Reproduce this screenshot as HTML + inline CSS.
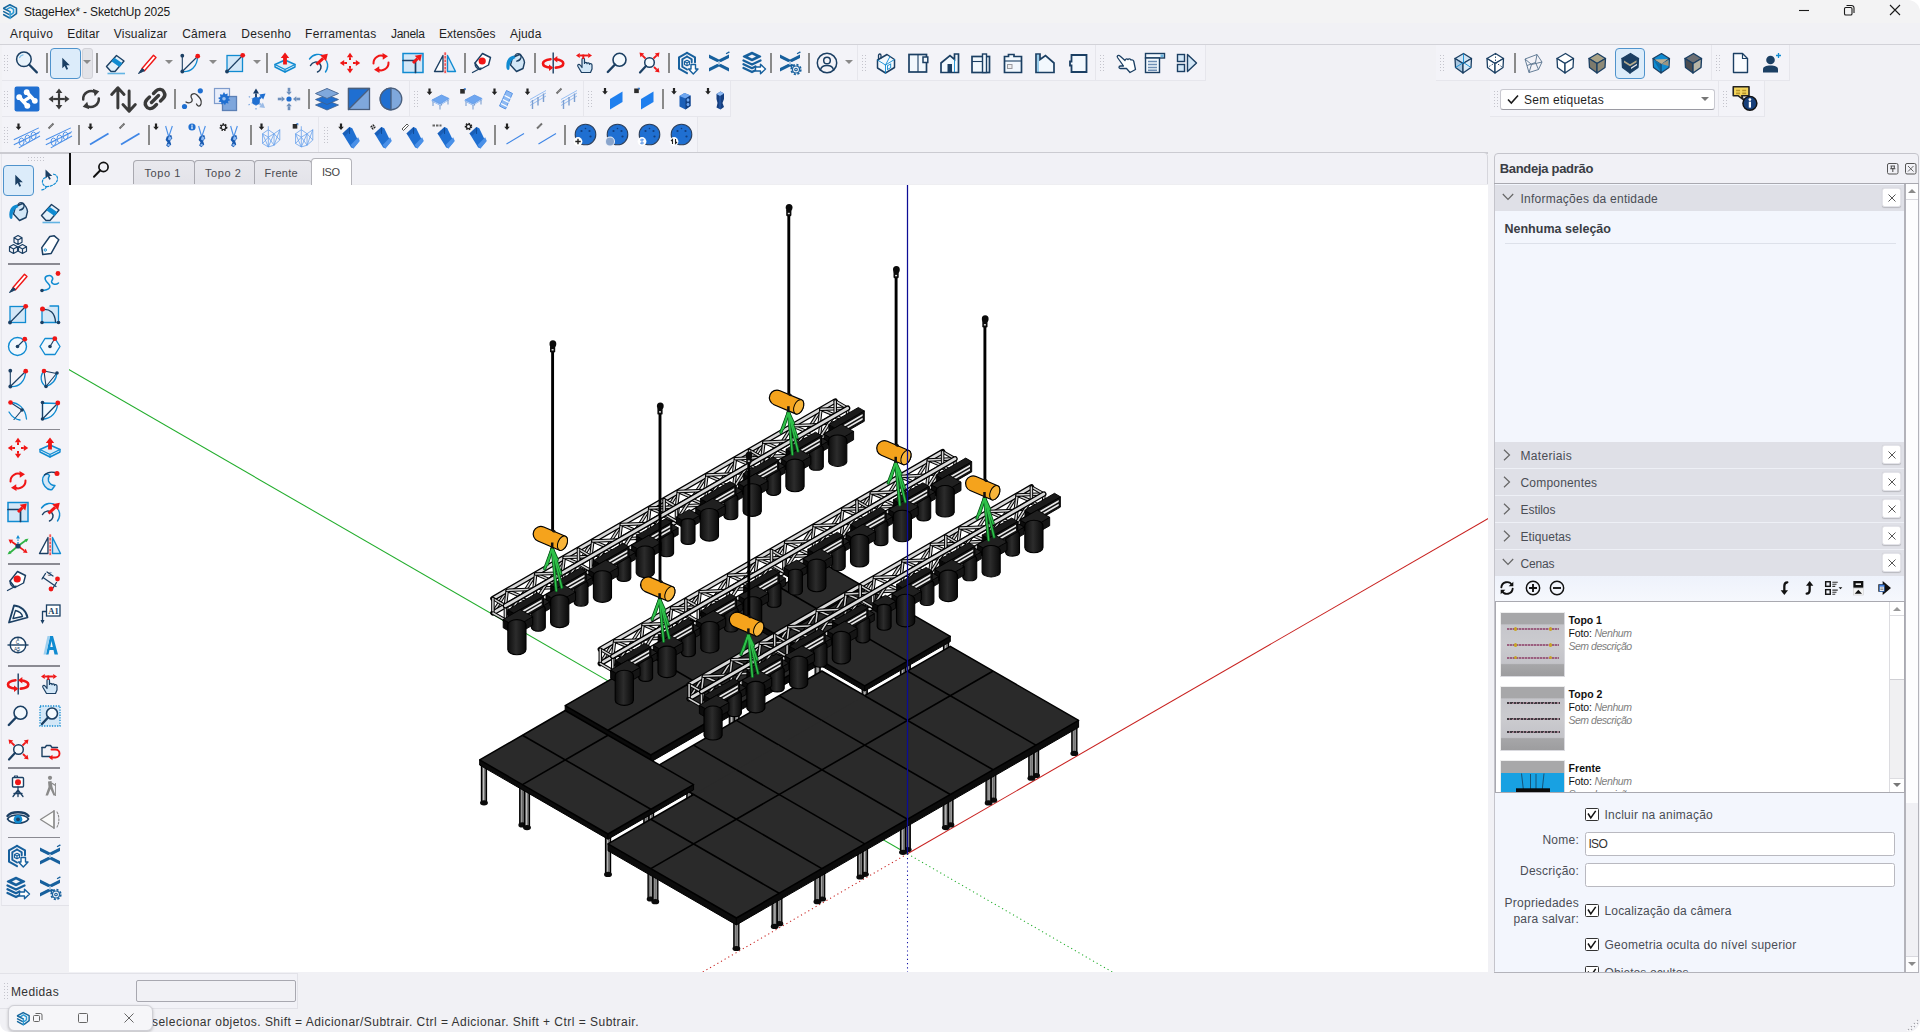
<!DOCTYPE html>
<html lang="pt-BR"><head><meta charset="utf-8"><title>StageHex* - SketchUp 2025</title>
<style>
html,body{margin:0;padding:0;}
body{width:1920px;height:1032px;overflow:hidden;background:#f1f1f5;font-family:"Liberation Sans",sans-serif;}
#app{position:relative;width:1920px;height:1032px;overflow:hidden;background:#f1f1f5;}
.t{position:absolute;white-space:nowrap;line-height:20px;height:20px;}
.b{position:absolute;box-sizing:border-box;}
.i{position:absolute;overflow:visible;}
.grip{position:absolute;width:5px;background-image:radial-gradient(circle,#c4c4cc 0.7px,transparent 0.9px);background-size:3px 3px;}

</style></head>
<body>
<div id="app">
<div class="b" style="left:0px;top:0px;width:1920px;height:23px;background:#f3f3f4"></div>
<svg class="i" style="left:1.55px;top:2.75px" width="16.5" height="16.5" viewBox="0 0 24 24"><path d="M2.500 7.500L11.500 2.500 21 7.500V15.500L13.500 21" fill="none" stroke="#15689f" stroke-width="2.3" stroke-linecap="round" stroke-linejoin="round" /><path d="M7.500 9L12 6.300 16.800 9.300V14L13.500 16.500" fill="none" stroke="#2a9bd6" stroke-width="2.3" stroke-linecap="round" stroke-linejoin="round" /><path d="M2.500 8L11.500 12.500M2.500 12.500L10 16.500M2.500 17L10.500 21.500" fill="none" stroke="#15689f" stroke-width="2.3" stroke-linecap="round" stroke-linejoin="round" /><path d="M11.800 12.500V22.500" fill="none" stroke="#2a9bd6" stroke-width="2.2" stroke-linecap="round" stroke-linejoin="round" /></svg>
<div class="t " style="left:24.00px;top:1.84px;font-size:12px;letter-spacing:-0.164px;color:#1a1a1a;">StageHex* - SketchUp 2025</div>
<svg class="i" style="left:1795px;top:0" width="120" height="22" viewBox="1795 0 120 22" fill="none" stroke="#1a1a1a" stroke-width="1.1"><path d="M1799 10.5H1809"/><rect x="1844.5" y="7.5" width="7.5" height="7.5" rx="1.3"/><path d="M1846.5 5.5h5a2.5 2.5 0 0 1 2.5 2.5v5"/><path d="M1890 5L1900 15M1900 5L1890 15"/></svg>
<div class="t " style="left:10.00px;top:24.14px;font-size:12px;letter-spacing:0.373px;color:#1f1f1f;">Arquivo</div>
<div class="t " style="left:67.20px;top:24.14px;font-size:12px;letter-spacing:0.192px;color:#1f1f1f;">Editar</div>
<div class="t " style="left:113.80px;top:24.14px;font-size:12px;letter-spacing:0.190px;color:#1f1f1f;">Visualizar</div>
<div class="t " style="left:182.20px;top:24.14px;font-size:12px;letter-spacing:0.237px;color:#1f1f1f;">Câmera</div>
<div class="t " style="left:241.30px;top:24.14px;font-size:12px;letter-spacing:0.281px;color:#1f1f1f;">Desenho</div>
<div class="t " style="left:305.00px;top:24.14px;font-size:12px;letter-spacing:0.316px;color:#1f1f1f;">Ferramentas</div>
<div class="t " style="left:391.00px;top:24.14px;font-size:12px;letter-spacing:-0.310px;color:#1f1f1f;">Janela</div>
<div class="t " style="left:439.00px;top:24.14px;font-size:12px;letter-spacing:0.052px;color:#1f1f1f;">Extensões</div>
<div class="t " style="left:510.00px;top:24.14px;font-size:12px;letter-spacing:0.162px;color:#1f1f1f;">Ajuda</div>
<div class="b" style="left:0px;top:43.7px;width:1920px;height:1.5px;background:#d2d2d8"></div>
<svg class="i" style="left:1908px;top:0" width="12" height="12" viewBox="0 0 12 12"><path d="M0 0H12V12A12 12 0 0 0 0 0Z" fill="#fff"/></svg>
<div class="b" style="left:2px;top:45px;width:856px;height:36px;background:#f3f3f8;border-right:1px solid #e6e6ec;border-bottom:1px solid #e6e6ec;"></div>
<div class="b" style="left:858px;top:45px;width:238px;height:36px;background:#f3f3f8;border-right:1px solid #e6e6ec;border-bottom:1px solid #e6e6ec;"></div>
<div class="b" style="left:1096px;top:45px;width:110px;height:36px;background:#f3f3f8;border-right:1px solid #e6e6ec;border-bottom:1px solid #e6e6ec;"></div>
<div class="b" style="left:1436px;top:45px;width:276px;height:36px;background:#f3f3f8;border-right:1px solid #e6e6ec;border-bottom:1px solid #e6e6ec;"></div>
<div class="b" style="left:1712px;top:45px;width:78px;height:36px;background:#f3f3f8;border-right:1px solid #e6e6ec;border-bottom:1px solid #e6e6ec;"></div>
<div class="b" style="left:2px;top:81px;width:408px;height:36px;background:#f3f3f8;border-right:1px solid #e6e6ec;border-bottom:1px solid #e6e6ec;"></div>
<div class="b" style="left:410px;top:81px;width:174px;height:36px;background:#f3f3f8;border-right:1px solid #e6e6ec;border-bottom:1px solid #e6e6ec;"></div>
<div class="b" style="left:584px;top:81px;width:147px;height:36px;background:#f3f3f8;border-right:1px solid #e6e6ec;border-bottom:1px solid #e6e6ec;"></div>
<div class="b" style="left:1490px;top:81px;width:229px;height:36px;background:#f3f3f8;border-right:1px solid #e6e6ec;border-bottom:1px solid #e6e6ec;"></div>
<div class="b" style="left:1719px;top:81px;width:46px;height:36px;background:#f3f3f8;border-right:1px solid #e6e6ec;border-bottom:1px solid #e6e6ec;"></div>
<div class="b" style="left:2px;top:117px;width:317px;height:36px;background:#f3f3f8;border-right:1px solid #e6e6ec;border-bottom:1px solid #e6e6ec;"></div>
<div class="b" style="left:319px;top:117px;width:379px;height:36px;background:#f3f3f8;border-right:1px solid #e6e6ec;border-bottom:1px solid #e6e6ec;"></div>
<div class="grip" style="left:3px;top:54px;height:18px"></div>
<div class="grip" style="left:861px;top:54px;height:18px"></div>
<div class="grip" style="left:1099px;top:54px;height:18px"></div>
<div class="grip" style="left:1439px;top:54px;height:18px"></div>
<div class="grip" style="left:1715px;top:54px;height:18px"></div>
<div class="grip" style="left:3px;top:90px;height:18px"></div>
<div class="grip" style="left:413px;top:90px;height:18px"></div>
<div class="grip" style="left:587px;top:90px;height:18px"></div>
<div class="grip" style="left:1493px;top:90px;height:18px"></div>
<div class="grip" style="left:1722px;top:90px;height:18px"></div>
<div class="grip" style="left:3px;top:126px;height:18px"></div>
<div class="grip" style="left:323px;top:126px;height:18px"></div>
<svg class="i" style="left:15.00px;top:51.00px" width="24" height="24" viewBox="0 0 24 24"><circle cx="8.900" cy="8.300" r="7.300" fill="#e9f3fb" stroke="#1b3f63" stroke-width="1.5"/><path d="M4.600 6.500a5 5 0 0 1 3.400-2.700" fill="none" stroke="#7fc1ea" stroke-width="1.3" stroke-linecap="round" stroke-linejoin="round" /><path d="M14.300 13.800L21.800 21.400" stroke="#1b3f63" stroke-width="2.300" stroke-linecap="round"/></svg>
<div class="b" style="left:46px;top:53px;width:2px;height:20px;background:#8a8a8a"></div>
<div class="b" style="left:50px;top:48px;width:30.5px;height:31px;background:#dcecfa;border:1px solid #4f93cc;border-radius:4px"></div>
<svg class="i" style="left:52.50px;top:51.00px" width="24" height="24" viewBox="0 0 24 24"><path d="M9.300 6.800V17.300L11.700 15 13.400 18.700 15.100 17.900 13.400 14.300H16.800Z" fill="#1b3f63"/></svg>
<div class="b" style="left:81.5px;top:48px;width:11px;height:31px;background:#e3e3e8;border:1px solid #d2d2d8;border-radius:3px"></div>
<svg class="i" style="left:83px;top:59.5px" width="8" height="4" viewBox="0 0 8 4"><path d="M0 0H8L4 4Z" fill="#8a8a8a"/></svg>
<div class="b" style="left:96px;top:53px;width:2px;height:20px;background:#8a8a8a"></div>
<svg class="i" style="left:102.50px;top:51.00px" width="24" height="24" viewBox="0 0 24 24"><path d="M3.500 15.500L13.500 4.500 21 10 12 20.500H8Z" fill="#e3f0fa" stroke="#1b3f63" stroke-width="1.4" stroke-linejoin="round"/><path d="M8.300 10.200L16.500 16 19.400 12.300 11.400 6.700Z" fill="#108bd1"/><path d="M4.500 22.500H22" stroke="#63b4e4" stroke-width="1.600"/></svg>
<svg class="i" style="left:134.50px;top:51.00px" width="24" height="24" viewBox="0 0 24 24"><path d="M7 17.500L18.500 4.300 21 6.500 9.500 19.700Z" fill="#fff" stroke="#f01616" stroke-width="1.400" stroke-linejoin="round"/><path d="M7 17.500L9.500 19.700 3.500 22.500Z" fill="#1b3f63" stroke="#1b3f63" stroke-width="1" stroke-linejoin="round"/></svg>
<svg class="i" style="left:165px;top:59.5px" width="8" height="4" viewBox="0 0 8 4"><path d="M0 0H8L4 4Z" fill="#8a8a8a"/></svg>
<svg class="i" style="left:178.00px;top:51.00px" width="24" height="24" viewBox="0 0 24 24"><path d="M4.300 20.500V5" fill="none" stroke="#1b3f63" stroke-width="1.1" stroke-linecap="round" stroke-linejoin="round" /><path d="M4.300 20.500L19.500 5.500" fill="none" stroke="#1b3f63" stroke-width="1.2" stroke-linecap="round" stroke-linejoin="round" /><path d="M4.300 20.500C13 21.500 19.500 15 19.500 5.500" fill="none" stroke="#108bd1" stroke-width="1.3" stroke-linecap="round" stroke-linejoin="round" /><circle cx="4.300" cy="4.700" r="1.900" fill="#1b3f63"/><circle cx="4.300" cy="20.500" r="1.900" fill="#1b3f63"/><circle cx="19.700" cy="5.200" r="2.400" fill="#f01616"/></svg>
<svg class="i" style="left:209px;top:59.5px" width="8" height="4" viewBox="0 0 8 4"><path d="M0 0H8L4 4Z" fill="#8a8a8a"/></svg>
<svg class="i" style="left:222.50px;top:51.00px" width="24" height="24" viewBox="0 0 24 24"><rect x="4" y="4.500" width="15.500" height="16" fill="#d3e7f7" stroke="#108bd1" stroke-width="1.300"/><path d="M4 20.500L19.500 4.500" stroke="#1b3f63" stroke-width="1.200"/><circle cx="4" cy="20.500" r="1.900" fill="#1b3f63"/><circle cx="19.700" cy="4.300" r="2.400" fill="#f01616"/></svg>
<svg class="i" style="left:253px;top:59.5px" width="8" height="4" viewBox="0 0 8 4"><path d="M0 0H8L4 4Z" fill="#8a8a8a"/></svg>
<div class="b" style="left:266px;top:53px;width:2px;height:20px;background:#8a8a8a"></div>
<svg class="i" style="left:273.00px;top:51.00px" width="24" height="24" viewBox="0 0 24 24"><path d="M2 13.500L12 9l10 4.500v2.500L12 21 2 16Z" fill="#dcedf9" stroke="#108bd1" stroke-width="1.400" stroke-linejoin="round"/><path d="M2 13.500L12 18.500 22 13.500M12 18.500V21" fill="none" stroke="#108bd1" stroke-width="1.3" stroke-linecap="round" stroke-linejoin="round" /><path d="M12 1.500L16.200 7H13.900V13.500H10.100V7H7.800Z" fill="#f01616"/></svg>
<svg class="i" style="left:305.50px;top:51.00px" width="24" height="24" viewBox="0 0 24 24"><path d="M3.500 8C7 3 14 2 18 5.500" fill="none" stroke="#108bd1" stroke-width="1.4" stroke-linecap="round" stroke-linejoin="round" /><path d="M20.500 10C22.500 14 21.500 18 19.500 21" fill="none" stroke="#108bd1" stroke-width="1.4" stroke-linecap="round" stroke-linejoin="round" /><path d="M4.500 14.500C6.500 10.500 11.500 10 14 13 16 15.500 15 19.500 11.500 21" fill="none" stroke="#1b3f63" stroke-width="1.5" stroke-linecap="round" stroke-linejoin="round" /><path d="M10.5 13.5L17.1 7.3" stroke="#f01616" stroke-width="3.0" fill="none"/><path d="M21.8 2.8L20.0 10.3L14.2 4.2Z" fill="#f01616"/></svg>
<svg class="i" style="left:337.50px;top:51.00px" width="24" height="24" viewBox="0 0 24 24"><path d="M12.0 9.0L12.0 6.2" stroke="#f01616" stroke-width="2.0" fill="none"/><path d="M12.0 1.8L15.1 6.2L8.9 6.2Z" fill="#f01616"/><path d="M12.0 15.0L12.0 17.8" stroke="#f01616" stroke-width="2.0" fill="none"/><path d="M12.0 22.2L8.9 17.8L15.1 17.8Z" fill="#f01616"/><path d="M9.0 12.0L6.2 12.0" stroke="#f01616" stroke-width="2.0" fill="none"/><path d="M1.8 12.0L6.2 8.9L6.2 15.1Z" fill="#f01616"/><path d="M15.0 12.0L17.8 12.0" stroke="#f01616" stroke-width="2.0" fill="none"/><path d="M22.2 12.0L17.8 15.1L17.8 8.9Z" fill="#f01616"/></svg>
<svg class="i" style="left:369.00px;top:51.00px" width="24" height="24" viewBox="0 0 24 24"><path d="M4.500 12.500A7.500 7.500 0 0 1 15.500 5.500" fill="none" stroke="#f01616" stroke-width="2" stroke-linecap="round" stroke-linejoin="round" /><path d="M13.500 2L19 5.200 13.800 8.800Z" fill="#f01616"/><path d="M19.500 11.500A7.500 7.500 0 0 1 8.500 18.500" fill="none" stroke="#f01616" stroke-width="2" stroke-linecap="round" stroke-linejoin="round" /><path d="M10.500 22L5 18.800 10.200 15.200Z" fill="#f01616"/></svg>
<svg class="i" style="left:401.00px;top:51.00px" width="24" height="24" viewBox="0 0 24 24"><rect x="2" y="2.500" width="20" height="19" fill="#d3e7f7" stroke="#108bd1" stroke-width="1.500"/><path d="M2 9.500H14.500V21.500" fill="none" stroke="#1b3f63" stroke-width="1.7" stroke-linecap="round" stroke-linejoin="round" /><path d="M12.0 12.0L16.5 7.7" stroke="#f01616" stroke-width="3.0" fill="none"/><path d="M20.8 3.5L19.3 10.5L13.7 4.8Z" fill="#f01616"/></svg>
<svg class="i" style="left:433.00px;top:51.00px" width="24" height="24" viewBox="0 0 24 24"><path d="M10 4.500V20.500H1.500Z" fill="#fff" stroke="#1b3f63" stroke-width="1.400" stroke-linejoin="round"/><path d="M14.500 4.500V20.500H22.500Z" fill="#d3e7f7" stroke="#108bd1" stroke-width="1.400" stroke-linejoin="round"/><path d="M12.200 1.500V22.500" stroke="#f01616" stroke-width="1.600" stroke-dasharray="2.400 1.200"/><path d="M12.200 1.500V22.500" stroke="#f7a0a0" stroke-width="3" opacity=".45"/></svg>
<div class="b" style="left:463.75px;top:53px;width:2px;height:20px;background:#8a8a8a"></div>
<svg class="i" style="left:470.50px;top:51.00px" width="24" height="24" viewBox="0 0 24 24"><path d="M4 12L11.500 2.500 19.500 6.500 17.500 14 9 18.500Z" fill="#fff" stroke="#1b3f63" stroke-width="1.400" stroke-linejoin="round"/><path d="M4 12C4 15 5.500 17.500 9 18.500" fill="none" stroke="#1b3f63" stroke-width="1.3" stroke-linecap="round" stroke-linejoin="round" /><path d="M1.500 21.500L10 17" fill="none" stroke="#1b3f63" stroke-width="1.4" stroke-linecap="round" stroke-linejoin="round" /><circle cx="11.200" cy="10" r="3.600" fill="#f01616"/></svg>
<svg class="i" style="left:502.50px;top:51.00px" width="24" height="24" viewBox="0 0 24 24"><path d="M9.500 6.500L16.500 3.500C19 5 21 8 21.500 11.500L20 17.500 13.500 20.500 7.500 14Z" fill="#d3e7f7" stroke="#1b3f63" stroke-width="1.400" stroke-linejoin="round"/><path d="M12 4.500C14 1.500 19 2.500 18 6.500 17.300 9 15.300 10 13.700 10.200" fill="none" stroke="#1b3f63" stroke-width="1.3" stroke-linecap="round" stroke-linejoin="round" /><path d="M11 4.500C6 5 2.500 10 3.500 17 4 19.500 6.500 19.500 6.500 17 6.500 12 8.500 8.500 12.500 7Z" fill="#108bd1"/></svg>
<div class="b" style="left:533.75px;top:53px;width:2px;height:20px;background:#8a8a8a"></div>
<svg class="i" style="left:541.00px;top:51.00px" width="24" height="24" viewBox="0 0 24 24"><path d="M12.200 1.500V22.500" stroke="#1b3f63" stroke-width="1.400"/><path d="M9.500 8.200C4.500 8.800 2 10.500 2 12.500 2 14.800 5.500 16.300 9.500 16.600" fill="none" stroke="#f01616" stroke-width="2.6" stroke-linecap="round" stroke-linejoin="round" /><path d="M8 13.600L12.300 16.800 8 20Z" fill="#f01616"/><path d="M14.800 16.600C19.500 16.200 22.300 14.600 22.300 12.500 22.300 10.500 19.500 8.800 14.800 8.200" fill="none" stroke="#f01616" stroke-width="2.6" stroke-linecap="round" stroke-linejoin="round" /><path d="M16.300 5L12 8.200 16.300 11.400Z" fill="#f01616"/></svg>
<svg class="i" style="left:573.00px;top:51.00px" width="24" height="24" viewBox="0 0 24 24"><path d="M8.500 21.500L5 15.500C4 13.500 6 12.500 7.500 14.500L9 16.500V8.500C9 6.500 11.500 6.500 11.500 8.500V12.500C11.500 11 14 11 14 12.700 14 11.500 16.500 11.500 16.500 13.300 16.500 12.200 19 12.300 19 14V18L17.500 21.500Z" fill="#d3e7f7" stroke="#1b3f63" stroke-width="1.200" stroke-linejoin="round"/><path d="M10.0 4.5L6.8 4.5" stroke="#f01616" stroke-width="1.9" fill="none"/><path d="M3.0 4.5L6.8 1.9L6.8 7.1Z" fill="#f01616"/><path d="M10.0 4.5L15.2 4.5" stroke="#f01616" stroke-width="1.9" fill="none"/><path d="M19.0 4.5L15.2 7.1L15.2 1.9Z" fill="#f01616"/><path d="M10.300 3.500V8" stroke="#f01616" stroke-width="1.900"/></svg>
<svg class="i" style="left:605.00px;top:51.00px" width="24" height="24" viewBox="0 0 24 24"><circle cx="14.500" cy="8.800" r="6.500" fill="#f4f9fd" stroke="#1b3f63" stroke-width="1.600"/><path d="M10 13.500L2.800 21" stroke="#1b3f63" stroke-width="2.400" stroke-linecap="round"/></svg>
<svg class="i" style="left:637.00px;top:51.00px" width="24" height="24" viewBox="0 0 24 24"><circle cx="12.500" cy="11.500" r="4.800" fill="#f4f9fd" stroke="#1b3f63" stroke-width="1.500"/><path d="M9 15L3 21.500" stroke="#1b3f63" stroke-width="2.200" stroke-linecap="round"/><path d="M8.5 7.5L5.3 4.3" stroke="#f01616" stroke-width="1.8" fill="none"/><path d="M2.5 1.5L7.2 2.5L3.5 6.2Z" fill="#f01616"/><path d="M16.5 7.5L19.7 4.3" stroke="#f01616" stroke-width="1.8" fill="none"/><path d="M22.5 1.5L21.5 6.2L17.8 2.5Z" fill="#f01616"/><path d="M17.0 16.0L19.7 18.7" stroke="#f01616" stroke-width="1.8" fill="none"/><path d="M22.5 21.5L17.8 20.5L21.5 16.8Z" fill="#f01616"/></svg>
<div class="b" style="left:667.75px;top:53px;width:2px;height:20px;background:#8a8a8a"></div>
<svg class="i" style="left:676.00px;top:51.00px" width="24" height="24" viewBox="0 0 24 24"><path d="M11 1.800L3 6.300v11.400l8 4.500" fill="none" stroke="#17609d" stroke-width="2.0" stroke-linecap="round" stroke-linejoin="round" /><path d="M11 1.800l8 4.500v5" fill="none" stroke="#17609d" stroke-width="2.0" stroke-linecap="round" stroke-linejoin="round" /><path d="M11 5.500L6.300 8.200v7.600l4.700 2.700" fill="none" stroke="#17609d" stroke-width="1.9" stroke-linecap="round" stroke-linejoin="round" /><path d="M11 5.500l4.700 2.700v3" fill="none" stroke="#17609d" stroke-width="1.9" stroke-linecap="round" stroke-linejoin="round" /><path d="M11 9.200l-2.500 1.400v2.800l2.500 1.400 2.500-1.400v-2.800zM11 12v2.800M8.500 10.600L11 12l2.500-1.400" fill="none" stroke="#17609d" stroke-width="1.1" stroke-linecap="round" stroke-linejoin="round" /><path d="M15 13.500h4.500v4.500h2.500l-4.700 5-4.800-5H15Z" fill="#fff" stroke="#17609d" stroke-width="1.400" stroke-linejoin="round"/></svg>
<svg class="i" style="left:707.00px;top:51.00px" width="24" height="24" viewBox="0 0 24 24"><path d="M2 3.500L12 8.500 22 3.500V7L12 12 2 7Z" fill="#17609d"/><path d="M2 20.500L12 15.500 22 20.500V17L12 12 2 17Z" fill="#17609d"/><path d="M3 8.800L12 13.200 21 8.800M3 15.200L12 10.800 21 15.200" stroke="#f3f3f8" stroke-width="1.200" fill="none"/><path d="M19.500 2.500l2.500-1.300" fill="none" stroke="#17609d" stroke-width="1.4" stroke-linecap="round" stroke-linejoin="round" /></svg>
<svg class="i" style="left:742.00px;top:51.00px" width="24" height="24" viewBox="0 0 24 24"><path d="M10 1.500L18.500 5.500 10 9.500 1.500 5.500Z" fill="#17609d" stroke="#17609d" stroke-width="1.500" stroke-linejoin="round"/><path d="M10 3.600l4 1.900L10 7.400 6 5.500Z" fill="#f3f3f8"/><path d="M1.500 9.500L10 13.500 18.500 9.500" fill="none" stroke="#17609d" stroke-width="2.3" stroke-linecap="round" stroke-linejoin="round" /><path d="M1.500 13.200L10 17.200 13.500 15.500" fill="none" stroke="#17609d" stroke-width="2.3" stroke-linecap="round" stroke-linejoin="round" /><path d="M1.500 17L10 21 12.500 19.800" fill="none" stroke="#17609d" stroke-width="2.3" stroke-linecap="round" stroke-linejoin="round" /><path d="M13.500 16h5v-2.800l5 4.800-5 4.800V20h-5Z" fill="#fff" stroke="#17609d" stroke-width="1.400" stroke-linejoin="round"/></svg>
<div class="b" style="left:769.6px;top:53px;width:2px;height:20px;background:#8a8a8a"></div>
<svg class="i" style="left:778.00px;top:51.00px" width="24" height="24" viewBox="0 0 24 24"><path d="M2 3.500L12 8.500 22 3.500V7L12 12 2 7Z" fill="#17609d"/><path d="M2 20.500L12 15.500 22 20.500V17L12 12 2 17Z" fill="#17609d"/><path d="M3 8.800L12 13.200 21 8.800M3 15.200L12 10.800 21 15.200" stroke="#f3f3f8" stroke-width="1.200" fill="none"/><path d="M19.500 2.500l2.500-1.300" fill="none" stroke="#17609d" stroke-width="1.4" stroke-linecap="round" stroke-linejoin="round" /><circle cx="18" cy="18.500" r="4.800" fill="#f3f3f8" stroke="#17609d" stroke-width="1.700" stroke-dasharray="2.100 1.650"/><circle cx="18" cy="18.500" r="3.500" fill="#f3f3f8" stroke="#17609d" stroke-width="1.200"/><circle cx="18" cy="18.500" r="1.300" fill="none" stroke="#17609d" stroke-width="1.100"/></svg>
<div class="b" style="left:807.75px;top:53px;width:2px;height:20px;background:#8a8a8a"></div>
<svg class="i" style="left:815.00px;top:51.00px" width="24" height="24" viewBox="0 0 24 24"><circle cx="12" cy="12" r="9.700" fill="none" stroke="#1b3f63" stroke-width="1.500"/><circle cx="12" cy="9.500" r="3.300" fill="none" stroke="#1b3f63" stroke-width="1.500"/><path d="M5.500 19C6 15.500 9 14.500 12 14.500S18 15.500 18.500 19" fill="none" stroke="#1b3f63" stroke-width="1.5" stroke-linecap="round" stroke-linejoin="round" /></svg>
<svg class="i" style="left:845px;top:59.5px" width="8" height="4" viewBox="0 0 8 4"><path d="M0 0H8L4 4Z" fill="#8a8a8a"/></svg>
<svg class="i" style="left:873.50px;top:51.00px" width="24" height="24" viewBox="0 0 24 24"><path d="M3.500 9L13 3.500 20.500 8.500V16.500L11.500 22 3.500 17Z" fill="#f2f8fd" stroke="#1b3f63" stroke-width="1.500" stroke-linejoin="round"/><path d="M3.500 9L11.500 14V22M11.500 14L20.500 8.500M11.500 14L16 5.500" fill="none" stroke="#108bd1" stroke-width="0.9" stroke-linecap="round" stroke-linejoin="round" /><path d="M4.500 8.500V4.500C4.500 2.500 7 2.500 7 4.500V7" fill="none" stroke="#1b3f63" stroke-width="1.3" stroke-linecap="round" stroke-linejoin="round" /><rect x="13.500" y="14.500" width="3.200" height="3.800" transform="skewY(-30) translate(0 8)" fill="none" stroke="#108bd1" stroke-width="0.9"/></svg>
<svg class="i" style="left:905.50px;top:51.00px" width="24" height="24" viewBox="0 0 24 24"><rect x="3" y="3.500" width="17.500" height="17.500" fill="#f2f8fd" stroke="#1b3f63" stroke-width="1.700"/><path d="M12 3.500V21" stroke="#1b3f63" stroke-width="1.100"/><rect x="17" y="6" width="4.800" height="5.500" fill="#f2f8fd" stroke="#1b3f63" stroke-width="1.500"/></svg>
<svg class="i" style="left:937.75px;top:51.00px" width="24" height="24" viewBox="0 0 24 24"><path d="M3 21.500V12L12 4.500 16.500 8.300V3H20.500V21.500Z" fill="#f2f8fd" stroke="#1b3f63" stroke-width="1.700" stroke-linejoin="miter"/><path d="M16.500 8.300V21" stroke="#108bd1" stroke-width="0.900"/><rect x="9.500" y="13" width="4.500" height="8.500" fill="#1b3f63"/></svg>
<svg class="i" style="left:969.25px;top:51.00px" width="24" height="24" viewBox="0 0 24 24"><rect x="3" y="5.500" width="17.500" height="16" fill="#f2f8fd" stroke="#1b3f63" stroke-width="1.700"/><path d="M3 10.500H13.500" stroke="#1b3f63" stroke-width="1.100"/><rect x="13.500" y="3" width="4" height="18.500" fill="#f2f8fd" stroke="#1b3f63" stroke-width="1.400"/></svg>
<svg class="i" style="left:1001.00px;top:51.00px" width="24" height="24" viewBox="0 0 24 24"><path d="M3.500 21.500V5.500H7.500V3.500H13V5.500H20.500V21.500Z" fill="#f2f8fd" stroke="#1b3f63" stroke-width="1.700" stroke-linejoin="miter"/><path d="M3.500 10H20.500" stroke="#1b3f63" stroke-width="1.100"/><rect x="6.500" y="13.500" width="4.500" height="4" fill="#eee" stroke="#9a9aa0" stroke-width="1"/></svg>
<svg class="i" style="left:1033.00px;top:51.00px" width="24" height="24" viewBox="0 0 24 24"><path d="M3 21.500V3H7V8.500L12.500 4.500 21 12V21.500Z" fill="#f2f8fd" stroke="#1b3f63" stroke-width="1.700" stroke-linejoin="miter"/><path d="M5 3.500V21" stroke="#108bd1" stroke-width="0.800"/></svg>
<svg class="i" style="left:1066.00px;top:51.00px" width="24" height="24" viewBox="0 0 24 24"><path d="M5.500 4H20.500V21H5.500V14.500H4V10.500H5.500Z" fill="#f2f8fd" stroke="#1b3f63" stroke-width="1.800" stroke-linejoin="miter"/></svg>
<svg class="i" style="left:1113.50px;top:51.00px" width="24" height="24" viewBox="0 0 24 24"><path d="M3.500 6.500C2.500 5 4.500 3.500 6 5L11 9.500C11 8 13 7.500 14 8.500 14.500 7.500 16.500 7.500 17 9 18 8.500 19.500 9 19.800 10.500L21.500 18.500 16 21.500 12.500 17.500H6.500C4.500 17.500 4.500 15 6.500 15H9.500Z" fill="#fff" stroke="#1b3f63" stroke-width="1.300" stroke-linejoin="round"/></svg>
<svg class="i" style="left:1143.00px;top:51.00px" width="24" height="24" viewBox="0 0 24 24"><rect x="2.500" y="2.500" width="19" height="4.500" fill="#f2f8fd" stroke="#1b3f63" stroke-width="1.400"/><rect x="17.500" y="3.500" width="3" height="2.500" fill="#108bd1" opacity=".6"/><rect x="2.500" y="7" width="14" height="14.500" fill="#f2f8fd" stroke="#1b3f63" stroke-width="1.400"/><path d="M5 10.500H14M5 13.500H14M5 16.500H14M5 19.300H14" stroke="#6f8fb5" stroke-width="1.600"/></svg>
<svg class="i" style="left:1175.00px;top:51.00px" width="24" height="24" viewBox="0 0 24 24"><rect x="2.500" y="3.500" width="7" height="7" fill="#d3e7f7" stroke="#1b3f63" stroke-width="1.400"/><rect x="2.500" y="13.500" width="7" height="7" fill="#d3e7f7" stroke="#1b3f63" stroke-width="1.400"/><path d="M12.500 3.500L21.500 12 12.500 20.500Z" fill="#d3e7f7" stroke="#1b3f63" stroke-width="1.400" stroke-linejoin="round"/></svg>
<svg class="i" style="left:1451.00px;top:51.00px" width="24" height="24" viewBox="0 0 24 24"><path d="M12.500 2.500L20.500 7.500 12 12.500 4 7.500Z" fill="#cfe3f3" stroke="#1b3f63" stroke-width="1.3" stroke-linejoin="round"/><path d="M4 7.500L12 12.500V22L4.500 16.500Z" fill="#a9c7e0" stroke="#1b3f63" stroke-width="1.3" stroke-linejoin="round"/><path d="M20.500 7.500L12 12.500V22L20 16.500Z" fill="#dcebf7" stroke="#1b3f63" stroke-width="1.3" stroke-linejoin="round"/><path d="M12.500 2.500V11.500L4.500 16.500M12.500 11.500L20 16.500" stroke="#108bd1" stroke-width="0.9" fill="none"/></svg>
<svg class="i" style="left:1483.00px;top:51.00px" width="24" height="24" viewBox="0 0 24 24"><path d="M12.500 2.500L20.500 7.500 12 12.500 4 7.500Z" fill="#fff" stroke="#1b3f63" stroke-width="1.3" stroke-linejoin="round"/><path d="M4 7.500L12 12.500V22L4.500 16.500Z" fill="#fff" stroke="#1b3f63" stroke-width="1.3" stroke-linejoin="round"/><path d="M20.500 7.500L12 12.500V22L20 16.500Z" fill="#fff" stroke="#1b3f63" stroke-width="1.3" stroke-linejoin="round"/><path d="M12.500 2.500V11.500L4.500 16.500M12.500 11.500L20 16.500" stroke="#1b3f63" stroke-width="0.9" fill="none" stroke-dasharray="1.500 1.500"/></svg>
<div class="b" style="left:1514px;top:53px;width:2px;height:20px;background:#8a8a8a"></div>
<svg class="i" style="left:1520.50px;top:51.00px" width="24" height="24" viewBox="0 0 24 24"><path d="M4 8L16 3.500 21 11 17.500 18.500 8 21.500Z M4 8L10.500 13.500 21 11M10.500 13.500L8 21.500M16 3.500L14.500 11.500 17.500 18.500M14.500 11.500L6 14.500" fill="none" stroke="#55708c" stroke-width="0.9" stroke-linejoin="round"/></svg>
<svg class="i" style="left:1553.00px;top:51.00px" width="24" height="24" viewBox="0 0 24 24"><path d="M12.500 2.500L20.500 7.500 12 12.500 4 7.500Z" fill="#fff" stroke="#1b3f63" stroke-width="1.3" stroke-linejoin="round"/><path d="M4 7.500L12 12.500V22L4.500 16.500Z" fill="#fff" stroke="#1b3f63" stroke-width="1.3" stroke-linejoin="round"/><path d="M20.500 7.500L12 12.500V22L20 16.500Z" fill="#fff" stroke="#1b3f63" stroke-width="1.3" stroke-linejoin="round"/></svg>
<svg class="i" style="left:1585.00px;top:51.00px" width="24" height="24" viewBox="0 0 24 24"><path d="M12.500 2.500L20.500 7.500 12 12.500 4 7.500Z" fill="#aaa387" stroke="#1b3f63" stroke-width="1.3" stroke-linejoin="round"/><path d="M4 7.500L12 12.500V22L4.500 16.500Z" fill="#7d7a6c" stroke="#1b3f63" stroke-width="1.3" stroke-linejoin="round"/><path d="M20.500 7.500L12 12.500V22L20 16.500Z" fill="#8f8b78" stroke="#1b3f63" stroke-width="1.3" stroke-linejoin="round"/></svg>
<div class="b" style="left:1614.5px;top:48px;width:30.5px;height:31px;background:#dcecfa;border:1px solid #4f93cc;border-radius:4px"></div>
<svg class="i" style="left:1617.50px;top:51.00px" width="24" height="24" viewBox="0 0 24 24"><path d="M12.500 2.500L20.500 7.500 12 12.500 4 7.500Z" fill="#1b3f63" stroke="#1b3f63" stroke-width="1.3" stroke-linejoin="round"/><path d="M4 7.500L12 12.500V22L4.500 16.500Z" fill="#1b3f63" stroke="#1b3f63" stroke-width="1.3" stroke-linejoin="round"/><path d="M20.500 7.500L12 12.500V22L20 16.500Z" fill="#1b3f63" stroke="#1b3f63" stroke-width="1.3" stroke-linejoin="round"/><path d="M6 9.500L12 13.200 18.500 9.300V11.300L12 15.200 6 11.500Z" fill="#b6ab8c"/><path d="M13 16.500L19 12.800V14.300L13 18Z" fill="#e8e8ee"/></svg>
<svg class="i" style="left:1649.00px;top:51.00px" width="24" height="24" viewBox="0 0 24 24"><path d="M12.500 2.500L20.500 7.500 12 12.500 4 7.500Z" fill="#108bd1" stroke="#1b3f63" stroke-width="1.2" stroke-linejoin="round"/><path d="M4 7.500L12 12.500V22L4.500 16.500Z" fill="#108bd1" stroke="#1b3f63" stroke-width="1.2" stroke-linejoin="round"/><path d="M20.500 7.500L12 12.500V22L20 16.500Z" fill="#108bd1" stroke="#1b3f63" stroke-width="1.2" stroke-linejoin="round"/><path d="M5.500 8.500L19 8 12.500 13Z" fill="#b9ad92"/><path d="M12.500 13L19.500 9V15Z" fill="#9c9480"/><path d="M5 9.500L11.500 13.500V20.500Z" fill="#0a6da8"/></svg>
<svg class="i" style="left:1681.00px;top:51.00px" width="24" height="24" viewBox="0 0 24 24"><path d="M12.500 2.500L20.500 7.500 12 12.500 4 7.500Z" fill="#6d6f73" stroke="#1b3f63" stroke-width="1.4" stroke-linejoin="round"/><path d="M4 7.500L12 12.500V22L4.500 16.500Z" fill="#4a4c50" stroke="#1b3f63" stroke-width="1.4" stroke-linejoin="round"/><path d="M20.500 7.500L12 12.500V22L20 16.500Z" fill="#b9b6a6" stroke="#1b3f63" stroke-width="1.4" stroke-linejoin="round"/></svg>
<svg class="i" style="left:1727.50px;top:51.00px" width="24" height="24" viewBox="0 0 24 24"><path d="M5.500 2.500H14.500L19.500 7.500V21.500H5.500Z" fill="#fafcff" stroke="#1b3f63" stroke-width="1.400" stroke-linejoin="round"/><path d="M14.500 2.500V7.500H19.500" fill="none" stroke="#1b3f63" stroke-width="1.2" stroke-linecap="round" stroke-linejoin="round" /></svg>
<svg class="i" style="left:1760.00px;top:51.00px" width="24" height="24" viewBox="0 0 24 24"><circle cx="10.500" cy="9" r="4.300" fill="#1b3f63"/><path d="M3 21.500V18.500C3 15.500 6 14.500 10.500 14.500S18 15.500 18 18.500V21.500Z" fill="#1b3f63"/><path d="M18.500 2V7M16 4.500H21" stroke="#108bd1" stroke-width="1.300"/></svg>
<svg class="i" style="left:14.00px;top:86.00px" width="26" height="26" viewBox="0 0 24 24"><rect x="0.500" y="0.500" width="23" height="23" rx="2" fill="#1f6fd1"/><path d="M4.500 10L12.500 18.500M11.500 5.500L19.500 14" stroke="#fff" stroke-width="3.400" stroke-linecap="round"/><path d="M9 14L15 10" stroke="#fff" stroke-width="3"/><circle cx="4.800" cy="10.300" r="2.700" fill="#fff"/><circle cx="12.300" cy="18.300" r="2.700" fill="#fff"/><circle cx="11.700" cy="5.700" r="2.700" fill="#fff"/><circle cx="19.200" cy="13.700" r="2.700" fill="#fff"/></svg>
<svg class="i" style="left:47.00px;top:87.00px" width="24" height="24" viewBox="0 0 24 24"><path d="M12.0 12.0L12.0 6.1" stroke="#3a3a3a" stroke-width="2.2" fill="none"/><path d="M12.0 1.5L15.4 6.1L8.6 6.1Z" fill="#3a3a3a"/><path d="M12.0 12.0L12.0 17.9" stroke="#3a3a3a" stroke-width="2.2" fill="none"/><path d="M12.0 22.5L8.6 17.9L15.4 17.9Z" fill="#3a3a3a"/><path d="M12.0 12.0L6.1 12.0" stroke="#3a3a3a" stroke-width="2.2" fill="none"/><path d="M1.5 12.0L6.1 8.6L6.1 15.4Z" fill="#3a3a3a"/><path d="M12.0 12.0L17.9 12.0" stroke="#3a3a3a" stroke-width="2.2" fill="none"/><path d="M22.5 12.0L17.9 15.4L17.9 8.6Z" fill="#3a3a3a"/></svg>
<svg class="i" style="left:79.00px;top:87.00px" width="24" height="24" viewBox="0 0 24 24"><path d="M4.200 12.500A8 8 0 0 1 16.500 5.300" fill="none" stroke="#3a3a3a" stroke-width="2.5" stroke-linecap="round" stroke-linejoin="round" /><path d="M13.800 1.800L20.300 4.200 15.800 9.300Z" fill="#3a3a3a"/><path d="M19.800 11.500A8 8 0 0 1 7.500 18.700" fill="none" stroke="#3a3a3a" stroke-width="2.5" stroke-linecap="round" stroke-linejoin="round" /><path d="M10.200 22.200L3.700 19.800 8.200 14.700Z" fill="#3a3a3a"/></svg>
<svg class="i" style="left:109.50px;top:85.50px" width="27" height="27" viewBox="0 0 24 24"><path d="M7 19.500V2M1.500 7.500L7 1.500 12.500 7.500" fill="none" stroke="#3a3a3a" stroke-width="2.6" stroke-linecap="round" stroke-linejoin="round" /><path d="M17 4.500V22M11.500 16.500L17 22.500 22.500 16.500" fill="none" stroke="#3a3a3a" stroke-width="2.6" stroke-linecap="round" stroke-linejoin="round" /></svg>
<svg class="i" style="left:143.00px;top:87.00px" width="24" height="24" viewBox="0 0 24 24"><path d="M10.500 6.500L13 4C15.500 1.500 19.500 2 21 5 22.500 7.500 21.500 10 20 11.500L17.500 14" fill="none" stroke="#3a3a3a" stroke-width="3.4" stroke-linecap="round" stroke-linejoin="round" /><path d="M13.500 17.500L11 20C8.500 22.500 4.500 22 3 19 1.500 16.500 2.500 14 4 12.500L6.500 10" fill="none" stroke="#3a3a3a" stroke-width="3.4" stroke-linecap="round" stroke-linejoin="round" /><path d="M8.500 15.500L15.500 8.500" fill="none" stroke="#3a3a3a" stroke-width="3.4" stroke-linecap="round" stroke-linejoin="round" /></svg>
<div class="b" style="left:174px;top:89px;width:2px;height:20px;background:#8a8a8a"></div>
<svg class="i" style="left:181.00px;top:87.00px" width="24" height="24" viewBox="0 0 24 24"><path d="M5 15C8 17 13 15 10.500 11 8.500 7.500 13 5 16 8 19 11 21 13 20 17 19 20 16.500 19.500 15.500 17" fill="none" stroke="#3a3a3a" stroke-width="1.3" stroke-linecap="round" stroke-linejoin="round" /><circle cx="19.300" cy="3.800" r="2.600" fill="#1f6fd1"/><circle cx="3.500" cy="19.500" r="2.600" fill="#1f6fd1"/></svg>
<svg class="i" style="left:213.00px;top:87.00px" width="24" height="24" viewBox="0 0 24 24"><rect x="1.500" y="1.500" width="15" height="15" fill="#e9eefa" stroke="#7f9ccc" stroke-width="1.200"/><rect x="9.500" y="9.500" width="14" height="14" fill="#7ea6dc" stroke="#5b7fb5" stroke-width="1.300"/><path d="M11 5l1.200 2.300 2.500-.8-.3 2.600 2.600.4-1.600 2 2 1.700-2.500.8.600 2.600-2.500-.700-1 2.400-1.500-2.100-2.200 1.400-.100-2.600-2.600-.200 1.400-2.200-2-1.700 2.400-1-.500-2.600 2.600.500z" fill="#1f6fd1"/><circle cx="11" cy="11.800" r="1.800" fill="#9dc0ee"/></svg>
<svg class="i" style="left:244.00px;top:87.00px" width="24" height="24" viewBox="0 0 24 24"><path d="M12.0 14.0L12.0 6.5" stroke="#163a66" stroke-width="1.8" fill="none"/><path d="M12.0 1.5L15.0 6.5L9.0 6.5Z" fill="#163a66"/><path d="M12.0 14.0L17.2 9.9" stroke="#1f6fd1" stroke-width="2.4" fill="none"/><path d="M21.5 6.5L19.2 12.4L15.2 7.4Z" fill="#1f6fd1"/><path d="M12.0 14.0L17.1 17.9" stroke="#9bbbe6" stroke-width="2.2" fill="none"/><path d="M21.0 21.0L15.2 20.3L18.9 15.6Z" fill="#9bbbe6"/><path d="M12 14L3.500 18.500M12 14V23M12 14L4 9" stroke="#7aa5df" stroke-width="1.200" stroke-dasharray="1.500 2"/><circle cx="12" cy="14" r="3.900" fill="#1f6fd1"/></svg>
<svg class="i" style="left:277.00px;top:87.00px" width="24" height="24" viewBox="0 0 24 24"><path d="M12.0 0.8L12.0 4.7" stroke="#6e8fbb" stroke-width="2.6" fill="none"/><path d="M12.0 8.0L9.3 4.7L14.7 4.7Z" fill="#6e8fbb"/><path d="M12.0 23.2L12.0 19.3" stroke="#6e8fbb" stroke-width="2.6" fill="none"/><path d="M12.0 16.0L14.7 19.3L9.3 19.3Z" fill="#6e8fbb"/><path d="M0.8 12.0L4.7 12.0" stroke="#6e8fbb" stroke-width="2.6" fill="none"/><path d="M8.0 12.0L4.7 14.7L4.7 9.3Z" fill="#6e8fbb"/><path d="M23.2 12.0L19.3 12.0" stroke="#6e8fbb" stroke-width="2.6" fill="none"/><path d="M16.0 12.0L19.3 9.3L19.3 14.7Z" fill="#6e8fbb"/><circle cx="12" cy="12" r="2.600" fill="#1f6fd1"/></svg>
<div class="b" style="left:307.75px;top:89px;width:2px;height:20px;background:#8a8a8a"></div>
<svg class="i" style="left:315.00px;top:87.00px" width="24" height="24" viewBox="0 0 24 24"><path d="M12 13.500L23.500 18 12 23 0.500 18Z" fill="#1f6fd1" stroke="#3f5f8a" stroke-width="0.800"/><path d="M12 8L23.500 12.500 12 17.500 0.500 12.500Z" fill="#1f6fd1" stroke="#3f5f8a" stroke-width="0.800"/><path d="M12 1.500L23.500 6.500 12 11.500 0.500 6.500Z" fill="#7fa8dc" stroke="#4d6d99" stroke-width="1"/></svg>
<svg class="i" style="left:347.00px;top:87.00px" width="24" height="24" viewBox="0 0 24 24"><rect x="1.500" y="1.500" width="21" height="21" fill="#7fa8dc" stroke="#4a5f7d" stroke-width="1.300"/><path d="M1.500 1.500H22.500L1.500 22.500Z" fill="#1f6fd1" stroke="#4a5f7d" stroke-width="1.300" stroke-linejoin="round"/></svg>
<svg class="i" style="left:379.00px;top:87.00px" width="24" height="24" viewBox="0 0 24 24"><circle cx="12" cy="12" r="10.800" fill="#7fa8dc" stroke="#4a5f7d" stroke-width="1.300"/><path d="M12 1.200A10.800 10.800 0 0 0 12 22.800Z" fill="#1f6fd1" stroke="#4a5f7d" stroke-width="1.300"/></svg>
<svg class="i" style="left:426.00px;top:87.00px" width="24" height="24" viewBox="0 0 24 24"><path d="M2.4 1.5h2.200v3.200h1.700l-2.800 3.300-2.800-3.300h1.700z" fill="#222"/><path d="M6 13L15.500 8 23 11.500 14 17Z" fill="#6ea6f0" stroke="#5a95e6" stroke-width="0.800"/><path d="M6 13V14.200L14 18.200 23 12.700V11.500" fill="none" stroke="#8db9f3" stroke-width="0.900"/><path d="M7 14.500V19M14 18V22.500M22 13V17.500M15.500 16.500V18.500" stroke="#7d9fd0" stroke-width="1.100"/></svg>
<svg class="i" style="left:459.00px;top:87.00px" width="24" height="24" viewBox="0 0 24 24"><rect x="1.2000000000000002" y="2" width="4.600" height="4.600" fill="#2c2c2c"/><path d="M4.5 1.2l2.300 0 0 2.300z" fill="#1f6fd1"/><path d="M6 13L15.500 8 23 11.500 14 17Z" fill="#6ea6f0" stroke="#5a95e6" stroke-width="0.800"/><path d="M6 13V14.200L14 18.200 23 12.700V11.500" fill="none" stroke="#8db9f3" stroke-width="0.900"/><path d="M7 14.500V19M14 18V22.500M22 13V17.500M15.500 16.500V18.500" stroke="#7d9fd0" stroke-width="1.100"/></svg>
<svg class="i" style="left:491.00px;top:87.00px" width="24" height="24" viewBox="0 0 24 24"><path d="M2.4 1.5h2.200v3.200h1.700l-2.800 3.300-2.800-3.300h1.700z" fill="#222"/><path d="M8.500 19L15.500 3.500 21.500 6.500 14.500 22Z" fill="#8db9f3" stroke="#5a95e6" stroke-width="1"/><path d="M10 16.500l6 3M11.800 12.500l6 3M13.600 8.500l6 3" stroke="#fff" stroke-width="1.300"/></svg>
<svg class="i" style="left:523.50px;top:87.00px" width="24" height="24" viewBox="0 0 24 24"><path d="M2.4 1.5h2.200v3.200h1.700l-2.800 3.300-2.800-3.300h1.700z" fill="#222"/><path d="M6 15.500L22 6M6 18.500L22 9M6 12.500L22 3.500" stroke="#8db9f3" stroke-width="0.900"/><path d="M8.500 13V22M14 10V18.500M19.500 6.500V15" stroke="#7d9fd0" stroke-width="1.400"/></svg>
<svg class="i" style="left:555.00px;top:87.00px" width="24" height="24" viewBox="0 0 24 24"><path d="M1.5 6.5L6.5 1.5" stroke="#666" stroke-width="1.800"/><path d="M1.5 6.5L6.5 1.5" stroke="#ddd" stroke-width="0.500" stroke-dasharray="1 1"/><path d="M6 15.500L22 6M6 18.500L22 9M6 12.500L22 3.500" stroke="#8db9f3" stroke-width="0.900"/><path d="M8.500 13V22M14 10V18.500M19.500 6.500V15" stroke="#7d9fd0" stroke-width="1.400"/></svg>
<svg class="i" style="left:600.50px;top:87.00px" width="24" height="24" viewBox="0 0 24 24"><path d="M2.9 1h2.200v3.200h1.700l-2.800 3.300-2.800-3.300h1.700z" fill="#222"/><path d="M9 12L21.500 4.500V15L9 22.500Z" fill="#1f7fee"/></svg>
<svg class="i" style="left:632.00px;top:87.00px" width="24" height="24" viewBox="0 0 24 24"><rect x="2.2" y="1.5" width="4.600" height="4.600" fill="#2c2c2c"/><path d="M5.5 0.7l2.300 0 0 2.300z" fill="#1f6fd1"/><path d="M9 12L21.500 4.500V15L9 22.500Z" fill="#1f7fee"/></svg>
<div class="b" style="left:662px;top:89px;width:2px;height:20px;background:#8a8a8a"></div>
<svg class="i" style="left:671.00px;top:87.00px" width="24" height="24" viewBox="0 0 24 24"><path d="M1.9 1h2.200v3.200h1.700l-2.800 3.300-2.800-3.300h1.700z" fill="#222"/><path d="M8.500 9L13.500 6 19.500 8.500V19L14.500 22.500 8.500 19.500Z" fill="#1b5fb8"/><path d="M13.500 6L19.500 8.500 14.500 11.500 8.500 9Z" fill="#6ea6f0"/><path d="M14.500 11.500V22.500L19.500 19V8.500Z" fill="#123f80"/><ellipse cx="17" cy="13" rx="1.400" ry="1.800" fill="#6ea6f0"/><ellipse cx="17" cy="17.500" rx="1.400" ry="1.800" fill="#6ea6f0"/></svg>
<svg class="i" style="left:705.00px;top:87.00px" width="24" height="24" viewBox="0 0 24 24"><path d="M1.9 1h2.200v3.200h1.700l-2.800 3.300-2.800-3.300h1.700z" fill="#222"/><path d="M11.500 7L15.500 4.500 19 6.500V12L17.500 16 19 20 15.500 22.500 11.500 20.500 12.500 16 11.500 12Z" fill="#163f80"/><path d="M11.500 7L15.500 4.500 19 6.500 15 9Z" fill="#8db9f3"/><path d="M15 9V22" stroke="#2a62b5" stroke-width="1"/></svg>
<div class="b" style="left:1500px;top:89px;width:215px;height:20.5px;background:#fff;border:1px solid #c9c9d0;border-bottom-color:#9a9aa2;border-radius:3px"></div>
<svg class="i" style="left:1507px;top:94px" width="12" height="11" viewBox="0 0 12 11"><path d="M1 5.5L4.3 9L11 1.5" fill="none" stroke="#1a1a1a" stroke-width="1.6"/></svg>
<div class="t " style="left:1524.00px;top:90.04px;font-size:12px;letter-spacing:0.253px;color:#1f1f1f;">Sem etiquetas</div>
<svg class="i" style="left:1700.5px;top:96.5px" width="8" height="4" viewBox="0 0 8 4"><path d="M0 0H8L4 4Z" fill="#777"/></svg>
<svg class="i" style="left:1731.00px;top:84.00px" width="27" height="27" viewBox="0 0 24 24"><path d="M2 2.500H16V10.500H9.500L11 14 6.500 10.500H2Z" fill="#f3d45c" stroke="#222" stroke-width="1.400" stroke-linejoin="round"/><path d="M4.500 5h3.500v1.500H4.500zM4.500 7.500h3.500V9H4.500zM10 5h3.500v1.500H10zM10 7.500h3.500V9H10z" fill="#b8962a"/><circle cx="16.800" cy="17.200" r="6.200" fill="#163f7a" stroke="#111" stroke-width="1.300"/><circle cx="16.800" cy="13.800" r="1.200" fill="#fff"/><rect x="15.800" y="15.700" width="2" height="5.300" fill="#fff"/></svg>
<svg class="i" style="left:15.00px;top:123.00px" width="24" height="24" viewBox="0 0 24 24"><path d="M-1.200 16.800L23.800 4.900M-1.200 21.800L23.800 9.900M3.800 19.900L25 8.600M3.800 24.900L25 13" stroke="#4a8fe8" stroke-width="1.050" fill="none"/><ellipse cx="6.500" cy="18.800" rx="2.500" ry="3.700" fill="none" stroke="#4a8fe8" stroke-width="0.950"/><ellipse cx="12.500" cy="15.800" rx="2.500" ry="3.700" fill="none" stroke="#4a8fe8" stroke-width="0.950"/><ellipse cx="18.500" cy="12.800" rx="2.500" ry="3.700" fill="none" stroke="#4a8fe8" stroke-width="0.950"/><path d="M2.4 0.5h2.200v3.200h1.700l-2.800 3.300-2.800-3.300h1.700z" fill="#222"/></svg>
<svg class="i" style="left:47.00px;top:123.00px" width="24" height="24" viewBox="0 0 24 24"><path d="M-1.200 16.800L23.800 4.900M-1.200 21.800L23.800 9.900M3.800 19.900L25 8.600M3.800 24.900L25 13" stroke="#4a8fe8" stroke-width="1.050" fill="none"/><ellipse cx="6.500" cy="18.800" rx="2.500" ry="3.700" fill="none" stroke="#4a8fe8" stroke-width="0.950"/><ellipse cx="12.500" cy="15.800" rx="2.500" ry="3.700" fill="none" stroke="#4a8fe8" stroke-width="0.950"/><ellipse cx="18.500" cy="12.800" rx="2.500" ry="3.700" fill="none" stroke="#4a8fe8" stroke-width="0.950"/><path d="M1.5 5.5L6.5 0.5" stroke="#666" stroke-width="1.800"/><path d="M1.5 5.5L6.5 0.5" stroke="#ddd" stroke-width="0.500" stroke-dasharray="1 1"/></svg>
<div class="b" style="left:77.75px;top:125px;width:2px;height:20px;background:#8a8a8a"></div>
<svg class="i" style="left:85.50px;top:123.00px" width="24" height="24" viewBox="0 0 24 24"><path d="M3.4 0.5h2.200v3.200h1.700l-2.800 3.300-2.800-3.300h1.700z" fill="#222"/><path d="M4 21.500L22.500 10.500" stroke="#3f86e6" stroke-width="1.800"/></svg>
<svg class="i" style="left:117.00px;top:123.00px" width="24" height="24" viewBox="0 0 24 24"><path d="M2.5 5.5L7.5 0.5" stroke="#666" stroke-width="1.800"/><path d="M2.5 5.5L7.5 0.5" stroke="#ddd" stroke-width="0.500" stroke-dasharray="1 1"/><path d="M4 21.500L22.500 10.500" stroke="#3f86e6" stroke-width="1.800"/></svg>
<div class="b" style="left:147.75px;top:125px;width:2px;height:20px;background:#8a8a8a"></div>
<svg class="i" style="left:153.00px;top:123.00px" width="24" height="24" viewBox="0 0 24 24"><path d="M1.9 0.5h2.200v3.200h1.700l-2.800 3.300-2.800-3.300h1.700z" fill="#222"/><g transform="translate(-2.500 -1.500) scale(1.12 1.12)"><path d="M13.500 4L16.500 14.500M19.500 4L16 14.500" stroke="#4a90e8" stroke-width="1"/><path d="M14.500 13.500L18.500 12 19.500 15 17.500 17.500 18.500 20.500 16 23 14 21.500 15.200 18.500 13.500 16.500Z" fill="#1759b0"/><path d="M16.500 13L19 14.500 17.500 17 15.500 16Z" fill="#8db9f3"/><circle cx="16.200" cy="21" r="1.100" fill="#8db9f3"/></g></svg>
<svg class="i" style="left:185.50px;top:123.00px" width="24" height="24" viewBox="0 0 24 24"><circle cx="6" cy="4" r="3.600" fill="#1f6fd1"/><rect x="5.400" y="3.300" width="1.200" height="2.800" fill="#fff"/><circle cx="6" cy="2.200" r="0.700" fill="#fff"/><g transform="translate(-2.500 -1.500) scale(1.12 1.12)"><path d="M13.500 4L16.500 14.500M19.500 4L16 14.500" stroke="#4a90e8" stroke-width="1"/><path d="M14.500 13.500L18.500 12 19.500 15 17.500 17.500 18.500 20.500 16 23 14 21.500 15.200 18.500 13.500 16.500Z" fill="#1759b0"/><path d="M16.500 13L19 14.500 17.500 17 15.500 16Z" fill="#8db9f3"/><circle cx="16.200" cy="21" r="1.100" fill="#8db9f3"/></g></svg>
<svg class="i" style="left:218.00px;top:123.00px" width="24" height="24" viewBox="0 0 24 24"><circle cx="5.5" cy="4.2" r="3.1" fill="none" stroke="#222" stroke-width="1.700" stroke-dasharray="1.500 1.150"/><circle cx="5.5" cy="4.2" r="2.3" fill="none" stroke="#222" stroke-width="1.200"/><g transform="translate(-2.500 -1.500) scale(1.12 1.12)"><path d="M13.500 4L16.500 14.500M19.500 4L16 14.500" stroke="#4a90e8" stroke-width="1"/><path d="M14.500 13.500L18.500 12 19.500 15 17.500 17.500 18.500 20.500 16 23 14 21.500 15.200 18.500 13.500 16.500Z" fill="#1759b0"/><path d="M16.500 13L19 14.500 17.500 17 15.500 16Z" fill="#8db9f3"/><circle cx="16.200" cy="21" r="1.100" fill="#8db9f3"/></g></svg>
<div class="b" style="left:249.6px;top:125px;width:2px;height:20px;background:#8a8a8a"></div>
<svg class="i" style="left:258.00px;top:123.00px" width="24" height="24" viewBox="0 0 24 24"><path d="M2.4 0.5h2.200v3.200h1.700l-2.800 3.300-2.800-3.300h1.700z" fill="#222"/><g transform="translate(-3.500 -2.500) scale(1.15 1.15)"><path d="M7 11.500L12 8 17 11.500 22 8V17L17 21.500 12 23 7 20ZM7 11.500L12 14.500V23M12 14.500L17 11.500V21.500M7 11.500L12 23M12 14.500L7 20M17 11.500L12 23M12 14.500L17 21.500M17 11.500L22 17M22 8L17 21.500M12 8V14.500M12 5V8" fill="none" stroke="#6aa3ec" stroke-width="0.700"/></g></svg>
<svg class="i" style="left:290.50px;top:123.00px" width="24" height="24" viewBox="0 0 24 24"><rect x="1.7000000000000002" y="1" width="4.600" height="4.600" fill="#2c2c2c"/><path d="M5 0.19999999999999996l2.300 0 0 2.300z" fill="#1f6fd1"/><g transform="translate(-3.500 -2.500) scale(1.15 1.15)"><path d="M7 11.500L12 8 17 11.500 22 8V17L17 21.500 12 23 7 20ZM7 11.500L12 14.500V23M12 14.500L17 11.500V21.500M7 11.500L12 23M12 14.500L7 20M17 11.500L12 23M12 14.500L17 21.500M17 11.500L22 17M22 8L17 21.500M12 8V14.500M12 5V8" fill="none" stroke="#6aa3ec" stroke-width="0.700"/></g></svg>
<svg class="i" style="left:336.75px;top:123.00px" width="24" height="24" viewBox="0 0 24 24"><path d="M2.9 0.5h2.200v3.200h1.700l-2.800 3.300-2.800-3.300h1.700z" fill="#222"/><g transform="translate(-1.500 -3) scale(1.08 1.28)"><path d="M6.500 10.500L13 5.500 15.500 6.500 21.500 17 16.500 22 14.500 21.500Z" fill="#1f6fd1"/><path d="M6.500 10.500L13 5.500 14 8 9 12.500Z" fill="#1a5fb8"/><path d="M14 19.500L21 13.500 22.500 16.500 16.500 22.500Z" fill="#4a90e8"/><path d="M13 6V11" stroke="#0f4a96" stroke-width="0.900"/></g></svg>
<svg class="i" style="left:368.60px;top:123.00px" width="24" height="24" viewBox="0 0 24 24"><path d="M2 4l2-2 2 2-2 2zM4.500 4.500l0 0" fill="none" stroke="#222" stroke-width="1.300" stroke-dasharray="1.800 1"/><g transform="translate(-1.500 -3) scale(1.08 1.28)"><path d="M6.500 10.500L13 5.500 15.500 6.500 21.500 17 16.500 22 14.500 21.500Z" fill="#1f6fd1"/><path d="M6.500 10.500L13 5.500 14 8 9 12.500Z" fill="#1a5fb8"/><path d="M14 19.500L21 13.500 22.500 16.500 16.500 22.500Z" fill="#4a90e8"/><path d="M13 6V11" stroke="#0f4a96" stroke-width="0.900"/></g></svg>
<svg class="i" style="left:400.50px;top:123.00px" width="24" height="24" viewBox="0 0 24 24"><path d="M1 6L6 1 7.500 2.500 2.500 7.500Z" fill="#fff" stroke="#444" stroke-width="0.900"/><g transform="translate(-1.500 -3) scale(1.08 1.28)"><path d="M6.500 10.500L13 5.500 15.500 6.500 21.500 17 16.500 22 14.500 21.500Z" fill="#1f6fd1"/><path d="M6.500 10.500L13 5.500 14 8 9 12.500Z" fill="#1a5fb8"/><path d="M14 19.500L21 13.500 22.500 16.500 16.500 22.500Z" fill="#4a90e8"/><path d="M13 6V11" stroke="#0f4a96" stroke-width="0.900"/></g></svg>
<svg class="i" style="left:432.40px;top:123.00px" width="24" height="24" viewBox="0 0 24 24"><path d="M0.500 2.500H3M4 2.500H6.500M7.500 2.500H9.500" stroke="#666" stroke-width="2"/><g transform="translate(-1.500 -3) scale(1.08 1.28)"><path d="M6.500 10.500L13 5.500 15.500 6.500 21.500 17 16.500 22 14.500 21.500Z" fill="#1f6fd1"/><path d="M6.500 10.500L13 5.500 14 8 9 12.500Z" fill="#1a5fb8"/><path d="M14 19.500L21 13.500 22.500 16.500 16.500 22.500Z" fill="#4a90e8"/><path d="M13 6V11" stroke="#0f4a96" stroke-width="0.900"/></g></svg>
<svg class="i" style="left:464.00px;top:123.00px" width="24" height="24" viewBox="0 0 24 24"><circle cx="4.5" cy="3.5" r="2.9" fill="none" stroke="#222" stroke-width="1.700" stroke-dasharray="1.500 1.150"/><circle cx="4.5" cy="3.5" r="2.0999999999999996" fill="none" stroke="#222" stroke-width="1.200"/><g transform="translate(-1.500 -3) scale(1.08 1.28)"><path d="M6.500 10.500L13 5.500 15.500 6.500 21.500 17 16.500 22 14.500 21.500Z" fill="#1f6fd1"/><path d="M6.500 10.500L13 5.500 14 8 9 12.500Z" fill="#1a5fb8"/><path d="M14 19.500L21 13.500 22.500 16.500 16.500 22.500Z" fill="#4a90e8"/><path d="M13 6V11" stroke="#0f4a96" stroke-width="0.900"/></g></svg>
<div class="b" style="left:494px;top:125px;width:2px;height:20px;background:#8a8a8a"></div>
<svg class="i" style="left:501.75px;top:123.00px" width="24" height="24" viewBox="0 0 24 24"><path d="M3.9 0.5h2.200v3.200h1.700l-2.800 3.300-2.800-3.300h1.700z" fill="#222"/><path d="M4.500 21L22 10.500" stroke="#3f86e6" stroke-width="1.100"/></svg>
<svg class="i" style="left:534.00px;top:123.00px" width="24" height="24" viewBox="0 0 24 24"><path d="M3.0 5.5L8.0 0.5" stroke="#666" stroke-width="1.800"/><path d="M3.0 5.5L8.0 0.5" stroke="#ddd" stroke-width="0.500" stroke-dasharray="1 1"/><path d="M4.500 21L22 10.500" stroke="#3f86e6" stroke-width="1.100"/></svg>
<div class="b" style="left:563.75px;top:125px;width:2px;height:20px;background:#8a8a8a"></div>
<svg class="i" style="left:571.75px;top:123.00px" width="24" height="24" viewBox="0 0 24 24"><circle cx="13.500" cy="11.500" r="10.300" fill="#1f6fd1" stroke="#2b3f5c" stroke-width="1.100"/><circle cx="9.500" cy="8" r="1.100" fill="#123f80"/><circle cx="17.500" cy="8" r="1.100" fill="#123f80"/><circle cx="18.500" cy="13.500" r="1.100" fill="#123f80"/><circle cx="13.500" cy="5.500" r="0.800" fill="#123f80"/><circle cx="6" cy="18.500" r="4.400" fill="#fff"/><path d="M6 15.800V21.200M3.300 18.500H8.700" stroke="#222" stroke-width="1.400"/></svg>
<svg class="i" style="left:604.00px;top:123.00px" width="24" height="24" viewBox="0 0 24 24"><circle cx="13.500" cy="11.500" r="10.300" fill="#1f6fd1" stroke="#2b3f5c" stroke-width="1.100"/><circle cx="9.500" cy="8" r="1.100" fill="#123f80"/><circle cx="17.500" cy="8" r="1.100" fill="#123f80"/><circle cx="18.500" cy="13.500" r="1.100" fill="#123f80"/><circle cx="13.500" cy="5.500" r="0.800" fill="#123f80"/><circle cx="6" cy="18.500" r="5" fill="#e8eef8"/><circle cx="6" cy="18.500" r="4" fill="#8aa5cc"/></svg>
<svg class="i" style="left:636.00px;top:123.00px" width="24" height="24" viewBox="0 0 24 24"><circle cx="13.500" cy="11.500" r="10.300" fill="#1f6fd1" stroke="#2b3f5c" stroke-width="1.100"/><circle cx="9.500" cy="8" r="1.100" fill="#123f80"/><circle cx="17.500" cy="8" r="1.100" fill="#123f80"/><circle cx="18.500" cy="13.500" r="1.100" fill="#123f80"/><circle cx="13.500" cy="5.500" r="0.800" fill="#123f80"/><circle cx="6" cy="18.500" r="4.400" fill="#fff"/><path d="M4 17H7.500L6 15.500M8 20H4.500L6 21.500M6 16V21" stroke="#5a95e6" stroke-width="1" fill="none"/></svg>
<svg class="i" style="left:668.00px;top:123.00px" width="24" height="24" viewBox="0 0 24 24"><circle cx="13.500" cy="11.500" r="10.300" fill="#1f6fd1" stroke="#2b3f5c" stroke-width="1.100"/><circle cx="9.500" cy="8" r="1.100" fill="#123f80"/><circle cx="17.500" cy="8" r="1.100" fill="#123f80"/><circle cx="18.500" cy="13.500" r="1.100" fill="#123f80"/><circle cx="13.500" cy="5.500" r="0.800" fill="#123f80"/><circle cx="6" cy="18.500" r="4.400" fill="#fff"/><path d="M4.500 21V16.500L3 18M7.500 16V20.500L9 19" stroke="#222" stroke-width="1.100" fill="none"/></svg>
<div class="b" style="left:1px;top:153.5px;width:68px;height:752px;background:#f3f3f8;border-bottom:1px solid #e2e2e8;border-left:1px solid #e6e6ec"></div>
<div class="b" style="left:0px;top:152px;width:1488px;height:1.5px;background:#cbcbd1"></div>
<div class="grip" style="left:27px;top:156px;width:17px;height:5px"></div>
<div class="b" style="left:3px;top:165px;width:30.5px;height:31px;background:#dcecfa;border:1px solid #4f93cc;border-radius:4px"></div>
<svg class="i" style="left:6.00px;top:168.00px" width="24" height="24" viewBox="0 0 24 24"><path d="M9.300 6.800V17.300L11.700 15 13.400 18.700 15.100 17.900 13.400 14.300H16.800Z" fill="#1b3f63"/></svg>
<svg class="i" style="left:37.70px;top:168.00px" width="24" height="24" viewBox="0 0 24 24"><path d="M7.500 1.500V10.500L9.700 8.500 11.200 11.800 12.800 11.100 11.300 7.900H14.300Z" fill="#1b3f63"/><path d="M7.500 9.500C3 11 3.500 18 8.500 18.500M8.500 18.500C7.500 21 5.500 21.800 3.500 22M8.500 18.500C14 19 21.500 14 19 8.500 18 6.500 16 6 14.500 6.300" fill="none" stroke="#108bd1" stroke-width="1.2" stroke-linecap="round" stroke-linejoin="round"  stroke-dasharray="2.200 1.600"/></svg>
<svg class="i" style="left:6.00px;top:199.50px" width="24" height="24" viewBox="0 0 24 24"><path d="M9.500 6.500L16.500 3.500C19 5 21 8 21.500 11.500L20 17.500 13.500 20.500 7.500 14Z" fill="#d3e7f7" stroke="#1b3f63" stroke-width="1.400" stroke-linejoin="round"/><path d="M12 4.500C14 1.500 19 2.500 18 6.500 17.300 9 15.300 10 13.700 10.200" fill="none" stroke="#1b3f63" stroke-width="1.3" stroke-linecap="round" stroke-linejoin="round" /><path d="M11 4.500C6 5 2.500 10 3.500 17 4 19.500 6.500 19.500 6.500 17 6.500 12 8.500 8.500 12.500 7Z" fill="#108bd1"/></svg>
<svg class="i" style="left:37.70px;top:199.50px" width="24" height="24" viewBox="0 0 24 24"><path d="M3.500 15.500L13.500 4.500 21 10 12 20.500H8Z" fill="#e3f0fa" stroke="#1b3f63" stroke-width="1.4" stroke-linejoin="round"/><path d="M8.300 10.200L16.500 16 19.400 12.300 11.400 6.700Z" fill="#108bd1"/><path d="M4.500 22.500H22" stroke="#63b4e4" stroke-width="1.600"/></svg>
<svg class="i" style="left:6.00px;top:232.70px" width="24" height="24" viewBox="0 0 24 24"><path d="M12 2.500L16 4.700V9.300L12 11.500 8 9.300V4.700Z M8 4.700L12 7 16 4.700M12 7V11.500" fill="none" stroke="#1b3f63" stroke-width="1.2" stroke-linecap="round" stroke-linejoin="round" /><path d="M7.500 11.500L11.500 13.700V18.300L7.500 20.500 3.500 18.300V13.700Z M3.500 13.700L7.500 16 11.500 13.700M7.500 16V20.500" fill="none" stroke="#1b3f63" stroke-width="1.2" stroke-linecap="round" stroke-linejoin="round" /><path d="M16.500 11.500L20.500 13.700V18.300L16.500 20.500 12.500 18.300V13.700Z M12.500 13.700L16.500 16 20.500 13.700M16.500 16V20.500" fill="none" stroke="#1b3f63" stroke-width="1.2" stroke-linecap="round" stroke-linejoin="round" /></svg>
<svg class="i" style="left:37.70px;top:232.70px" width="24" height="24" viewBox="0 0 24 24"><path d="M3.500 13.500L13 3.500H17.500L21.500 8 12 20.500H3.500Z" fill="#fff" stroke="#1b3f63" stroke-width="1.500" stroke-linejoin="round" transform="rotate(-8 12 12)"/><circle cx="7.300" cy="17" r="1.200" fill="none" stroke="#108bd1" stroke-width="1"/></svg>
<svg class="i" style="left:6.00px;top:270.00px" width="24" height="24" viewBox="0 0 24 24"><path d="M7 17.500L18.500 4.300 21 6.500 9.500 19.700Z" fill="#fff" stroke="#f01616" stroke-width="1.400" stroke-linejoin="round"/><path d="M7 17.500L9.500 19.700 3.500 22.500Z" fill="#1b3f63" stroke="#1b3f63" stroke-width="1" stroke-linejoin="round"/></svg>
<svg class="i" style="left:37.70px;top:270.00px" width="24" height="24" viewBox="0 0 24 24"><path d="M4 20C9 21 14 18 11 14.500 8 11 5 8 9 6 13 4 16 8 14 10.500S17 16 20.500 13" fill="none" stroke="#108bd1" stroke-width="1.5" stroke-linecap="round" stroke-linejoin="round" /><circle cx="4" cy="20.500" r="1.800" fill="#1b3f63"/><circle cx="20" cy="3.500" r="2.400" fill="#f01616"/></svg>
<svg class="i" style="left:6.00px;top:302.30px" width="24" height="24" viewBox="0 0 24 24"><rect x="4" y="4.500" width="15.500" height="16" fill="#d3e7f7" stroke="#108bd1" stroke-width="1.300"/><path d="M4 20.500L19.500 4.500" stroke="#1b3f63" stroke-width="1.200"/><circle cx="4" cy="20.500" r="1.900" fill="#1b3f63"/><circle cx="19.700" cy="4.300" r="2.400" fill="#f01616"/></svg>
<svg class="i" style="left:37.70px;top:302.30px" width="24" height="24" viewBox="0 0 24 24"><path d="M4 8V20.500H20.500V4H12" fill="#d3e7f7" stroke="#108bd1" stroke-width="1.3" stroke-linecap="round" stroke-linejoin="round" /><path d="M4.500 7.500C12 6.500 17 11 17.500 20" fill="none" stroke="#1b3f63" stroke-width="1.3" stroke-linecap="round" stroke-linejoin="round" /><circle cx="4" cy="20.500" r="1.800" fill="#1b3f63"/><circle cx="20.500" cy="20.500" r="1.800" fill="#1b3f63"/><circle cx="4.500" cy="7" r="2.500" fill="#f01616"/></svg>
<svg class="i" style="left:6.00px;top:333.70px" width="24" height="24" viewBox="0 0 24 24"><circle cx="11.500" cy="12.500" r="9" fill="#f2f8fd" stroke="#108bd1" stroke-width="1.400"/><path d="M11.500 12.500L18.500 5.500" stroke="#1b3f63" stroke-width="1.100"/><circle cx="11.500" cy="12.500" r="1.800" fill="#1b3f63"/><circle cx="18.800" cy="5.200" r="2.400" fill="#f01616"/></svg>
<svg class="i" style="left:37.70px;top:333.70px" width="24" height="24" viewBox="0 0 24 24"><path d="M7 4.500H17L22 12.500 17 20.500H7L2 12.500Z" fill="#f2f8fd" stroke="#108bd1" stroke-width="1.400" stroke-linejoin="round"/><path d="M12 12.500L16.500 5" stroke="#1b3f63" stroke-width="1.100"/><circle cx="12" cy="12.500" r="1.800" fill="#1b3f63"/><circle cx="16.800" cy="4.700" r="2.400" fill="#f01616"/></svg>
<svg class="i" style="left:6.00px;top:366.00px" width="24" height="24" viewBox="0 0 24 24"><path d="M4.300 20.500V5" fill="none" stroke="#1b3f63" stroke-width="1.1" stroke-linecap="round" stroke-linejoin="round" /><path d="M4.300 20.500L19.500 5.500" fill="none" stroke="#1b3f63" stroke-width="1.2" stroke-linecap="round" stroke-linejoin="round" /><path d="M4.300 20.500C13 21.500 19.500 15 19.500 5.500" fill="none" stroke="#108bd1" stroke-width="1.3" stroke-linecap="round" stroke-linejoin="round" /><circle cx="4.300" cy="4.700" r="1.900" fill="#1b3f63"/><circle cx="4.300" cy="20.500" r="1.900" fill="#1b3f63"/><circle cx="19.700" cy="5.200" r="2.400" fill="#f01616"/></svg>
<svg class="i" style="left:37.70px;top:366.00px" width="24" height="24" viewBox="0 0 24 24"><path d="M6 5L18.500 7.500 8 20.500Z" fill="none" stroke="#1b3f63" stroke-width="1.1" stroke-linecap="round" stroke-linejoin="round" /><path d="M6 5C1.500 10 2.500 17 8 20.500" fill="none" stroke="#108bd1" stroke-width="1.3" stroke-linecap="round" stroke-linejoin="round" /><path d="M18.500 7.500C19 13 14 19 8 20.500" fill="none" stroke="#108bd1" stroke-width="1.3" stroke-linecap="round" stroke-linejoin="round" /><circle cx="6" cy="5" r="2.300" fill="#f01616"/><circle cx="19" cy="7" r="1.800" fill="#1b3f63"/><circle cx="8" cy="20.500" r="1.800" fill="#1b3f63"/></svg>
<svg class="i" style="left:6.00px;top:398.30px" width="24" height="24" viewBox="0 0 24 24"><path d="M4.500 4.500C12 4.500 19.500 10 20.500 21" fill="none" stroke="#108bd1" stroke-width="1.3" stroke-linecap="round" stroke-linejoin="round" /><path d="M4.500 4.500L16 12M16 12L8 21.500" fill="none" stroke="#1b3f63" stroke-width="1.1" stroke-linecap="round" stroke-linejoin="round" /><path d="M3 14C6 19 10 21.500 14 22" fill="none" stroke="#108bd1" stroke-width="1.3" stroke-linecap="round" stroke-linejoin="round" /><circle cx="4.500" cy="4.500" r="2.300" fill="#f01616"/><circle cx="16" cy="12" r="1.800" fill="#1b3f63"/></svg>
<svg class="i" style="left:37.70px;top:398.30px" width="24" height="24" viewBox="0 0 24 24"><path d="M4.500 21V5L19.500 5.500C19.500 14 13 21 4.500 21Z" fill="#f2f8fd" stroke="#108bd1" stroke-width="1.300" stroke-linejoin="round"/><path d="M4.500 21V5M4.500 21L19.500 5.500" fill="none" stroke="#1b3f63" stroke-width="1.2" stroke-linecap="round" stroke-linejoin="round" /><circle cx="4.500" cy="4.500" r="1.800" fill="#1b3f63"/><circle cx="4.500" cy="21" r="1.800" fill="#1b3f63"/><circle cx="19.800" cy="5" r="2.400" fill="#f01616"/></svg>
<svg class="i" style="left:6.00px;top:435.60px" width="24" height="24" viewBox="0 0 24 24"><path d="M12.0 9.0L12.0 6.2" stroke="#f01616" stroke-width="2.0" fill="none"/><path d="M12.0 1.8L15.1 6.2L8.9 6.2Z" fill="#f01616"/><path d="M12.0 15.0L12.0 17.8" stroke="#f01616" stroke-width="2.0" fill="none"/><path d="M12.0 22.2L8.9 17.8L15.1 17.8Z" fill="#f01616"/><path d="M9.0 12.0L6.2 12.0" stroke="#f01616" stroke-width="2.0" fill="none"/><path d="M1.8 12.0L6.2 8.9L6.2 15.1Z" fill="#f01616"/><path d="M15.0 12.0L17.8 12.0" stroke="#f01616" stroke-width="2.0" fill="none"/><path d="M22.2 12.0L17.8 15.1L17.8 8.9Z" fill="#f01616"/></svg>
<svg class="i" style="left:37.70px;top:435.60px" width="24" height="24" viewBox="0 0 24 24"><path d="M2 13.500L12 9l10 4.500v2.500L12 21 2 16Z" fill="#dcedf9" stroke="#108bd1" stroke-width="1.400" stroke-linejoin="round"/><path d="M2 13.500L12 18.500 22 13.500M12 18.500V21" fill="none" stroke="#108bd1" stroke-width="1.3" stroke-linecap="round" stroke-linejoin="round" /><path d="M12 1.500L16.200 7H13.900V13.500H10.100V7H7.800Z" fill="#f01616"/></svg>
<svg class="i" style="left:6.00px;top:468.60px" width="24" height="24" viewBox="0 0 24 24"><path d="M4.500 12.500A7.500 7.500 0 0 1 15.500 5.500" fill="none" stroke="#f01616" stroke-width="2" stroke-linecap="round" stroke-linejoin="round" /><path d="M13.500 2L19 5.200 13.800 8.800Z" fill="#f01616"/><path d="M19.500 11.500A7.500 7.500 0 0 1 8.500 18.500" fill="none" stroke="#f01616" stroke-width="2" stroke-linecap="round" stroke-linejoin="round" /><path d="M10.500 22L5 18.800 10.200 15.200Z" fill="#f01616"/></svg>
<svg class="i" style="left:37.70px;top:468.60px" width="24" height="24" viewBox="0 0 24 24"><path d="M6.500 6C3.500 9 4 14 7 17.500 9 20 12 21 14 20.500L17 16.500C14 16.500 11.500 14.500 10.500 12 10 10 10.500 8 11.500 6.500 10 4.500 8 4.500 6.500 6Z" fill="#d3e7f7" stroke="#108bd1" stroke-width="1.400" stroke-linejoin="round"/><path d="M6.500 6C9 3.500 13 2.500 17 3.500" fill="none" stroke="#1b3f63" stroke-width="1.3" stroke-linecap="round" stroke-linejoin="round" /><circle cx="19" cy="4.500" r="2.500" fill="#f01616"/></svg>
<svg class="i" style="left:6.00px;top:500.00px" width="24" height="24" viewBox="0 0 24 24"><rect x="2" y="2.500" width="20" height="19" fill="#d3e7f7" stroke="#108bd1" stroke-width="1.500"/><path d="M2 9.500H14.500V21.500" fill="none" stroke="#1b3f63" stroke-width="1.7" stroke-linecap="round" stroke-linejoin="round" /><path d="M12.0 12.0L16.5 7.7" stroke="#f01616" stroke-width="3.0" fill="none"/><path d="M20.8 3.5L19.3 10.5L13.7 4.8Z" fill="#f01616"/></svg>
<svg class="i" style="left:37.70px;top:500.00px" width="24" height="24" viewBox="0 0 24 24"><path d="M3.500 8C7 3 14 2 18 5.500" fill="none" stroke="#108bd1" stroke-width="1.4" stroke-linecap="round" stroke-linejoin="round" /><path d="M20.500 10C22.500 14 21.500 18 19.500 21" fill="none" stroke="#108bd1" stroke-width="1.4" stroke-linecap="round" stroke-linejoin="round" /><path d="M4.500 14.500C6.500 10.500 11.500 10 14 13 16 15.500 15 19.500 11.500 21" fill="none" stroke="#1b3f63" stroke-width="1.5" stroke-linecap="round" stroke-linejoin="round" /><path d="M10.5 13.5L17.1 7.3" stroke="#f01616" stroke-width="3.0" fill="none"/><path d="M21.8 2.8L20.0 10.3L14.2 4.2Z" fill="#f01616"/></svg>
<svg class="i" style="left:6.00px;top:533.00px" width="24" height="24" viewBox="0 0 24 24"><path d="M12 13V2.500" stroke="#108bd1" stroke-width="1.300" stroke-dasharray="1.300 1.300"/><path d="M12 2L14 5.500H10Z" fill="#108bd1"/><path d="M12.0 13.0L18.3 17.6" stroke="#f01616" stroke-width="1.7" fill="none"/><path d="M21.5 20.0L16.9 19.6L19.7 15.7Z" fill="#f01616"/><path d="M12.0 13.0L5.8 8.8" stroke="#f01616" stroke-width="1.7" fill="none"/><path d="M2.5 6.5L7.2 6.8L4.4 10.7Z" fill="#f01616"/><path d="M12 13L3 20.500" stroke="#2fb344" stroke-width="1.700"/><path d="M12 13L21 6.500" stroke="#2fb344" stroke-width="1.700"/><path d="M1.500 21.500L5.500 20.300 3.500 17.700Z" fill="#2fb344"/><path d="M22.500 5.500L18.500 6.700 20.500 9.300Z" fill="#2fb344"/><circle cx="12" cy="13" r="2.600" fill="#1b3f63"/></svg>
<svg class="i" style="left:37.70px;top:533.00px" width="24" height="24" viewBox="0 0 24 24"><path d="M10 4.500V20.500H1.500Z" fill="#fff" stroke="#1b3f63" stroke-width="1.400" stroke-linejoin="round"/><path d="M14.500 4.500V20.500H22.500Z" fill="#d3e7f7" stroke="#108bd1" stroke-width="1.400" stroke-linejoin="round"/><path d="M12.200 1.500V22.500" stroke="#f01616" stroke-width="1.600" stroke-dasharray="2.400 1.200"/><path d="M12.200 1.500V22.500" stroke="#f7a0a0" stroke-width="3" opacity=".45"/></svg>
<svg class="i" style="left:6.00px;top:568.90px" width="24" height="24" viewBox="0 0 24 24"><path d="M4 12L11.500 2.500 19.500 6.500 17.500 14 9 18.500Z" fill="#fff" stroke="#1b3f63" stroke-width="1.400" stroke-linejoin="round"/><path d="M4 12C4 15 5.500 17.500 9 18.500" fill="none" stroke="#1b3f63" stroke-width="1.3" stroke-linecap="round" stroke-linejoin="round" /><path d="M1.500 21.500L10 17" fill="none" stroke="#1b3f63" stroke-width="1.4" stroke-linecap="round" stroke-linejoin="round" /><circle cx="11.200" cy="10" r="3.600" fill="#f01616"/></svg>
<svg class="i" style="left:37.70px;top:568.90px" width="24" height="24" viewBox="0 0 24 24"><path d="M5 8.500L18 17.500" fill="none" stroke="#1b3f63" stroke-width="1.3" stroke-linecap="round" stroke-linejoin="round" /><path d="M7.500 4.500L4 10M18.500 13.500L15 19" fill="none" stroke="#1b3f63" stroke-width="1.3" stroke-linecap="round" stroke-linejoin="round" /><path d="M9 3L15 7" fill="none" stroke="#1b3f63" stroke-width="1.3" stroke-linecap="round" stroke-linejoin="round" /><text x="10" y="6.500" font-family="Liberation Sans,sans-serif" font-size="6" fill="#1b3f63" transform="rotate(35 11 5)">5</text><circle cx="19.500" cy="10" r="2.400" fill="#f01616"/><circle cx="13" cy="20" r="2.400" fill="#f01616"/></svg>
<svg class="i" style="left:6.00px;top:601.80px" width="24" height="24" viewBox="0 0 24 24"><path d="M3 20.500L8 3.500C15 4 20.500 9 21.500 15.500Z" fill="#f2f8fd" stroke="#1b3f63" stroke-width="1.800" stroke-linejoin="round"/><path d="M7 16.500L9.500 8.500C13.500 9.500 16 12 16.500 14.500Z" fill="#fff" stroke="#1b3f63" stroke-width="1.300" stroke-linejoin="round"/></svg>
<svg class="i" style="left:37.70px;top:601.80px" width="24" height="24" viewBox="0 0 24 24"><rect x="8.500" y="3" width="13.500" height="11" fill="#fff" stroke="#1b3f63" stroke-width="1.300"/><text x="10.300" y="11.800" font-family="Liberation Serif,serif" font-weight="bold" font-size="8.500" fill="#1b3f63">A1</text><path d="M8.500 9.500H4.500V20" fill="none" stroke="#1b3f63" stroke-width="1.3" stroke-linecap="round" stroke-linejoin="round" /><path d="M2.500 18L4.500 22 6.500 18Z" fill="#1b3f63"/></svg>
<svg class="i" style="left:6.00px;top:633.30px" width="24" height="24" viewBox="0 0 24 24"><circle cx="12" cy="12" r="7.800" fill="#fff" stroke="#1b3f63" stroke-width="1.400"/><path d="M1.500 12H22.500" stroke="#1b3f63" stroke-width="1.400"/><path d="M12 4.500V7M12 17V19.500" stroke="#1b3f63" stroke-width="1"/><text x="9.800" y="10.500" font-family="Liberation Sans,sans-serif" font-size="5" fill="#1b3f63">C</text><text x="8" y="18" font-family="Liberation Sans,sans-serif" font-size="5" fill="#1b3f63">A5</text></svg>
<svg class="i" style="left:37.70px;top:633.30px" width="24" height="24" viewBox="0 0 24 24"><path d="M8 21.500L12 3H15L20 21.500H16.500L15.500 17H11.500L10.500 21.500Z M12.300 14H14.800L13.500 8Z" fill="#108bd1" fill-rule="evenodd"/><path d="M5.500 21.500L9.500 3H12L8 21.500Z" fill="#9ed0f0"/></svg>
<svg class="i" style="left:6.00px;top:672.00px" width="24" height="24" viewBox="0 0 24 24"><path d="M12.200 1.500V22.500" stroke="#1b3f63" stroke-width="1.400"/><path d="M9.500 8.200C4.500 8.800 2 10.500 2 12.500 2 14.800 5.500 16.300 9.500 16.600" fill="none" stroke="#f01616" stroke-width="2.6" stroke-linecap="round" stroke-linejoin="round" /><path d="M8 13.600L12.300 16.800 8 20Z" fill="#f01616"/><path d="M14.800 16.600C19.500 16.200 22.300 14.600 22.300 12.500 22.300 10.500 19.500 8.800 14.800 8.200" fill="none" stroke="#f01616" stroke-width="2.6" stroke-linecap="round" stroke-linejoin="round" /><path d="M16.300 5L12 8.200 16.300 11.400Z" fill="#f01616"/></svg>
<svg class="i" style="left:37.70px;top:672.00px" width="24" height="24" viewBox="0 0 24 24"><path d="M8.500 21.500L5 15.500C4 13.500 6 12.500 7.500 14.500L9 16.500V8.500C9 6.500 11.500 6.500 11.500 8.500V12.500C11.500 11 14 11 14 12.700 14 11.500 16.500 11.500 16.500 13.300 16.500 12.200 19 12.300 19 14V18L17.500 21.500Z" fill="#d3e7f7" stroke="#1b3f63" stroke-width="1.200" stroke-linejoin="round"/><path d="M10.0 4.5L6.8 4.5" stroke="#f01616" stroke-width="1.9" fill="none"/><path d="M3.0 4.5L6.8 1.9L6.8 7.1Z" fill="#f01616"/><path d="M10.0 4.5L15.2 4.5" stroke="#f01616" stroke-width="1.9" fill="none"/><path d="M19.0 4.5L15.2 7.1L15.2 1.9Z" fill="#f01616"/><path d="M10.300 3.500V8" stroke="#f01616" stroke-width="1.900"/></svg>
<svg class="i" style="left:6.00px;top:703.50px" width="24" height="24" viewBox="0 0 24 24"><circle cx="14.500" cy="8.800" r="6.500" fill="#f4f9fd" stroke="#1b3f63" stroke-width="1.600"/><path d="M10 13.500L2.800 21" stroke="#1b3f63" stroke-width="2.400" stroke-linecap="round"/></svg>
<svg class="i" style="left:37.70px;top:703.50px" width="24" height="24" viewBox="0 0 24 24"><rect x="2" y="2" width="20" height="20" fill="#d3e7f7" stroke="#108bd1" stroke-width="1.300" stroke-dasharray="1.300 1.300"/><circle cx="14" cy="9.500" r="5.500" fill="#f4f9fd" stroke="#1b3f63" stroke-width="1.600"/><path d="M10 13.500L4 20" stroke="#1b3f63" stroke-width="2.400" stroke-linecap="round"/></svg>
<svg class="i" style="left:6.00px;top:737.50px" width="24" height="24" viewBox="0 0 24 24"><circle cx="12.500" cy="11.500" r="4.800" fill="#f4f9fd" stroke="#1b3f63" stroke-width="1.500"/><path d="M9 15L3 21.500" stroke="#1b3f63" stroke-width="2.200" stroke-linecap="round"/><path d="M8.5 7.5L5.3 4.3" stroke="#f01616" stroke-width="1.8" fill="none"/><path d="M2.5 1.5L7.2 2.5L3.5 6.2Z" fill="#f01616"/><path d="M16.5 7.5L19.7 4.3" stroke="#f01616" stroke-width="1.8" fill="none"/><path d="M22.5 1.5L21.5 6.2L17.8 2.5Z" fill="#f01616"/><path d="M17.0 16.0L19.7 18.7" stroke="#f01616" stroke-width="1.8" fill="none"/><path d="M22.5 21.5L17.8 20.5L21.5 16.8Z" fill="#f01616"/></svg>
<svg class="i" style="left:37.70px;top:737.50px" width="24" height="24" viewBox="0 0 24 24"><path d="M4 9.500V18.500H12" fill="none" stroke="#1b3f63" stroke-width="1.4" stroke-linecap="round" stroke-linejoin="round" /><path d="M4 9.500H7L8.500 7.500H12.500L14 9.500H19.500" fill="none" stroke="#1b3f63" stroke-width="1.4" stroke-linecap="round" stroke-linejoin="round" /><path d="M13.500 11.500H17.500A4 4 0 0 1 17.500 19.500H13" fill="none" stroke="#f01616" stroke-width="1.9" stroke-linecap="round" stroke-linejoin="round" /><path d="M14.500 16.800L10.800 19.500 14.500 22.200Z" fill="#f01616"/></svg>
<svg class="i" style="left:6.00px;top:773.80px" width="24" height="24" viewBox="0 0 24 24"><rect x="6.500" y="3.500" width="11" height="9.500" rx="1" fill="#fff" stroke="#1b3f63" stroke-width="1.400"/><path d="M8.500 3.500V2H11.500V3.500" fill="none" stroke="#1b3f63" stroke-width="1.1" stroke-linecap="round" stroke-linejoin="round" /><circle cx="12" cy="8.300" r="3" fill="#f01616"/><path d="M12 13V16M12 16L7 22.500M12 16L17 22.500M12 16V22.500M8 19.500H16" fill="none" stroke="#1b3f63" stroke-width="1.3" stroke-linecap="round" stroke-linejoin="round" /></svg>
<svg class="i" style="left:37.70px;top:773.80px" width="24" height="24" viewBox="0 0 24 24"><circle cx="12" cy="3.800" r="2.100" fill="#8a8a8a"/><path d="M10 7.500L13.500 7 14.500 13 17.500 21.500H15.500L12.500 15 10 21.500H7.500L10.500 13Z" fill="#8a8a8a"/><path d="M17.500 9V22" stroke="#8a8a8a" stroke-width="0.900"/><path d="M13.500 9L17.500 11.500" stroke="#8a8a8a" stroke-width="1.300"/></svg>
<svg class="i" style="left:6.00px;top:806.70px" width="24" height="24" viewBox="0 0 24 24"><path d="M1.500 12C5 6.500 19 6.500 22.500 12 19 17.500 5 17.500 1.500 12Z" fill="#fff" stroke="#1b3f63" stroke-width="1.500"/><circle cx="12" cy="12.300" r="4.300" fill="#108bd1"/><circle cx="12" cy="12.300" r="1.900" fill="#1b3f63"/><path d="M1.500 9C5 4 19 4 22.500 9" fill="none" stroke="#1b3f63" stroke-width="2.4" stroke-linecap="round" stroke-linejoin="round" /></svg>
<svg class="i" style="left:37.70px;top:806.70px" width="24" height="24" viewBox="0 0 24 24"><path d="M2.500 12.500L16 4V21Z" fill="#fafafa" stroke="#8a8a8a" stroke-width="1.300" stroke-linejoin="round"/><path d="M16 3V22" stroke="#8a8a8a" stroke-width="1.100"/><path d="M19 5C21.500 9 21.500 16 19 20" fill="none" stroke="#8a8a8a" stroke-width="1.1" stroke-linecap="round" stroke-linejoin="round"  stroke-dasharray="2 1.500"/></svg>
<svg class="i" style="left:6.00px;top:844.00px" width="24" height="24" viewBox="0 0 24 24"><path d="M11 1.800L3 6.300v11.400l8 4.500" fill="none" stroke="#17609d" stroke-width="2.0" stroke-linecap="round" stroke-linejoin="round" /><path d="M11 1.800l8 4.500v5" fill="none" stroke="#17609d" stroke-width="2.0" stroke-linecap="round" stroke-linejoin="round" /><path d="M11 5.500L6.300 8.200v7.600l4.700 2.700" fill="none" stroke="#17609d" stroke-width="1.9" stroke-linecap="round" stroke-linejoin="round" /><path d="M11 5.500l4.700 2.700v3" fill="none" stroke="#17609d" stroke-width="1.9" stroke-linecap="round" stroke-linejoin="round" /><path d="M11 9.200l-2.500 1.400v2.800l2.500 1.400 2.500-1.400v-2.800zM11 12v2.800M8.500 10.600L11 12l2.500-1.400" fill="none" stroke="#17609d" stroke-width="1.1" stroke-linecap="round" stroke-linejoin="round" /><path d="M15 13.500h4.500v4.500h2.500l-4.700 5-4.800-5H15Z" fill="#fff" stroke="#17609d" stroke-width="1.400" stroke-linejoin="round"/></svg>
<svg class="i" style="left:37.70px;top:844.00px" width="24" height="24" viewBox="0 0 24 24"><path d="M2 3.500L12 8.500 22 3.500V7L12 12 2 7Z" fill="#17609d"/><path d="M2 20.500L12 15.500 22 20.500V17L12 12 2 17Z" fill="#17609d"/><path d="M3 8.800L12 13.200 21 8.800M3 15.200L12 10.800 21 15.200" stroke="#f3f3f8" stroke-width="1.200" fill="none"/><path d="M19.500 2.500l2.500-1.300" fill="none" stroke="#17609d" stroke-width="1.4" stroke-linecap="round" stroke-linejoin="round" /></svg>
<svg class="i" style="left:6.00px;top:875.50px" width="24" height="24" viewBox="0 0 24 24"><path d="M10 1.500L18.500 5.500 10 9.500 1.500 5.500Z" fill="#17609d" stroke="#17609d" stroke-width="1.500" stroke-linejoin="round"/><path d="M10 3.600l4 1.900L10 7.400 6 5.500Z" fill="#f3f3f8"/><path d="M1.500 9.500L10 13.500 18.500 9.500" fill="none" stroke="#17609d" stroke-width="2.3" stroke-linecap="round" stroke-linejoin="round" /><path d="M1.500 13.200L10 17.200 13.500 15.500" fill="none" stroke="#17609d" stroke-width="2.3" stroke-linecap="round" stroke-linejoin="round" /><path d="M1.500 17L10 21 12.500 19.800" fill="none" stroke="#17609d" stroke-width="2.3" stroke-linecap="round" stroke-linejoin="round" /><path d="M13.500 16h5v-2.800l5 4.800-5 4.800V20h-5Z" fill="#fff" stroke="#17609d" stroke-width="1.400" stroke-linejoin="round"/></svg>
<svg class="i" style="left:37.70px;top:875.50px" width="24" height="24" viewBox="0 0 24 24"><path d="M2 3.500L12 8.500 22 3.500V7L12 12 2 7Z" fill="#17609d"/><path d="M2 20.500L12 15.500 22 20.500V17L12 12 2 17Z" fill="#17609d"/><path d="M3 8.800L12 13.200 21 8.800M3 15.200L12 10.800 21 15.200" stroke="#f3f3f8" stroke-width="1.200" fill="none"/><path d="M19.500 2.500l2.500-1.300" fill="none" stroke="#17609d" stroke-width="1.4" stroke-linecap="round" stroke-linejoin="round" /><circle cx="18" cy="18.500" r="4.800" fill="#f3f3f8" stroke="#17609d" stroke-width="1.700" stroke-dasharray="2.100 1.650"/><circle cx="18" cy="18.500" r="3.500" fill="#f3f3f8" stroke="#17609d" stroke-width="1.200"/><circle cx="18" cy="18.500" r="1.300" fill="none" stroke="#17609d" stroke-width="1.100"/></svg>
<div class="b" style="left:8px;top:263.05px;width:52px;height:1.5px;background:#8a8a92"></div>
<div class="b" style="left:8px;top:428.95px;width:52px;height:1.5px;background:#8a8a92"></div>
<div class="b" style="left:8px;top:563.25px;width:52px;height:1.5px;background:#8a8a92"></div>
<div class="b" style="left:8px;top:665.25px;width:52px;height:1.5px;background:#8a8a92"></div>
<div class="b" style="left:8px;top:767.25px;width:52px;height:1.5px;background:#8a8a92"></div>
<div class="b" style="left:8px;top:836.85px;width:52px;height:1.5px;background:#8a8a92"></div>
<div class="b" style="left:69px;top:153px;width:1419px;height:32px;background:#f1f1f6;border-right:1px solid #d6d6dc;border-radius:0 4px 0 0"></div>
<div class="b" style="left:69px;top:153px;width:1.5px;height:32.5px;background:#111"></div>
<svg class="i" style="left:91px;top:159px" width="22" height="22" viewBox="0 0 22 22"><circle cx="12.5" cy="8" r="4.6" fill="none" stroke="#111" stroke-width="1.7"/><path d="M9.3 11.3L3 17.7" stroke="#111" stroke-width="2" stroke-linecap="round"/></svg>
<div class="b" style="left:70.5px;top:183.5px;width:1417px;height:1.5px;background:linear-gradient(#e2e2e7,#fafafc)"></div>
<div class="b" style="left:133px;top:160px;width:61.5px;height:24px;background:linear-gradient(#e9e9ee,#e3e3e9);border:1px solid #a9a9b0;border-bottom:none;border-radius:4px 4px 0 0"></div>
<div class="t " style="left:144.50px;top:163.49px;font-size:11px;letter-spacing:0.578px;color:#4a4a50;">Topo 1</div>
<div class="b" style="left:193.5px;top:160px;width:61.0px;height:24px;background:linear-gradient(#e9e9ee,#e3e3e9);border:1px solid #a9a9b0;border-bottom:none;border-radius:4px 4px 0 0"></div>
<div class="t " style="left:205.00px;top:163.49px;font-size:11px;letter-spacing:0.578px;color:#4a4a50;">Topo 2</div>
<div class="b" style="left:253.5px;top:160px;width:58.0px;height:24px;background:linear-gradient(#e9e9ee,#e3e3e9);border:1px solid #a9a9b0;border-bottom:none;border-radius:4px 4px 0 0"></div>
<div class="t " style="left:264.50px;top:163.49px;font-size:11px;letter-spacing:0.284px;color:#4a4a50;">Frente</div>
<div class="b" style="left:310.5px;top:158px;width:41.5px;height:26.5px;background:#fff;border:1px solid #b4b4ba;border-bottom:none;border-radius:4px 4px 0 0"></div>
<div class="t " style="left:322.00px;top:162.49px;font-size:11px;letter-spacing:-0.483px;color:#444;">ISO</div>
<div class="b" style="left:69px;top:185px;width:1419px;height:787px;background:#fff;overflow:hidden"><svg class="i" style="left:0;top:0" width="1419" height="787" viewBox="69 185 1419 787"><defs><linearGradient id="lg" x1="0" x2="1" y1="0" y2="0"><stop offset="0" stop-color="#2a2a2a"/><stop offset="0.3" stop-color="#777"/><stop offset="0.42" stop-color="#c4c4c4"/><stop offset="0.55" stop-color="#6a6a6a"/><stop offset="0.7" stop-color="#9a9a9a"/><stop offset="0.85" stop-color="#3a3a3a"/><stop offset="1" stop-color="#111"/></linearGradient><linearGradient id="cg" x1="0" x2="1" y1="0" y2="0"><stop offset="0" stop-color="#0d0d0d"/><stop offset="0.45" stop-color="#2c2c2c"/><stop offset="1" stop-color="#090909"/></linearGradient></defs><line x1="907.5" y1="853.8" x2="2618.8" y2="-134.2" stroke="#c8211f" stroke-width="1.05" /><line x1="907.5" y1="853.8" x2="-803.8" y2="1841.8" stroke="#c8211f" stroke-width="1.05" stroke-dasharray="1.2 3"/><line x1="907.5" y1="853.8" x2="864.7" y2="829.1" stroke="#22ad2c" stroke-width="1.05" /><line x1="655.1" y1="708.1" x2="-803.8" y2="-134.2" stroke="#22ad2c" stroke-width="1.05" /><line x1="907.5" y1="853.8" x2="2618.8" y2="1841.8" stroke="#22ad2c" stroke-width="1.05" stroke-dasharray="1.2 3"/><line x1="907.5" y1="853.8" x2="907.5" y2="1253.8" stroke="#1414a8" stroke-width="1.05" stroke-dasharray="1.2 3"/><rect x="819.4" y="570" width="5.1" height="37.8" fill="url(#lg)" stroke="#000" stroke-width="1.2"/><ellipse cx="821.9" cy="607.7" rx="3.900" ry="2.600" fill="#0a0a0a"/><rect x="781.1" y="592.1" width="5.1" height="37.8" fill="url(#lg)" stroke="#000" stroke-width="1.2"/><ellipse cx="783.6" cy="629.8" rx="3.900" ry="2.600" fill="#0a0a0a"/><rect x="857.7" y="592.1" width="5.1" height="37.8" fill="url(#lg)" stroke="#000" stroke-width="1.2"/><ellipse cx="860.2" cy="629.8" rx="3.900" ry="2.600" fill="#0a0a0a"/><rect x="776.4" y="594.8" width="5.1" height="37.8" fill="url(#lg)" stroke="#000" stroke-width="1.2"/><ellipse cx="778.9" cy="632.5" rx="3.900" ry="2.600" fill="#0a0a0a"/><rect x="862.4" y="594.8" width="5.1" height="37.8" fill="url(#lg)" stroke="#000" stroke-width="1.2"/><ellipse cx="864.9" cy="632.5" rx="3.900" ry="2.600" fill="#0a0a0a"/><rect x="821.7" y="615.6" width="5.1" height="37.8" fill="url(#lg)" stroke="#000" stroke-width="1.2"/><ellipse cx="824.3" cy="653.2" rx="3.900" ry="2.600" fill="#0a0a0a"/><rect x="738.1" y="616.9" width="5.1" height="37.8" fill="url(#lg)" stroke="#000" stroke-width="1.2"/><ellipse cx="740.7" cy="654.6" rx="3.900" ry="2.600" fill="#0a0a0a"/><rect x="817" y="618.3" width="5.1" height="37.8" fill="url(#lg)" stroke="#000" stroke-width="1.2"/><ellipse cx="819.6" cy="656" rx="3.900" ry="2.600" fill="#0a0a0a"/><rect x="733.8" y="616.2" width="5.1" height="41" fill="url(#lg)" stroke="#000" stroke-width="1.2"/><ellipse cx="736.4" cy="657.1" rx="3.900" ry="2.600" fill="#0a0a0a"/><rect x="776.4" y="639" width="5.1" height="37.8" fill="url(#lg)" stroke="#000" stroke-width="1.2"/><ellipse cx="778.9" cy="676.7" rx="3.900" ry="2.600" fill="#0a0a0a"/><rect x="772.1" y="638.3" width="5.1" height="41" fill="url(#lg)" stroke="#000" stroke-width="1.2"/><ellipse cx="774.7" cy="679.2" rx="3.900" ry="2.600" fill="#0a0a0a"/><rect x="943.5" y="641.6" width="5.1" height="37.8" fill="url(#lg)" stroke="#000" stroke-width="1.2"/><ellipse cx="946" cy="679.3" rx="3.900" ry="2.600" fill="#0a0a0a"/><rect x="781.1" y="641.8" width="5.1" height="37.8" fill="url(#lg)" stroke="#000" stroke-width="1.2"/><ellipse cx="783.6" cy="679.4" rx="3.900" ry="2.600" fill="#0a0a0a"/><rect x="776.8" y="641" width="5.1" height="41" fill="url(#lg)" stroke="#000" stroke-width="1.2"/><ellipse cx="779.4" cy="681.9" rx="3.900" ry="2.600" fill="#0a0a0a"/><rect x="905.2" y="663.7" width="5.1" height="37.8" fill="url(#lg)" stroke="#000" stroke-width="1.2"/><ellipse cx="907.7" cy="701.4" rx="3.900" ry="2.600" fill="#0a0a0a"/><rect x="986" y="677.8" width="5.1" height="26.2" fill="url(#lg)" stroke="#000" stroke-width="1.2"/><ellipse cx="988.6" cy="703.9" rx="3.900" ry="2.600" fill="#0a0a0a"/><rect x="652.8" y="663" width="5.1" height="41" fill="url(#lg)" stroke="#000" stroke-width="1.2"/><ellipse cx="655.3" cy="703.9" rx="3.900" ry="2.600" fill="#0a0a0a"/><rect x="815.1" y="663.1" width="5.1" height="41" fill="url(#lg)" stroke="#000" stroke-width="1.2"/><ellipse cx="817.7" cy="704" rx="3.900" ry="2.600" fill="#0a0a0a"/><rect x="900.5" y="666.5" width="5.1" height="37.8" fill="url(#lg)" stroke="#000" stroke-width="1.2"/><ellipse cx="903" cy="704.1" rx="3.900" ry="2.600" fill="#0a0a0a"/><rect x="819.4" y="680.4" width="5.1" height="26.2" fill="url(#lg)" stroke="#000" stroke-width="1.2"/><ellipse cx="821.9" cy="706.5" rx="3.900" ry="2.600" fill="#0a0a0a"/><rect x="990.7" y="680.5" width="5.1" height="26.2" fill="url(#lg)" stroke="#000" stroke-width="1.2"/><ellipse cx="993.3" cy="706.6" rx="3.900" ry="2.600" fill="#0a0a0a"/><rect x="648" y="665.7" width="5.1" height="41" fill="url(#lg)" stroke="#000" stroke-width="1.2"/><ellipse cx="650.6" cy="706.6" rx="3.900" ry="2.600" fill="#0a0a0a"/><rect x="862.2" y="688.6" width="5.1" height="37.8" fill="url(#lg)" stroke="#000" stroke-width="1.2"/><ellipse cx="864.7" cy="726.2" rx="3.900" ry="2.600" fill="#0a0a0a"/><rect x="950.1" y="701.3" width="5.1" height="26.2" fill="url(#lg)" stroke="#000" stroke-width="1.2"/><ellipse cx="952.6" cy="727.3" rx="3.900" ry="2.600" fill="#0a0a0a"/><rect x="693.4" y="686.5" width="5.1" height="41" fill="url(#lg)" stroke="#000" stroke-width="1.2"/><ellipse cx="695.9" cy="727.3" rx="3.900" ry="2.600" fill="#0a0a0a"/><rect x="781.1" y="702.5" width="5.1" height="26.2" fill="url(#lg)" stroke="#000" stroke-width="1.2"/><ellipse cx="783.6" cy="728.6" rx="3.900" ry="2.600" fill="#0a0a0a"/><rect x="945.4" y="704" width="5.1" height="26.2" fill="url(#lg)" stroke="#000" stroke-width="1.2"/><ellipse cx="947.9" cy="730.1" rx="3.900" ry="2.600" fill="#0a0a0a"/><rect x="688.7" y="689.2" width="5.1" height="41" fill="url(#lg)" stroke="#000" stroke-width="1.2"/><ellipse cx="691.2" cy="730.1" rx="3.900" ry="2.600" fill="#0a0a0a"/><rect x="776.4" y="705.2" width="5.1" height="26.2" fill="url(#lg)" stroke="#000" stroke-width="1.2"/><ellipse cx="778.9" cy="731.3" rx="3.900" ry="2.600" fill="#0a0a0a"/><rect x="734" y="709.9" width="5.1" height="41" fill="url(#lg)" stroke="#000" stroke-width="1.2"/><ellipse cx="736.6" cy="750.8" rx="3.900" ry="2.600" fill="#0a0a0a"/><rect x="907.3" y="726" width="5.1" height="26.2" fill="url(#lg)" stroke="#000" stroke-width="1.2"/><ellipse cx="909.9" cy="752" rx="3.900" ry="2.600" fill="#0a0a0a"/><rect x="738.3" y="727.2" width="5.1" height="26.2" fill="url(#lg)" stroke="#000" stroke-width="1.2"/><ellipse cx="740.9" cy="753.3" rx="3.900" ry="2.600" fill="#0a0a0a"/><rect x="1071.8" y="727.3" width="5.1" height="26.2" fill="url(#lg)" stroke="#000" stroke-width="1.2"/><ellipse cx="1074.3" cy="753.4" rx="3.900" ry="2.600" fill="#0a0a0a"/><rect x="567" y="712.5" width="5.1" height="41" fill="url(#lg)" stroke="#000" stroke-width="1.2"/><ellipse cx="569.5" cy="753.4" rx="3.900" ry="2.600" fill="#0a0a0a"/><rect x="729.3" y="712.6" width="5.1" height="41" fill="url(#lg)" stroke="#000" stroke-width="1.2"/><ellipse cx="731.9" cy="753.5" rx="3.900" ry="2.600" fill="#0a0a0a"/><rect x="902.6" y="728.7" width="5.1" height="26.2" fill="url(#lg)" stroke="#000" stroke-width="1.2"/><ellipse cx="905.1" cy="754.8" rx="3.900" ry="2.600" fill="#0a0a0a"/><rect x="562.7" y="718.2" width="5.1" height="37.8" fill="url(#lg)" stroke="#000" stroke-width="1.2"/><ellipse cx="565.2" cy="755.9" rx="3.900" ry="2.600" fill="#0a0a0a"/><rect x="733.6" y="729.9" width="5.1" height="26.2" fill="url(#lg)" stroke="#000" stroke-width="1.2"/><ellipse cx="736.2" cy="756" rx="3.900" ry="2.600" fill="#0a0a0a"/><rect x="1033.5" y="749.4" width="5.1" height="26.2" fill="url(#lg)" stroke="#000" stroke-width="1.2"/><ellipse cx="1036.1" cy="775.5" rx="3.900" ry="2.600" fill="#0a0a0a"/><rect x="605.3" y="734.6" width="5.1" height="41" fill="url(#lg)" stroke="#000" stroke-width="1.2"/><ellipse cx="607.8" cy="775.5" rx="3.900" ry="2.600" fill="#0a0a0a"/><rect x="864.5" y="750.7" width="5.1" height="26.2" fill="url(#lg)" stroke="#000" stroke-width="1.2"/><ellipse cx="867.1" cy="776.7" rx="3.900" ry="2.600" fill="#0a0a0a"/><rect x="524.4" y="740.3" width="5.1" height="37.8" fill="url(#lg)" stroke="#000" stroke-width="1.2"/><ellipse cx="527" cy="778" rx="3.900" ry="2.600" fill="#0a0a0a"/><rect x="695.5" y="751.9" width="5.1" height="26.2" fill="url(#lg)" stroke="#000" stroke-width="1.2"/><ellipse cx="698.1" cy="778" rx="3.900" ry="2.600" fill="#0a0a0a"/><rect x="601" y="740.3" width="5.1" height="37.8" fill="url(#lg)" stroke="#000" stroke-width="1.2"/><ellipse cx="603.5" cy="778" rx="3.900" ry="2.600" fill="#0a0a0a"/><rect x="610" y="737.3" width="5.1" height="41" fill="url(#lg)" stroke="#000" stroke-width="1.2"/><ellipse cx="612.5" cy="778.2" rx="3.900" ry="2.600" fill="#0a0a0a"/><rect x="1028.8" y="752.2" width="5.1" height="26.2" fill="url(#lg)" stroke="#000" stroke-width="1.2"/><ellipse cx="1031.4" cy="778.2" rx="3.900" ry="2.600" fill="#0a0a0a"/><rect x="859.8" y="753.4" width="5.1" height="26.2" fill="url(#lg)" stroke="#000" stroke-width="1.2"/><ellipse cx="862.4" cy="779.5" rx="3.900" ry="2.600" fill="#0a0a0a"/><rect x="605.7" y="743" width="5.1" height="37.8" fill="url(#lg)" stroke="#000" stroke-width="1.2"/><ellipse cx="608.2" cy="780.7" rx="3.900" ry="2.600" fill="#0a0a0a"/><rect x="690.8" y="754.6" width="5.1" height="26.2" fill="url(#lg)" stroke="#000" stroke-width="1.2"/><ellipse cx="693.4" cy="780.7" rx="3.900" ry="2.600" fill="#0a0a0a"/><rect x="519.7" y="743" width="5.1" height="37.8" fill="url(#lg)" stroke="#000" stroke-width="1.2"/><ellipse cx="522.3" cy="780.7" rx="3.900" ry="2.600" fill="#0a0a0a"/><rect x="990.7" y="774.1" width="5.1" height="26.2" fill="url(#lg)" stroke="#000" stroke-width="1.2"/><ellipse cx="993.3" cy="800.2" rx="3.900" ry="2.600" fill="#0a0a0a"/><rect x="648.3" y="759.4" width="5.1" height="41" fill="url(#lg)" stroke="#000" stroke-width="1.2"/><ellipse cx="650.8" cy="800.3" rx="3.900" ry="2.600" fill="#0a0a0a"/><rect x="821.7" y="775.4" width="5.1" height="26.2" fill="url(#lg)" stroke="#000" stroke-width="1.2"/><ellipse cx="824.3" cy="801.4" rx="3.900" ry="2.600" fill="#0a0a0a"/><rect x="565" y="763.8" width="5.1" height="37.8" fill="url(#lg)" stroke="#000" stroke-width="1.2"/><ellipse cx="567.6" cy="801.4" rx="3.900" ry="2.600" fill="#0a0a0a"/><rect x="481.4" y="765.1" width="5.1" height="37.8" fill="url(#lg)" stroke="#000" stroke-width="1.2"/><ellipse cx="484" cy="802.8" rx="3.900" ry="2.600" fill="#0a0a0a"/><rect x="652.5" y="776.7" width="5.1" height="26.2" fill="url(#lg)" stroke="#000" stroke-width="1.2"/><ellipse cx="655.1" cy="802.8" rx="3.900" ry="2.600" fill="#0a0a0a"/><rect x="986" y="776.9" width="5.1" height="26.2" fill="url(#lg)" stroke="#000" stroke-width="1.2"/><ellipse cx="988.6" cy="802.9" rx="3.900" ry="2.600" fill="#0a0a0a"/><rect x="817" y="778.1" width="5.1" height="26.2" fill="url(#lg)" stroke="#000" stroke-width="1.2"/><ellipse cx="819.6" cy="804.2" rx="3.900" ry="2.600" fill="#0a0a0a"/><rect x="560.3" y="766.5" width="5.1" height="37.8" fill="url(#lg)" stroke="#000" stroke-width="1.2"/><ellipse cx="562.9" cy="804.2" rx="3.900" ry="2.600" fill="#0a0a0a"/><rect x="947.9" y="798.8" width="5.1" height="26.2" fill="url(#lg)" stroke="#000" stroke-width="1.2"/><ellipse cx="950.5" cy="824.9" rx="3.900" ry="2.600" fill="#0a0a0a"/><rect x="519.7" y="787.2" width="5.1" height="37.8" fill="url(#lg)" stroke="#000" stroke-width="1.2"/><ellipse cx="522.3" cy="824.9" rx="3.900" ry="2.600" fill="#0a0a0a"/><rect x="779" y="800.1" width="5.1" height="26.2" fill="url(#lg)" stroke="#000" stroke-width="1.2"/><ellipse cx="781.5" cy="826.1" rx="3.900" ry="2.600" fill="#0a0a0a"/><rect x="686.8" y="789.8" width="5.1" height="37.8" fill="url(#lg)" stroke="#000" stroke-width="1.2"/><ellipse cx="689.3" cy="827.5" rx="3.900" ry="2.600" fill="#0a0a0a"/><rect x="524.4" y="790" width="5.1" height="37.8" fill="url(#lg)" stroke="#000" stroke-width="1.2"/><ellipse cx="527" cy="827.6" rx="3.900" ry="2.600" fill="#0a0a0a"/><rect x="943.2" y="801.6" width="5.1" height="26.2" fill="url(#lg)" stroke="#000" stroke-width="1.2"/><ellipse cx="945.8" cy="827.6" rx="3.900" ry="2.600" fill="#0a0a0a"/><rect x="774.3" y="802.8" width="5.1" height="26.2" fill="url(#lg)" stroke="#000" stroke-width="1.2"/><ellipse cx="776.8" cy="828.9" rx="3.900" ry="2.600" fill="#0a0a0a"/><rect x="905.2" y="823.5" width="5.1" height="26.2" fill="url(#lg)" stroke="#000" stroke-width="1.2"/><ellipse cx="907.7" cy="849.6" rx="3.900" ry="2.600" fill="#0a0a0a"/><rect x="648.5" y="811.9" width="5.1" height="37.8" fill="url(#lg)" stroke="#000" stroke-width="1.2"/><ellipse cx="651" cy="849.6" rx="3.900" ry="2.600" fill="#0a0a0a"/><rect x="736.2" y="824.8" width="5.1" height="26.2" fill="url(#lg)" stroke="#000" stroke-width="1.2"/><ellipse cx="738.7" cy="850.8" rx="3.900" ry="2.600" fill="#0a0a0a"/><rect x="900.5" y="826.3" width="5.1" height="26.2" fill="url(#lg)" stroke="#000" stroke-width="1.2"/><ellipse cx="903" cy="852.3" rx="3.900" ry="2.600" fill="#0a0a0a"/><rect x="643.8" y="814.7" width="5.1" height="37.8" fill="url(#lg)" stroke="#000" stroke-width="1.2"/><ellipse cx="646.3" cy="852.3" rx="3.900" ry="2.600" fill="#0a0a0a"/><rect x="731.5" y="827.5" width="5.1" height="26.2" fill="url(#lg)" stroke="#000" stroke-width="1.2"/><ellipse cx="734" cy="853.6" rx="3.900" ry="2.600" fill="#0a0a0a"/><rect x="862.4" y="848.2" width="5.1" height="26.2" fill="url(#lg)" stroke="#000" stroke-width="1.2"/><ellipse cx="864.9" cy="874.3" rx="3.900" ry="2.600" fill="#0a0a0a"/><rect x="605.5" y="836.8" width="5.1" height="37.8" fill="url(#lg)" stroke="#000" stroke-width="1.2"/><ellipse cx="608" cy="874.4" rx="3.900" ry="2.600" fill="#0a0a0a"/><rect x="693.4" y="849.5" width="5.1" height="26.2" fill="url(#lg)" stroke="#000" stroke-width="1.2"/><ellipse cx="695.9" cy="875.5" rx="3.900" ry="2.600" fill="#0a0a0a"/><rect x="857.7" y="851" width="5.1" height="26.2" fill="url(#lg)" stroke="#000" stroke-width="1.2"/><ellipse cx="860.2" cy="877" rx="3.900" ry="2.600" fill="#0a0a0a"/><rect x="688.7" y="852.2" width="5.1" height="26.2" fill="url(#lg)" stroke="#000" stroke-width="1.2"/><ellipse cx="691.2" cy="878.3" rx="3.900" ry="2.600" fill="#0a0a0a"/><rect x="648" y="872.9" width="5.1" height="26.2" fill="url(#lg)" stroke="#000" stroke-width="1.2"/><ellipse cx="650.6" cy="899" rx="3.900" ry="2.600" fill="#0a0a0a"/><rect x="819.6" y="872.9" width="5.1" height="26.2" fill="url(#lg)" stroke="#000" stroke-width="1.2"/><ellipse cx="822.2" cy="899" rx="3.900" ry="2.600" fill="#0a0a0a"/><rect x="652.8" y="875.7" width="5.1" height="26.2" fill="url(#lg)" stroke="#000" stroke-width="1.2"/><ellipse cx="655.3" cy="901.7" rx="3.900" ry="2.600" fill="#0a0a0a"/><rect x="814.9" y="875.7" width="5.1" height="26.2" fill="url(#lg)" stroke="#000" stroke-width="1.2"/><ellipse cx="817.4" cy="901.7" rx="3.900" ry="2.600" fill="#0a0a0a"/><rect x="776.8" y="897.6" width="5.1" height="26.2" fill="url(#lg)" stroke="#000" stroke-width="1.2"/><ellipse cx="779.4" cy="923.7" rx="3.900" ry="2.600" fill="#0a0a0a"/><rect x="772.1" y="900.4" width="5.1" height="26.2" fill="url(#lg)" stroke="#000" stroke-width="1.2"/><ellipse cx="774.7" cy="926.4" rx="3.900" ry="2.600" fill="#0a0a0a"/><rect x="733.8" y="922.5" width="5.1" height="26.2" fill="url(#lg)" stroke="#000" stroke-width="1.2"/><ellipse cx="736.4" cy="948.5" rx="3.900" ry="2.600" fill="#0a0a0a"/><polygon points="565.2,705.6 650.8,755 650.8,761.9 565.2,712.5" fill="#0b0b0b" stroke="#000" stroke-width="1" stroke-linejoin="round" /><polygon points="650.8,755 821.9,656.2 821.9,663.1 650.8,761.9" fill="#0b0b0b" stroke="#000" stroke-width="1" stroke-linejoin="round" /><polygon points="650.8,755 821.9,656.2 736.4,606.8 565.2,705.6" fill="#2a2a2a" stroke="#000" stroke-width="1.5" stroke-linejoin="round" /><line x1="736.4" y1="705.6" x2="650.8" y2="656.2" stroke="#000" stroke-width="1.6" /><line x1="608" y1="730.3" x2="779.2" y2="631.5" stroke="#000" stroke-width="1.6" /><polygon points="697.9,797 869,698.2 821.9,671 650.8,769.8" fill="#2a2a2a" stroke="#000" stroke-width="1.5" stroke-linejoin="round" /><line x1="740.7" y1="772.3" x2="693.6" y2="745.1" stroke="#000" stroke-width="1.6" /><line x1="783.4" y1="747.6" x2="736.4" y2="720.4" stroke="#000" stroke-width="1.6" /><line x1="826.2" y1="722.9" x2="779.2" y2="695.7" stroke="#000" stroke-width="1.6" /><polygon points="479.7,759.9 608,834 608,839.2 479.7,765.1" fill="#0b0b0b" stroke="#000" stroke-width="1" stroke-linejoin="round" /><polygon points="608,834 693.6,784.6 693.6,789.8 608,839.2" fill="#0b0b0b" stroke="#000" stroke-width="1" stroke-linejoin="round" /><polygon points="608,834 693.6,784.6 565.2,710.5 479.7,759.9" fill="#2a2a2a" stroke="#000" stroke-width="1.5" stroke-linejoin="round" /><line x1="650.8" y1="809.3" x2="522.5" y2="735.2" stroke="#000" stroke-width="1.6" /><line x1="522.5" y1="784.6" x2="608" y2="735.2" stroke="#000" stroke-width="1.6" /><polygon points="736.4,611.7 864.7,685.8 864.7,691 736.4,616.9" fill="#0b0b0b" stroke="#000" stroke-width="1" stroke-linejoin="round" /><polygon points="864.7,685.8 950.3,636.4 950.3,641.6 864.7,691" fill="#0b0b0b" stroke="#000" stroke-width="1" stroke-linejoin="round" /><polygon points="864.7,685.8 950.3,636.4 821.9,562.3 736.4,611.7" fill="#2a2a2a" stroke="#000" stroke-width="1.5" stroke-linejoin="round" /><line x1="907.5" y1="661.1" x2="779.2" y2="587" stroke="#000" stroke-width="1.6" /><line x1="779.2" y1="636.4" x2="864.7" y2="587" stroke="#000" stroke-width="1.6" /><polygon points="608,843.9 736.4,918 736.4,924.9 608,850.8" fill="#0b0b0b" stroke="#000" stroke-width="1" stroke-linejoin="round" /><polygon points="736.4,918 1078.6,720.4 1078.6,727.3 736.4,924.9" fill="#0b0b0b" stroke="#000" stroke-width="1" stroke-linejoin="round" /><polygon points="736.4,918 1078.6,720.4 950.3,646.3 608,843.9" fill="#2a2a2a" stroke="none" stroke-width="0" stroke-linejoin="round" /><polyline points="693.6,794.5 608,843.9 736.4,918 1078.6,720.4 950.3,646.3 864.7,695.7" fill="none" stroke="#000" stroke-width="1.5" stroke-linejoin="round"/><line x1="779.2" y1="893.3" x2="650.8" y2="819.2" stroke="#000" stroke-width="1.6" /><line x1="821.9" y1="868.6" x2="693.6" y2="794.5" stroke="#000" stroke-width="1.6" /><line x1="864.7" y1="843.9" x2="736.4" y2="769.8" stroke="#000" stroke-width="1.6" /><line x1="907.5" y1="819.2" x2="779.2" y2="745.1" stroke="#000" stroke-width="1.6" /><line x1="950.3" y1="794.5" x2="821.9" y2="720.4" stroke="#000" stroke-width="1.6" /><line x1="993.1" y1="769.8" x2="864.7" y2="695.7" stroke="#000" stroke-width="1.6" /><line x1="1035.8" y1="745.1" x2="907.5" y2="671" stroke="#000" stroke-width="1.6" /><line x1="650.8" y1="868.6" x2="993.1" y2="671" stroke="#000" stroke-width="1.6" /><line x1="492.9" y1="613" x2="507.2" y2="590.4" stroke="#000" stroke-width="3.5" stroke-linecap="round"/><line x1="492.9" y1="613" x2="507.2" y2="590.4" stroke="#d2d2d2" stroke-width="1.5" stroke-linecap="round"/><line x1="505.4" y1="620.1" x2="507.2" y2="604.7" stroke="#000" stroke-width="3.5" stroke-linecap="round"/><line x1="505.4" y1="620.1" x2="507.2" y2="604.7" stroke="#d2d2d2" stroke-width="1.5" stroke-linecap="round"/><line x1="507.2" y1="590.4" x2="521.5" y2="596.5" stroke="#000" stroke-width="3.5" stroke-linecap="round"/><line x1="507.2" y1="590.4" x2="521.5" y2="596.5" stroke="#d2d2d2" stroke-width="1.5" stroke-linecap="round"/><line x1="507.2" y1="604.7" x2="533.9" y2="603.7" stroke="#000" stroke-width="3.5" stroke-linecap="round"/><line x1="507.2" y1="604.7" x2="533.9" y2="603.7" stroke="#d2d2d2" stroke-width="1.5" stroke-linecap="round"/><line x1="521.5" y1="596.5" x2="535.7" y2="573.9" stroke="#000" stroke-width="3.5" stroke-linecap="round"/><line x1="521.5" y1="596.5" x2="535.7" y2="573.9" stroke="#d2d2d2" stroke-width="1.5" stroke-linecap="round"/><line x1="533.9" y1="603.7" x2="535.7" y2="588.3" stroke="#000" stroke-width="3.5" stroke-linecap="round"/><line x1="533.9" y1="603.7" x2="535.7" y2="588.3" stroke="#d2d2d2" stroke-width="1.5" stroke-linecap="round"/><line x1="535.7" y1="573.9" x2="550" y2="580" stroke="#000" stroke-width="3.5" stroke-linecap="round"/><line x1="535.7" y1="573.9" x2="550" y2="580" stroke="#d2d2d2" stroke-width="1.5" stroke-linecap="round"/><line x1="535.7" y1="588.3" x2="562.4" y2="587.2" stroke="#000" stroke-width="3.5" stroke-linecap="round"/><line x1="535.7" y1="588.3" x2="562.4" y2="587.2" stroke="#d2d2d2" stroke-width="1.5" stroke-linecap="round"/><line x1="550" y1="580" x2="564.2" y2="557.5" stroke="#000" stroke-width="3.5" stroke-linecap="round"/><line x1="550" y1="580" x2="564.2" y2="557.5" stroke="#d2d2d2" stroke-width="1.5" stroke-linecap="round"/><line x1="562.4" y1="587.2" x2="564.2" y2="571.8" stroke="#000" stroke-width="3.5" stroke-linecap="round"/><line x1="562.4" y1="587.2" x2="564.2" y2="571.8" stroke="#d2d2d2" stroke-width="1.5" stroke-linecap="round"/><line x1="564.2" y1="557.5" x2="578.5" y2="563.6" stroke="#000" stroke-width="3.5" stroke-linecap="round"/><line x1="564.2" y1="557.5" x2="578.5" y2="563.6" stroke="#d2d2d2" stroke-width="1.5" stroke-linecap="round"/><line x1="564.2" y1="571.8" x2="590.9" y2="570.7" stroke="#000" stroke-width="3.5" stroke-linecap="round"/><line x1="564.2" y1="571.8" x2="590.9" y2="570.7" stroke="#d2d2d2" stroke-width="1.5" stroke-linecap="round"/><line x1="578.5" y1="563.6" x2="592.8" y2="541" stroke="#000" stroke-width="3.5" stroke-linecap="round"/><line x1="578.5" y1="563.6" x2="592.8" y2="541" stroke="#d2d2d2" stroke-width="1.5" stroke-linecap="round"/><line x1="590.9" y1="570.7" x2="592.8" y2="555.3" stroke="#000" stroke-width="3.5" stroke-linecap="round"/><line x1="590.9" y1="570.7" x2="592.8" y2="555.3" stroke="#d2d2d2" stroke-width="1.5" stroke-linecap="round"/><line x1="592.8" y1="541" x2="607" y2="547.1" stroke="#000" stroke-width="3.5" stroke-linecap="round"/><line x1="592.8" y1="541" x2="607" y2="547.1" stroke="#d2d2d2" stroke-width="1.5" stroke-linecap="round"/><line x1="592.8" y1="555.3" x2="619.4" y2="554.3" stroke="#000" stroke-width="3.5" stroke-linecap="round"/><line x1="592.8" y1="555.3" x2="619.4" y2="554.3" stroke="#d2d2d2" stroke-width="1.5" stroke-linecap="round"/><line x1="607" y1="547.1" x2="621.3" y2="524.5" stroke="#000" stroke-width="3.5" stroke-linecap="round"/><line x1="607" y1="547.1" x2="621.3" y2="524.5" stroke="#d2d2d2" stroke-width="1.5" stroke-linecap="round"/><line x1="619.4" y1="554.3" x2="621.3" y2="538.9" stroke="#000" stroke-width="3.5" stroke-linecap="round"/><line x1="619.4" y1="554.3" x2="621.3" y2="538.9" stroke="#d2d2d2" stroke-width="1.5" stroke-linecap="round"/><line x1="621.3" y1="524.5" x2="635.6" y2="530.6" stroke="#000" stroke-width="3.5" stroke-linecap="round"/><line x1="621.3" y1="524.5" x2="635.6" y2="530.6" stroke="#d2d2d2" stroke-width="1.5" stroke-linecap="round"/><line x1="621.3" y1="538.9" x2="648" y2="537.8" stroke="#000" stroke-width="3.5" stroke-linecap="round"/><line x1="621.3" y1="538.9" x2="648" y2="537.8" stroke="#d2d2d2" stroke-width="1.5" stroke-linecap="round"/><line x1="635.6" y1="530.6" x2="649.8" y2="508.1" stroke="#000" stroke-width="3.5" stroke-linecap="round"/><line x1="635.6" y1="530.6" x2="649.8" y2="508.1" stroke="#d2d2d2" stroke-width="1.5" stroke-linecap="round"/><line x1="648" y1="537.8" x2="649.8" y2="522.4" stroke="#000" stroke-width="3.5" stroke-linecap="round"/><line x1="648" y1="537.8" x2="649.8" y2="522.4" stroke="#d2d2d2" stroke-width="1.5" stroke-linecap="round"/><line x1="649.8" y1="508.1" x2="664.1" y2="514.2" stroke="#000" stroke-width="3.5" stroke-linecap="round"/><line x1="649.8" y1="508.1" x2="664.1" y2="514.2" stroke="#d2d2d2" stroke-width="1.5" stroke-linecap="round"/><line x1="649.8" y1="522.4" x2="676.5" y2="521.3" stroke="#000" stroke-width="3.5" stroke-linecap="round"/><line x1="649.8" y1="522.4" x2="676.5" y2="521.3" stroke="#d2d2d2" stroke-width="1.5" stroke-linecap="round"/><line x1="664.1" y1="514.2" x2="678.3" y2="491.6" stroke="#000" stroke-width="3.5" stroke-linecap="round"/><line x1="664.1" y1="514.2" x2="678.3" y2="491.6" stroke="#d2d2d2" stroke-width="1.5" stroke-linecap="round"/><line x1="676.5" y1="521.3" x2="678.3" y2="505.9" stroke="#000" stroke-width="3.5" stroke-linecap="round"/><line x1="676.5" y1="521.3" x2="678.3" y2="505.9" stroke="#d2d2d2" stroke-width="1.5" stroke-linecap="round"/><line x1="678.3" y1="491.6" x2="692.6" y2="497.7" stroke="#000" stroke-width="3.5" stroke-linecap="round"/><line x1="678.3" y1="491.6" x2="692.6" y2="497.7" stroke="#d2d2d2" stroke-width="1.5" stroke-linecap="round"/><line x1="678.3" y1="505.9" x2="705" y2="504.9" stroke="#000" stroke-width="3.5" stroke-linecap="round"/><line x1="678.3" y1="505.9" x2="705" y2="504.9" stroke="#d2d2d2" stroke-width="1.5" stroke-linecap="round"/><line x1="692.6" y1="497.7" x2="706.9" y2="475.1" stroke="#000" stroke-width="3.5" stroke-linecap="round"/><line x1="692.6" y1="497.7" x2="706.9" y2="475.1" stroke="#d2d2d2" stroke-width="1.5" stroke-linecap="round"/><line x1="705" y1="504.9" x2="706.9" y2="489.5" stroke="#000" stroke-width="3.5" stroke-linecap="round"/><line x1="705" y1="504.9" x2="706.9" y2="489.5" stroke="#d2d2d2" stroke-width="1.5" stroke-linecap="round"/><line x1="706.9" y1="475.1" x2="721.1" y2="481.2" stroke="#000" stroke-width="3.5" stroke-linecap="round"/><line x1="706.9" y1="475.1" x2="721.1" y2="481.2" stroke="#d2d2d2" stroke-width="1.5" stroke-linecap="round"/><line x1="706.9" y1="489.5" x2="733.5" y2="488.4" stroke="#000" stroke-width="3.5" stroke-linecap="round"/><line x1="706.9" y1="489.5" x2="733.5" y2="488.4" stroke="#d2d2d2" stroke-width="1.5" stroke-linecap="round"/><line x1="721.1" y1="481.2" x2="735.4" y2="458.7" stroke="#000" stroke-width="3.5" stroke-linecap="round"/><line x1="721.1" y1="481.2" x2="735.4" y2="458.7" stroke="#d2d2d2" stroke-width="1.5" stroke-linecap="round"/><line x1="733.5" y1="488.4" x2="735.4" y2="473" stroke="#000" stroke-width="3.5" stroke-linecap="round"/><line x1="733.5" y1="488.4" x2="735.4" y2="473" stroke="#d2d2d2" stroke-width="1.5" stroke-linecap="round"/><line x1="735.4" y1="458.7" x2="749.6" y2="464.8" stroke="#000" stroke-width="3.5" stroke-linecap="round"/><line x1="735.4" y1="458.7" x2="749.6" y2="464.8" stroke="#d2d2d2" stroke-width="1.5" stroke-linecap="round"/><line x1="735.4" y1="473" x2="762" y2="471.9" stroke="#000" stroke-width="3.5" stroke-linecap="round"/><line x1="735.4" y1="473" x2="762" y2="471.9" stroke="#d2d2d2" stroke-width="1.5" stroke-linecap="round"/><line x1="749.6" y1="464.8" x2="763.9" y2="442.2" stroke="#000" stroke-width="3.5" stroke-linecap="round"/><line x1="749.6" y1="464.8" x2="763.9" y2="442.2" stroke="#d2d2d2" stroke-width="1.5" stroke-linecap="round"/><line x1="762" y1="471.9" x2="763.9" y2="456.5" stroke="#000" stroke-width="3.5" stroke-linecap="round"/><line x1="762" y1="471.9" x2="763.9" y2="456.5" stroke="#d2d2d2" stroke-width="1.5" stroke-linecap="round"/><line x1="763.9" y1="442.2" x2="778.2" y2="448.3" stroke="#000" stroke-width="3.5" stroke-linecap="round"/><line x1="763.9" y1="442.2" x2="778.2" y2="448.3" stroke="#d2d2d2" stroke-width="1.5" stroke-linecap="round"/><line x1="763.9" y1="456.5" x2="790.6" y2="455.5" stroke="#000" stroke-width="3.5" stroke-linecap="round"/><line x1="763.9" y1="456.5" x2="790.6" y2="455.5" stroke="#d2d2d2" stroke-width="1.5" stroke-linecap="round"/><line x1="778.2" y1="448.3" x2="792.4" y2="425.7" stroke="#000" stroke-width="3.5" stroke-linecap="round"/><line x1="778.2" y1="448.3" x2="792.4" y2="425.7" stroke="#d2d2d2" stroke-width="1.5" stroke-linecap="round"/><line x1="790.6" y1="455.5" x2="792.4" y2="440.1" stroke="#000" stroke-width="3.5" stroke-linecap="round"/><line x1="790.6" y1="455.5" x2="792.4" y2="440.1" stroke="#d2d2d2" stroke-width="1.5" stroke-linecap="round"/><line x1="792.4" y1="425.7" x2="806.7" y2="431.8" stroke="#000" stroke-width="3.5" stroke-linecap="round"/><line x1="792.4" y1="425.7" x2="806.7" y2="431.8" stroke="#d2d2d2" stroke-width="1.5" stroke-linecap="round"/><line x1="792.4" y1="440.1" x2="819.1" y2="439" stroke="#000" stroke-width="3.5" stroke-linecap="round"/><line x1="792.4" y1="440.1" x2="819.1" y2="439" stroke="#d2d2d2" stroke-width="1.5" stroke-linecap="round"/><line x1="806.7" y1="431.8" x2="820.9" y2="409.3" stroke="#000" stroke-width="3.5" stroke-linecap="round"/><line x1="806.7" y1="431.8" x2="820.9" y2="409.3" stroke="#d2d2d2" stroke-width="1.5" stroke-linecap="round"/><line x1="819.1" y1="439" x2="820.9" y2="423.6" stroke="#000" stroke-width="3.5" stroke-linecap="round"/><line x1="819.1" y1="439" x2="820.9" y2="423.6" stroke="#d2d2d2" stroke-width="1.5" stroke-linecap="round"/><line x1="820.9" y1="409.3" x2="835.2" y2="415.4" stroke="#000" stroke-width="3.5" stroke-linecap="round"/><line x1="820.9" y1="409.3" x2="835.2" y2="415.4" stroke="#d2d2d2" stroke-width="1.5" stroke-linecap="round"/><line x1="820.9" y1="423.6" x2="847.6" y2="422.5" stroke="#000" stroke-width="3.5" stroke-linecap="round"/><line x1="820.9" y1="423.6" x2="847.6" y2="422.5" stroke="#d2d2d2" stroke-width="1.5" stroke-linecap="round"/><line x1="492.9" y1="613" x2="835.2" y2="415.4" stroke="#000" stroke-width="5.4" stroke-linecap="round"/><line x1="492.9" y1="613" x2="835.2" y2="415.4" stroke="#dadada" stroke-width="2.8" stroke-linecap="round"/><line x1="505.4" y1="620.1" x2="847.6" y2="422.5" stroke="#000" stroke-width="5.4" stroke-linecap="round"/><line x1="505.4" y1="620.1" x2="847.6" y2="422.5" stroke="#dadada" stroke-width="2.8" stroke-linecap="round"/><line x1="492.9" y1="598.6" x2="835.2" y2="401" stroke="#000" stroke-width="5.4" stroke-linecap="round"/><line x1="492.9" y1="598.6" x2="835.2" y2="401" stroke="#dadada" stroke-width="2.8" stroke-linecap="round"/><line x1="505.4" y1="605.8" x2="507.2" y2="590.4" stroke="#000" stroke-width="3.5" stroke-linecap="round"/><line x1="505.4" y1="605.8" x2="507.2" y2="590.4" stroke="#d2d2d2" stroke-width="1.5" stroke-linecap="round"/><line x1="505.4" y1="620.1" x2="519.6" y2="597.6" stroke="#000" stroke-width="3.5" stroke-linecap="round"/><line x1="505.4" y1="620.1" x2="519.6" y2="597.6" stroke="#d2d2d2" stroke-width="1.5" stroke-linecap="round"/><line x1="507.2" y1="590.4" x2="533.9" y2="589.3" stroke="#000" stroke-width="3.5" stroke-linecap="round"/><line x1="507.2" y1="590.4" x2="533.9" y2="589.3" stroke="#d2d2d2" stroke-width="1.5" stroke-linecap="round"/><line x1="519.6" y1="597.6" x2="533.9" y2="603.7" stroke="#000" stroke-width="3.5" stroke-linecap="round"/><line x1="519.6" y1="597.6" x2="533.9" y2="603.7" stroke="#d2d2d2" stroke-width="1.5" stroke-linecap="round"/><line x1="533.9" y1="589.3" x2="535.7" y2="573.9" stroke="#000" stroke-width="3.5" stroke-linecap="round"/><line x1="533.9" y1="589.3" x2="535.7" y2="573.9" stroke="#d2d2d2" stroke-width="1.5" stroke-linecap="round"/><line x1="533.9" y1="603.7" x2="548.1" y2="581.1" stroke="#000" stroke-width="3.5" stroke-linecap="round"/><line x1="533.9" y1="603.7" x2="548.1" y2="581.1" stroke="#d2d2d2" stroke-width="1.5" stroke-linecap="round"/><line x1="535.7" y1="573.9" x2="562.4" y2="572.9" stroke="#000" stroke-width="3.5" stroke-linecap="round"/><line x1="535.7" y1="573.9" x2="562.4" y2="572.9" stroke="#d2d2d2" stroke-width="1.5" stroke-linecap="round"/><line x1="548.1" y1="581.1" x2="562.4" y2="587.2" stroke="#000" stroke-width="3.5" stroke-linecap="round"/><line x1="548.1" y1="581.1" x2="562.4" y2="587.2" stroke="#d2d2d2" stroke-width="1.5" stroke-linecap="round"/><line x1="562.4" y1="572.9" x2="564.2" y2="557.5" stroke="#000" stroke-width="3.5" stroke-linecap="round"/><line x1="562.4" y1="572.9" x2="564.2" y2="557.5" stroke="#d2d2d2" stroke-width="1.5" stroke-linecap="round"/><line x1="562.4" y1="587.2" x2="576.7" y2="564.6" stroke="#000" stroke-width="3.5" stroke-linecap="round"/><line x1="562.4" y1="587.2" x2="576.7" y2="564.6" stroke="#d2d2d2" stroke-width="1.5" stroke-linecap="round"/><line x1="564.2" y1="557.5" x2="590.9" y2="556.4" stroke="#000" stroke-width="3.5" stroke-linecap="round"/><line x1="564.2" y1="557.5" x2="590.9" y2="556.4" stroke="#d2d2d2" stroke-width="1.5" stroke-linecap="round"/><line x1="576.7" y1="564.6" x2="590.9" y2="570.7" stroke="#000" stroke-width="3.5" stroke-linecap="round"/><line x1="576.7" y1="564.6" x2="590.9" y2="570.7" stroke="#d2d2d2" stroke-width="1.5" stroke-linecap="round"/><line x1="590.9" y1="556.4" x2="592.8" y2="541" stroke="#000" stroke-width="3.5" stroke-linecap="round"/><line x1="590.9" y1="556.4" x2="592.8" y2="541" stroke="#d2d2d2" stroke-width="1.5" stroke-linecap="round"/><line x1="590.9" y1="570.7" x2="605.2" y2="548.2" stroke="#000" stroke-width="3.5" stroke-linecap="round"/><line x1="590.9" y1="570.7" x2="605.2" y2="548.2" stroke="#d2d2d2" stroke-width="1.5" stroke-linecap="round"/><line x1="592.8" y1="541" x2="619.4" y2="539.9" stroke="#000" stroke-width="3.5" stroke-linecap="round"/><line x1="592.8" y1="541" x2="619.4" y2="539.9" stroke="#d2d2d2" stroke-width="1.5" stroke-linecap="round"/><line x1="605.2" y1="548.2" x2="619.4" y2="554.3" stroke="#000" stroke-width="3.5" stroke-linecap="round"/><line x1="605.2" y1="548.2" x2="619.4" y2="554.3" stroke="#d2d2d2" stroke-width="1.5" stroke-linecap="round"/><line x1="619.4" y1="539.9" x2="621.3" y2="524.5" stroke="#000" stroke-width="3.5" stroke-linecap="round"/><line x1="619.4" y1="539.9" x2="621.3" y2="524.5" stroke="#d2d2d2" stroke-width="1.5" stroke-linecap="round"/><line x1="619.4" y1="554.3" x2="633.7" y2="531.7" stroke="#000" stroke-width="3.5" stroke-linecap="round"/><line x1="619.4" y1="554.3" x2="633.7" y2="531.7" stroke="#d2d2d2" stroke-width="1.5" stroke-linecap="round"/><line x1="621.3" y1="524.5" x2="648" y2="523.5" stroke="#000" stroke-width="3.5" stroke-linecap="round"/><line x1="621.3" y1="524.5" x2="648" y2="523.5" stroke="#d2d2d2" stroke-width="1.5" stroke-linecap="round"/><line x1="633.7" y1="531.7" x2="648" y2="537.8" stroke="#000" stroke-width="3.5" stroke-linecap="round"/><line x1="633.7" y1="531.7" x2="648" y2="537.8" stroke="#d2d2d2" stroke-width="1.5" stroke-linecap="round"/><line x1="648" y1="523.5" x2="649.8" y2="508.1" stroke="#000" stroke-width="3.5" stroke-linecap="round"/><line x1="648" y1="523.5" x2="649.8" y2="508.1" stroke="#d2d2d2" stroke-width="1.5" stroke-linecap="round"/><line x1="648" y1="537.8" x2="662.2" y2="515.2" stroke="#000" stroke-width="3.5" stroke-linecap="round"/><line x1="648" y1="537.8" x2="662.2" y2="515.2" stroke="#d2d2d2" stroke-width="1.5" stroke-linecap="round"/><line x1="649.8" y1="508.1" x2="676.5" y2="507" stroke="#000" stroke-width="3.5" stroke-linecap="round"/><line x1="649.8" y1="508.1" x2="676.5" y2="507" stroke="#d2d2d2" stroke-width="1.5" stroke-linecap="round"/><line x1="662.2" y1="515.2" x2="676.5" y2="521.3" stroke="#000" stroke-width="3.5" stroke-linecap="round"/><line x1="662.2" y1="515.2" x2="676.5" y2="521.3" stroke="#d2d2d2" stroke-width="1.5" stroke-linecap="round"/><line x1="676.5" y1="507" x2="678.3" y2="491.6" stroke="#000" stroke-width="3.5" stroke-linecap="round"/><line x1="676.5" y1="507" x2="678.3" y2="491.6" stroke="#d2d2d2" stroke-width="1.5" stroke-linecap="round"/><line x1="676.5" y1="521.3" x2="690.7" y2="498.8" stroke="#000" stroke-width="3.5" stroke-linecap="round"/><line x1="676.5" y1="521.3" x2="690.7" y2="498.8" stroke="#d2d2d2" stroke-width="1.5" stroke-linecap="round"/><line x1="678.3" y1="491.6" x2="705" y2="490.5" stroke="#000" stroke-width="3.5" stroke-linecap="round"/><line x1="678.3" y1="491.6" x2="705" y2="490.5" stroke="#d2d2d2" stroke-width="1.5" stroke-linecap="round"/><line x1="690.7" y1="498.8" x2="705" y2="504.9" stroke="#000" stroke-width="3.5" stroke-linecap="round"/><line x1="690.7" y1="498.8" x2="705" y2="504.9" stroke="#d2d2d2" stroke-width="1.5" stroke-linecap="round"/><line x1="705" y1="490.5" x2="706.9" y2="475.1" stroke="#000" stroke-width="3.5" stroke-linecap="round"/><line x1="705" y1="490.5" x2="706.9" y2="475.1" stroke="#d2d2d2" stroke-width="1.5" stroke-linecap="round"/><line x1="705" y1="504.9" x2="719.3" y2="482.3" stroke="#000" stroke-width="3.5" stroke-linecap="round"/><line x1="705" y1="504.9" x2="719.3" y2="482.3" stroke="#d2d2d2" stroke-width="1.5" stroke-linecap="round"/><line x1="706.9" y1="475.1" x2="733.5" y2="474.1" stroke="#000" stroke-width="3.5" stroke-linecap="round"/><line x1="706.9" y1="475.1" x2="733.5" y2="474.1" stroke="#d2d2d2" stroke-width="1.5" stroke-linecap="round"/><line x1="719.3" y1="482.3" x2="733.5" y2="488.4" stroke="#000" stroke-width="3.5" stroke-linecap="round"/><line x1="719.3" y1="482.3" x2="733.5" y2="488.4" stroke="#d2d2d2" stroke-width="1.5" stroke-linecap="round"/><line x1="733.5" y1="474.1" x2="735.4" y2="458.7" stroke="#000" stroke-width="3.5" stroke-linecap="round"/><line x1="733.5" y1="474.1" x2="735.4" y2="458.7" stroke="#d2d2d2" stroke-width="1.5" stroke-linecap="round"/><line x1="733.5" y1="488.4" x2="747.8" y2="465.8" stroke="#000" stroke-width="3.5" stroke-linecap="round"/><line x1="733.5" y1="488.4" x2="747.8" y2="465.8" stroke="#d2d2d2" stroke-width="1.5" stroke-linecap="round"/><line x1="735.4" y1="458.7" x2="762" y2="457.6" stroke="#000" stroke-width="3.5" stroke-linecap="round"/><line x1="735.4" y1="458.7" x2="762" y2="457.6" stroke="#d2d2d2" stroke-width="1.5" stroke-linecap="round"/><line x1="747.8" y1="465.8" x2="762" y2="471.9" stroke="#000" stroke-width="3.5" stroke-linecap="round"/><line x1="747.8" y1="465.8" x2="762" y2="471.9" stroke="#d2d2d2" stroke-width="1.5" stroke-linecap="round"/><line x1="762" y1="457.6" x2="763.9" y2="442.2" stroke="#000" stroke-width="3.5" stroke-linecap="round"/><line x1="762" y1="457.6" x2="763.9" y2="442.2" stroke="#d2d2d2" stroke-width="1.5" stroke-linecap="round"/><line x1="762" y1="471.9" x2="776.3" y2="449.4" stroke="#000" stroke-width="3.5" stroke-linecap="round"/><line x1="762" y1="471.9" x2="776.3" y2="449.4" stroke="#d2d2d2" stroke-width="1.5" stroke-linecap="round"/><line x1="763.9" y1="442.2" x2="790.6" y2="441.1" stroke="#000" stroke-width="3.5" stroke-linecap="round"/><line x1="763.9" y1="442.2" x2="790.6" y2="441.1" stroke="#d2d2d2" stroke-width="1.5" stroke-linecap="round"/><line x1="776.3" y1="449.4" x2="790.6" y2="455.5" stroke="#000" stroke-width="3.5" stroke-linecap="round"/><line x1="776.3" y1="449.4" x2="790.6" y2="455.5" stroke="#d2d2d2" stroke-width="1.5" stroke-linecap="round"/><line x1="790.6" y1="441.1" x2="792.4" y2="425.7" stroke="#000" stroke-width="3.5" stroke-linecap="round"/><line x1="790.6" y1="441.1" x2="792.4" y2="425.7" stroke="#d2d2d2" stroke-width="1.5" stroke-linecap="round"/><line x1="790.6" y1="455.5" x2="804.8" y2="432.9" stroke="#000" stroke-width="3.5" stroke-linecap="round"/><line x1="790.6" y1="455.5" x2="804.8" y2="432.9" stroke="#d2d2d2" stroke-width="1.5" stroke-linecap="round"/><line x1="792.4" y1="425.7" x2="819.1" y2="424.7" stroke="#000" stroke-width="3.5" stroke-linecap="round"/><line x1="792.4" y1="425.7" x2="819.1" y2="424.7" stroke="#d2d2d2" stroke-width="1.5" stroke-linecap="round"/><line x1="804.8" y1="432.9" x2="819.1" y2="439" stroke="#000" stroke-width="3.5" stroke-linecap="round"/><line x1="804.8" y1="432.9" x2="819.1" y2="439" stroke="#d2d2d2" stroke-width="1.5" stroke-linecap="round"/><line x1="819.1" y1="424.7" x2="820.9" y2="409.3" stroke="#000" stroke-width="3.5" stroke-linecap="round"/><line x1="819.1" y1="424.7" x2="820.9" y2="409.3" stroke="#d2d2d2" stroke-width="1.5" stroke-linecap="round"/><line x1="819.1" y1="439" x2="833.3" y2="416.4" stroke="#000" stroke-width="3.5" stroke-linecap="round"/><line x1="819.1" y1="439" x2="833.3" y2="416.4" stroke="#d2d2d2" stroke-width="1.5" stroke-linecap="round"/><line x1="820.9" y1="409.3" x2="847.6" y2="408.2" stroke="#000" stroke-width="3.5" stroke-linecap="round"/><line x1="820.9" y1="409.3" x2="847.6" y2="408.2" stroke="#d2d2d2" stroke-width="1.5" stroke-linecap="round"/><line x1="833.3" y1="416.4" x2="847.6" y2="422.5" stroke="#000" stroke-width="3.5" stroke-linecap="round"/><line x1="833.3" y1="416.4" x2="847.6" y2="422.5" stroke="#d2d2d2" stroke-width="1.5" stroke-linecap="round"/><line x1="492.9" y1="598.6" x2="505.4" y2="605.8" stroke="#000" stroke-width="3.5" stroke-linecap="round"/><line x1="492.9" y1="598.6" x2="505.4" y2="605.8" stroke="#d2d2d2" stroke-width="1.5" stroke-linecap="round"/><line x1="505.4" y1="605.8" x2="505.4" y2="620.1" stroke="#000" stroke-width="3.5" stroke-linecap="round"/><line x1="505.4" y1="605.8" x2="505.4" y2="620.1" stroke="#d2d2d2" stroke-width="1.5" stroke-linecap="round"/><line x1="492.9" y1="598.6" x2="492.9" y2="613" stroke="#000" stroke-width="3.5" stroke-linecap="round"/><line x1="492.9" y1="598.6" x2="492.9" y2="613" stroke="#d2d2d2" stroke-width="1.5" stroke-linecap="round"/><line x1="492.9" y1="613" x2="505.4" y2="620.1" stroke="#000" stroke-width="3.5" stroke-linecap="round"/><line x1="492.9" y1="613" x2="505.4" y2="620.1" stroke="#d2d2d2" stroke-width="1.5" stroke-linecap="round"/><line x1="578.5" y1="549.2" x2="590.9" y2="556.4" stroke="#000" stroke-width="3.5" stroke-linecap="round"/><line x1="578.5" y1="549.2" x2="590.9" y2="556.4" stroke="#d2d2d2" stroke-width="1.5" stroke-linecap="round"/><line x1="590.9" y1="556.4" x2="590.9" y2="570.7" stroke="#000" stroke-width="3.5" stroke-linecap="round"/><line x1="590.9" y1="556.4" x2="590.9" y2="570.7" stroke="#d2d2d2" stroke-width="1.5" stroke-linecap="round"/><line x1="578.5" y1="549.2" x2="578.5" y2="563.6" stroke="#000" stroke-width="3.5" stroke-linecap="round"/><line x1="578.5" y1="549.2" x2="578.5" y2="563.6" stroke="#d2d2d2" stroke-width="1.5" stroke-linecap="round"/><line x1="578.5" y1="563.6" x2="590.9" y2="570.7" stroke="#000" stroke-width="3.5" stroke-linecap="round"/><line x1="578.5" y1="563.6" x2="590.9" y2="570.7" stroke="#d2d2d2" stroke-width="1.5" stroke-linecap="round"/><line x1="664.1" y1="499.8" x2="676.5" y2="507" stroke="#000" stroke-width="3.5" stroke-linecap="round"/><line x1="664.1" y1="499.8" x2="676.5" y2="507" stroke="#d2d2d2" stroke-width="1.5" stroke-linecap="round"/><line x1="676.5" y1="507" x2="676.5" y2="521.3" stroke="#000" stroke-width="3.5" stroke-linecap="round"/><line x1="676.5" y1="507" x2="676.5" y2="521.3" stroke="#d2d2d2" stroke-width="1.5" stroke-linecap="round"/><line x1="664.1" y1="499.8" x2="664.1" y2="514.2" stroke="#000" stroke-width="3.5" stroke-linecap="round"/><line x1="664.1" y1="499.8" x2="664.1" y2="514.2" stroke="#d2d2d2" stroke-width="1.5" stroke-linecap="round"/><line x1="664.1" y1="514.2" x2="676.5" y2="521.3" stroke="#000" stroke-width="3.5" stroke-linecap="round"/><line x1="664.1" y1="514.2" x2="676.5" y2="521.3" stroke="#d2d2d2" stroke-width="1.5" stroke-linecap="round"/><line x1="749.6" y1="450.4" x2="762" y2="457.6" stroke="#000" stroke-width="3.5" stroke-linecap="round"/><line x1="749.6" y1="450.4" x2="762" y2="457.6" stroke="#d2d2d2" stroke-width="1.5" stroke-linecap="round"/><line x1="762" y1="457.6" x2="762" y2="471.9" stroke="#000" stroke-width="3.5" stroke-linecap="round"/><line x1="762" y1="457.6" x2="762" y2="471.9" stroke="#d2d2d2" stroke-width="1.5" stroke-linecap="round"/><line x1="749.6" y1="450.4" x2="749.6" y2="464.8" stroke="#000" stroke-width="3.5" stroke-linecap="round"/><line x1="749.6" y1="450.4" x2="749.6" y2="464.8" stroke="#d2d2d2" stroke-width="1.5" stroke-linecap="round"/><line x1="749.6" y1="464.8" x2="762" y2="471.9" stroke="#000" stroke-width="3.5" stroke-linecap="round"/><line x1="749.6" y1="464.8" x2="762" y2="471.9" stroke="#d2d2d2" stroke-width="1.5" stroke-linecap="round"/><line x1="835.2" y1="401" x2="847.6" y2="408.2" stroke="#000" stroke-width="3.5" stroke-linecap="round"/><line x1="835.2" y1="401" x2="847.6" y2="408.2" stroke="#d2d2d2" stroke-width="1.5" stroke-linecap="round"/><line x1="847.6" y1="408.2" x2="847.6" y2="422.5" stroke="#000" stroke-width="3.5" stroke-linecap="round"/><line x1="847.6" y1="408.2" x2="847.6" y2="422.5" stroke="#d2d2d2" stroke-width="1.5" stroke-linecap="round"/><line x1="835.2" y1="401" x2="835.2" y2="415.4" stroke="#000" stroke-width="3.5" stroke-linecap="round"/><line x1="835.2" y1="401" x2="835.2" y2="415.4" stroke="#d2d2d2" stroke-width="1.5" stroke-linecap="round"/><line x1="835.2" y1="415.4" x2="847.6" y2="422.5" stroke="#000" stroke-width="3.5" stroke-linecap="round"/><line x1="835.2" y1="415.4" x2="847.6" y2="422.5" stroke="#d2d2d2" stroke-width="1.5" stroke-linecap="round"/><line x1="505.4" y1="605.8" x2="847.6" y2="408.2" stroke="#000" stroke-width="5.4" stroke-linecap="round"/><line x1="505.4" y1="605.8" x2="847.6" y2="408.2" stroke="#dadada" stroke-width="2.8" stroke-linecap="round"/><polygon points="828.8,424.5 834.8,428 834.8,438.3 828.8,434.9" fill="#080808" stroke="#000" stroke-width="0.9" stroke-linejoin="round" /><polygon points="834.8,428 864.3,410.9 864.3,421.3 834.8,438.3" fill="#111" stroke="#000" stroke-width="0.9" stroke-linejoin="round" /><polygon points="834.8,428 864.3,410.9 858.3,407.5 828.8,424.5" fill="#1a1a1a" stroke="#000" stroke-width="0.9" stroke-linejoin="round" /><polygon points="836.9,434.6 862.6,419.8 862.6,417.8 836.9,432.7" fill="#e9e9e9" stroke="none" stroke-width="0" stroke-linejoin="round" /><polygon points="836.9,430.9 862.6,416.1 862.6,414.1 836.9,429" fill="#e9e9e9" stroke="none" stroke-width="0" stroke-linejoin="round" /><polygon points="824.1,434.1 836.5,441.3 836.5,449.7 824.1,442.5" fill="#0c0c0c" stroke="#000" stroke-width="0.9" stroke-linejoin="round" /><polygon points="836.5,441.3 853.6,431.4 853.6,439.8 836.5,449.7" fill="#151515" stroke="#000" stroke-width="0.9" stroke-linejoin="round" /><polygon points="836.5,441.3 853.6,431.4 841.2,424.3 824.1,434.1" fill="#202020" stroke="#000" stroke-width="0.9" stroke-linejoin="round" /><path d="M828.7 439.6V461.8A9.1 5.2 0 0 0 846.8 461.8V439.6A9.1 5.2 0 0 0 828.7 439.6Z" fill="url(#cg)" stroke="#000" stroke-width="1.1" /><polygon points="804.8,442.8 815.1,448.7 815.1,455.6 804.8,449.7" fill="#0c0c0c" stroke="#000" stroke-width="0.9" stroke-linejoin="round" /><polygon points="815.1,448.7 827.9,441.3 827.9,448.2 815.1,455.6" fill="#151515" stroke="#000" stroke-width="0.9" stroke-linejoin="round" /><polygon points="815.1,448.7 827.9,441.3 817.7,435.4 804.8,442.8" fill="#202020" stroke="#000" stroke-width="0.9" stroke-linejoin="round" /><path d="M809.4 448V466.8A7 4 0 0 0 823.3 466.8V448A7 4 0 0 0 809.4 448Z" fill="url(#cg)" stroke="#000" stroke-width="1.1" /><polygon points="786,449.2 792,452.7 792,463 786,459.6" fill="#080808" stroke="#000" stroke-width="0.9" stroke-linejoin="round" /><polygon points="792,452.7 821.5,435.6 821.5,446 792,463" fill="#111" stroke="#000" stroke-width="0.9" stroke-linejoin="round" /><polygon points="792,452.7 821.5,435.6 815.5,432.2 786,449.2" fill="#1a1a1a" stroke="#000" stroke-width="0.9" stroke-linejoin="round" /><polygon points="794.1,459.3 819.8,444.5 819.8,442.5 794.1,457.4" fill="#e9e9e9" stroke="none" stroke-width="0" stroke-linejoin="round" /><polygon points="794.1,455.6 819.8,440.8 819.8,438.8 794.1,453.7" fill="#e9e9e9" stroke="none" stroke-width="0" stroke-linejoin="round" /><polygon points="781.3,458.8 793.7,466 793.7,474.4 781.3,467.2" fill="#0c0c0c" stroke="#000" stroke-width="0.9" stroke-linejoin="round" /><polygon points="793.7,466 810.8,456.1 810.8,464.5 793.7,474.4" fill="#151515" stroke="#000" stroke-width="0.9" stroke-linejoin="round" /><polygon points="793.7,466 810.8,456.1 798.4,449 781.3,458.8" fill="#202020" stroke="#000" stroke-width="0.9" stroke-linejoin="round" /><path d="M785.9 464.3V486.5A9.1 5.2 0 0 0 804.1 486.5V464.3A9.1 5.2 0 0 0 785.9 464.3Z" fill="url(#cg)" stroke="#000" stroke-width="1.1" /><polygon points="762,467.5 772.3,473.4 772.3,480.3 762,474.4" fill="#0c0c0c" stroke="#000" stroke-width="0.9" stroke-linejoin="round" /><polygon points="772.3,473.4 785.1,466 785.1,472.9 772.3,480.3" fill="#151515" stroke="#000" stroke-width="0.9" stroke-linejoin="round" /><polygon points="772.3,473.4 785.1,466 774.9,460.1 762,467.5" fill="#202020" stroke="#000" stroke-width="0.9" stroke-linejoin="round" /><path d="M766.6 472.7V491.5A7 4 0 0 0 780.6 491.5V472.7A7 4 0 0 0 766.6 472.7Z" fill="url(#cg)" stroke="#000" stroke-width="1.1" /><polygon points="743.2,473.9 749.2,477.4 749.2,487.7 743.2,484.3" fill="#080808" stroke="#000" stroke-width="0.9" stroke-linejoin="round" /><polygon points="749.2,477.4 778.7,460.3 778.7,470.7 749.2,487.7" fill="#111" stroke="#000" stroke-width="0.9" stroke-linejoin="round" /><polygon points="749.2,477.4 778.7,460.3 772.7,456.9 743.2,473.9" fill="#1a1a1a" stroke="#000" stroke-width="0.9" stroke-linejoin="round" /><polygon points="751.3,484 777,469.2 777,467.2 751.3,482.1" fill="#e9e9e9" stroke="none" stroke-width="0" stroke-linejoin="round" /><polygon points="751.3,480.3 777,465.5 777,463.5 751.3,478.4" fill="#e9e9e9" stroke="none" stroke-width="0" stroke-linejoin="round" /><polygon points="738.5,483.5 750.9,490.7 750.9,499.1 738.5,491.9" fill="#0c0c0c" stroke="#000" stroke-width="0.9" stroke-linejoin="round" /><polygon points="750.9,490.7 768,480.8 768,489.2 750.9,499.1" fill="#151515" stroke="#000" stroke-width="0.9" stroke-linejoin="round" /><polygon points="750.9,490.7 768,480.8 755.6,473.7 738.5,483.5" fill="#202020" stroke="#000" stroke-width="0.9" stroke-linejoin="round" /><path d="M743.1 489V511.2A9.1 5.2 0 0 0 761.3 511.2V489A9.1 5.2 0 0 0 743.1 489Z" fill="url(#cg)" stroke="#000" stroke-width="1.1" /><polygon points="719.3,492.2 729.5,498.1 729.5,505 719.3,499.1" fill="#0c0c0c" stroke="#000" stroke-width="0.9" stroke-linejoin="round" /><polygon points="729.5,498.1 742.4,490.7 742.4,497.6 729.5,505" fill="#151515" stroke="#000" stroke-width="0.9" stroke-linejoin="round" /><polygon points="729.5,498.1 742.4,490.7 732.1,484.8 719.3,492.2" fill="#202020" stroke="#000" stroke-width="0.9" stroke-linejoin="round" /><path d="M723.9 497.4V516.2A7 4 0 0 0 737.8 516.2V497.4A7 4 0 0 0 723.9 497.4Z" fill="url(#cg)" stroke="#000" stroke-width="1.1" /><polygon points="700.4,498.6 706.4,502.1 706.4,512.4 700.4,509" fill="#080808" stroke="#000" stroke-width="0.9" stroke-linejoin="round" /><polygon points="706.4,502.1 735.9,485 735.9,495.4 706.4,512.4" fill="#111" stroke="#000" stroke-width="0.9" stroke-linejoin="round" /><polygon points="706.4,502.1 735.9,485 730,481.6 700.4,498.6" fill="#1a1a1a" stroke="#000" stroke-width="0.9" stroke-linejoin="round" /><polygon points="708.6,508.7 734.2,493.9 734.2,491.9 708.6,506.8" fill="#e9e9e9" stroke="none" stroke-width="0" stroke-linejoin="round" /><polygon points="708.6,505 734.2,490.2 734.2,488.2 708.6,503.1" fill="#e9e9e9" stroke="none" stroke-width="0" stroke-linejoin="round" /><polygon points="695.7,508.2 708.1,515.4 708.1,523.8 695.7,516.6" fill="#0c0c0c" stroke="#000" stroke-width="0.9" stroke-linejoin="round" /><polygon points="708.1,515.4 725.3,505.5 725.3,513.9 708.1,523.8" fill="#151515" stroke="#000" stroke-width="0.9" stroke-linejoin="round" /><polygon points="708.1,515.4 725.3,505.5 712.8,498.4 695.7,508.2" fill="#202020" stroke="#000" stroke-width="0.9" stroke-linejoin="round" /><path d="M700.3 513.7V535.9A9.1 5.2 0 0 0 718.5 535.9V513.7A9.1 5.2 0 0 0 700.3 513.7Z" fill="url(#cg)" stroke="#000" stroke-width="1.1" /><polygon points="676.5,516.9 686.7,522.8 686.7,529.7 676.5,523.8" fill="#0c0c0c" stroke="#000" stroke-width="0.9" stroke-linejoin="round" /><polygon points="686.7,522.8 699.6,515.4 699.6,522.3 686.7,529.7" fill="#151515" stroke="#000" stroke-width="0.9" stroke-linejoin="round" /><polygon points="686.7,522.8 699.6,515.4 689.3,509.5 676.5,516.9" fill="#202020" stroke="#000" stroke-width="0.9" stroke-linejoin="round" /><path d="M681.1 522.1V540.9A7 4 0 0 0 695 540.9V522.1A7 4 0 0 0 681.1 522.1Z" fill="url(#cg)" stroke="#000" stroke-width="1.1" /><polygon points="655.1,529.2 665.4,535.2 665.4,542.1 655.1,536.2" fill="#0c0c0c" stroke="#000" stroke-width="0.9" stroke-linejoin="round" /><polygon points="665.4,535.2 678.2,527.8 678.2,534.7 665.4,542.1" fill="#151515" stroke="#000" stroke-width="0.9" stroke-linejoin="round" /><polygon points="665.4,535.2 678.2,527.8 667.9,521.8 655.1,529.2" fill="#202020" stroke="#000" stroke-width="0.9" stroke-linejoin="round" /><path d="M659.7 534.4V553.2A7 4 0 0 0 673.6 553.2V534.4A7 4 0 0 0 659.7 534.4Z" fill="url(#cg)" stroke="#000" stroke-width="1.1" /><polygon points="636.3,535.7 642.3,539.1 642.3,549.5 636.3,546" fill="#080808" stroke="#000" stroke-width="0.9" stroke-linejoin="round" /><polygon points="642.3,539.1 671.8,522.1 671.8,532.5 642.3,549.5" fill="#111" stroke="#000" stroke-width="0.9" stroke-linejoin="round" /><polygon points="642.3,539.1 671.8,522.1 665.8,518.6 636.3,535.7" fill="#1a1a1a" stroke="#000" stroke-width="0.9" stroke-linejoin="round" /><polygon points="644.4,545.8 670.1,531 670.1,529 644.4,543.8" fill="#e9e9e9" stroke="none" stroke-width="0" stroke-linejoin="round" /><polygon points="644.4,542.1 670.1,527.3 670.1,525.3 644.4,540.1" fill="#e9e9e9" stroke="none" stroke-width="0" stroke-linejoin="round" /><polygon points="631.6,545.3 644,552.5 644,560.9 631.6,553.7" fill="#0c0c0c" stroke="#000" stroke-width="0.9" stroke-linejoin="round" /><polygon points="644,552.5 661.1,542.6 661.1,551 644,560.9" fill="#151515" stroke="#000" stroke-width="0.9" stroke-linejoin="round" /><polygon points="644,552.5 661.1,542.6 648.7,535.4 631.6,545.3" fill="#202020" stroke="#000" stroke-width="0.9" stroke-linejoin="round" /><path d="M636.2 550.7V573A9.1 5.2 0 0 0 654.3 573V550.7A9.1 5.2 0 0 0 636.2 550.7Z" fill="url(#cg)" stroke="#000" stroke-width="1.1" /><polygon points="612.3,553.9 622.6,559.9 622.6,566.8 612.3,560.9" fill="#0c0c0c" stroke="#000" stroke-width="0.9" stroke-linejoin="round" /><polygon points="622.6,559.9 635.4,552.5 635.4,559.4 622.6,566.8" fill="#151515" stroke="#000" stroke-width="0.9" stroke-linejoin="round" /><polygon points="622.6,559.9 635.4,552.5 625.1,546.5 612.3,553.9" fill="#202020" stroke="#000" stroke-width="0.9" stroke-linejoin="round" /><path d="M616.9 559.1V577.9A7 4 0 0 0 630.8 577.9V559.1A7 4 0 0 0 616.9 559.1Z" fill="url(#cg)" stroke="#000" stroke-width="1.1" /><polygon points="593.5,560.4 599.5,563.8 599.5,574.2 593.5,570.7" fill="#080808" stroke="#000" stroke-width="0.9" stroke-linejoin="round" /><polygon points="599.5,563.8 629,546.8 629,557.2 599.5,574.2" fill="#111" stroke="#000" stroke-width="0.9" stroke-linejoin="round" /><polygon points="599.5,563.8 629,546.8 623,543.3 593.5,560.4" fill="#1a1a1a" stroke="#000" stroke-width="0.9" stroke-linejoin="round" /><polygon points="601.6,570.5 627.3,555.7 627.3,553.7 601.6,568.5" fill="#e9e9e9" stroke="none" stroke-width="0" stroke-linejoin="round" /><polygon points="601.6,566.8 627.3,552 627.3,550 601.6,564.8" fill="#e9e9e9" stroke="none" stroke-width="0" stroke-linejoin="round" /><polygon points="588.8,570 601.2,577.2 601.2,585.6 588.8,578.4" fill="#0c0c0c" stroke="#000" stroke-width="0.9" stroke-linejoin="round" /><polygon points="601.2,577.2 618.3,567.3 618.3,575.7 601.2,585.6" fill="#151515" stroke="#000" stroke-width="0.9" stroke-linejoin="round" /><polygon points="601.2,577.2 618.3,567.3 605.9,560.1 588.8,570" fill="#202020" stroke="#000" stroke-width="0.9" stroke-linejoin="round" /><path d="M593.4 575.4V597.7A9.1 5.2 0 0 0 611.5 597.7V575.4A9.1 5.2 0 0 0 593.4 575.4Z" fill="url(#cg)" stroke="#000" stroke-width="1.1" /><polygon points="569.5,578.6 579.8,584.6 579.8,591.5 569.5,585.6" fill="#0c0c0c" stroke="#000" stroke-width="0.9" stroke-linejoin="round" /><polygon points="579.8,584.6 592.6,577.2 592.6,584.1 579.8,591.5" fill="#151515" stroke="#000" stroke-width="0.9" stroke-linejoin="round" /><polygon points="579.8,584.6 592.6,577.2 582.4,571.2 569.5,578.6" fill="#202020" stroke="#000" stroke-width="0.9" stroke-linejoin="round" /><path d="M574.1 583.8V602.6A7 4 0 0 0 588 602.6V583.8A7 4 0 0 0 574.1 583.8Z" fill="url(#cg)" stroke="#000" stroke-width="1.1" /><polygon points="550.7,585.1 556.7,588.5 556.7,598.9 550.7,595.4" fill="#080808" stroke="#000" stroke-width="0.9" stroke-linejoin="round" /><polygon points="556.7,588.5 586.2,571.5 586.2,581.9 556.7,598.9" fill="#111" stroke="#000" stroke-width="0.9" stroke-linejoin="round" /><polygon points="556.7,588.5 586.2,571.5 580.2,568 550.7,585.1" fill="#1a1a1a" stroke="#000" stroke-width="0.9" stroke-linejoin="round" /><polygon points="558.8,595.2 584.5,580.4 584.5,578.4 558.8,593.2" fill="#e9e9e9" stroke="none" stroke-width="0" stroke-linejoin="round" /><polygon points="558.8,591.5 584.5,576.7 584.5,574.7 558.8,589.5" fill="#e9e9e9" stroke="none" stroke-width="0" stroke-linejoin="round" /><polygon points="546,594.7 558.4,601.9 558.4,610.3 546,603.1" fill="#0c0c0c" stroke="#000" stroke-width="0.9" stroke-linejoin="round" /><polygon points="558.4,601.9 575.5,592 575.5,600.4 558.4,610.3" fill="#151515" stroke="#000" stroke-width="0.9" stroke-linejoin="round" /><polygon points="558.4,601.9 575.5,592 563.1,584.8 546,594.7" fill="#202020" stroke="#000" stroke-width="0.9" stroke-linejoin="round" /><path d="M550.6 600.1V622.4A9.1 5.2 0 0 0 568.8 622.4V600.1A9.1 5.2 0 0 0 550.6 600.1Z" fill="url(#cg)" stroke="#000" stroke-width="1.1" /><polygon points="526.7,603.3 537,609.3 537,616.2 526.7,610.3" fill="#0c0c0c" stroke="#000" stroke-width="0.9" stroke-linejoin="round" /><polygon points="537,609.3 549.8,601.9 549.8,608.8 537,616.2" fill="#151515" stroke="#000" stroke-width="0.9" stroke-linejoin="round" /><polygon points="537,609.3 549.8,601.9 539.6,595.9 526.7,603.3" fill="#202020" stroke="#000" stroke-width="0.9" stroke-linejoin="round" /><path d="M531.3 608.5V627.3A7 4 0 0 0 545.3 627.3V608.5A7 4 0 0 0 531.3 608.5Z" fill="url(#cg)" stroke="#000" stroke-width="1.1" /><polygon points="507.9,609.8 513.9,613.2 513.9,623.6 507.9,620.1" fill="#080808" stroke="#000" stroke-width="0.9" stroke-linejoin="round" /><polygon points="513.9,613.2 543.4,596.2 543.4,606.6 513.9,623.6" fill="#111" stroke="#000" stroke-width="0.9" stroke-linejoin="round" /><polygon points="513.9,613.2 543.4,596.2 537.4,592.7 507.9,609.8" fill="#1a1a1a" stroke="#000" stroke-width="0.9" stroke-linejoin="round" /><polygon points="516,619.9 541.7,605.1 541.7,603.1 516,617.9" fill="#e9e9e9" stroke="none" stroke-width="0" stroke-linejoin="round" /><polygon points="516,616.2 541.7,601.4 541.7,599.4 516,614.2" fill="#e9e9e9" stroke="none" stroke-width="0" stroke-linejoin="round" /><polygon points="503.2,619.4 515.6,626.6 515.6,635 503.2,627.8" fill="#0c0c0c" stroke="#000" stroke-width="0.9" stroke-linejoin="round" /><polygon points="515.6,626.6 532.7,616.7 532.7,625.1 515.6,635" fill="#151515" stroke="#000" stroke-width="0.9" stroke-linejoin="round" /><polygon points="515.6,626.6 532.7,616.7 520.3,609.5 503.2,619.4" fill="#202020" stroke="#000" stroke-width="0.9" stroke-linejoin="round" /><path d="M507.8 624.8V649.5A9.1 5.2 0 0 0 526 649.5V624.8A9.1 5.2 0 0 0 507.8 624.8Z" fill="url(#cg)" stroke="#000" stroke-width="1.1" /><line x1="552.2" y1="548.5" x2="544.7" y2="568.8" stroke="#0c5a1e" stroke-width="3.2" stroke-linecap="round"/><line x1="552.2" y1="548.5" x2="560.8" y2="573.8" stroke="#0c5a1e" stroke-width="3.2" stroke-linecap="round"/><line x1="552.2" y1="548.5" x2="556.3" y2="590.7" stroke="#0c5a1e" stroke-width="3.2" stroke-linecap="round"/><line x1="552.2" y1="548.5" x2="561.8" y2="587.5" stroke="#0c5a1e" stroke-width="3.2" stroke-linecap="round"/><line x1="552.2" y1="548.5" x2="547.1" y2="564.7" stroke="#0c5a1e" stroke-width="3.2" stroke-linecap="round"/><line x1="552.2" y1="548.5" x2="557.3" y2="559.7" stroke="#0c5a1e" stroke-width="3.2" stroke-linecap="round"/><line x1="552.2" y1="548.5" x2="544.7" y2="568.8" stroke="#2fc24a" stroke-width="1.5" stroke-linecap="round"/><line x1="552.2" y1="548.5" x2="560.8" y2="573.8" stroke="#2fc24a" stroke-width="1.5" stroke-linecap="round"/><line x1="552.2" y1="548.5" x2="556.3" y2="590.7" stroke="#2fc24a" stroke-width="1.5" stroke-linecap="round"/><line x1="552.2" y1="548.5" x2="561.8" y2="587.5" stroke="#2fc24a" stroke-width="1.5" stroke-linecap="round"/><line x1="552.2" y1="548.5" x2="547.1" y2="564.7" stroke="#2fc24a" stroke-width="1.5" stroke-linecap="round"/><line x1="552.2" y1="548.5" x2="557.3" y2="559.7" stroke="#2fc24a" stroke-width="1.5" stroke-linecap="round"/><line x1="552.6" y1="532.5" x2="552.6" y2="348.5" stroke="#000" stroke-width="2.9" /><ellipse cx="552.9" cy="343.9" rx="3.400" ry="3.600" fill="#0a0a0a"/><rect x="550" y="345.5" width="5.200" height="7" rx="1.200" fill="#0a0a0a"/><rect x="551.6" y="349.1" width="2" height="1.400" fill="#ddd"/><g transform="translate(551.4 538.5) rotate(23)"><path d="M-11.500 -7.600H12A4.500 7.600 0 0 1 12 7.600H-11.500A7.600 7.600 0 0 1 -11.500 -7.600Z" fill="#f5a31c" stroke="#000" stroke-width="1.2"/><ellipse cx="12" cy="0" rx="4.500" ry="7.600" fill="#f8b53a" stroke="#000" stroke-width="1"/><ellipse cx="-1" cy="-7.800" rx="2.200" ry="1.300" fill="#111"/></g><line x1="552.2" y1="542.5" x2="552.2" y2="548.5" stroke="#111" stroke-width="2.5" /><line x1="788.4" y1="412.2" x2="780.9" y2="432.4" stroke="#0c5a1e" stroke-width="3.2" stroke-linecap="round"/><line x1="788.4" y1="412.2" x2="797" y2="437.5" stroke="#0c5a1e" stroke-width="3.2" stroke-linecap="round"/><line x1="788.4" y1="412.2" x2="792.4" y2="454.4" stroke="#0c5a1e" stroke-width="3.2" stroke-linecap="round"/><line x1="788.4" y1="412.2" x2="798" y2="451.2" stroke="#0c5a1e" stroke-width="3.2" stroke-linecap="round"/><line x1="788.4" y1="412.2" x2="783.2" y2="428.3" stroke="#0c5a1e" stroke-width="3.2" stroke-linecap="round"/><line x1="788.4" y1="412.2" x2="793.5" y2="423.4" stroke="#0c5a1e" stroke-width="3.2" stroke-linecap="round"/><line x1="788.4" y1="412.2" x2="780.9" y2="432.4" stroke="#2fc24a" stroke-width="1.5" stroke-linecap="round"/><line x1="788.4" y1="412.2" x2="797" y2="437.5" stroke="#2fc24a" stroke-width="1.5" stroke-linecap="round"/><line x1="788.4" y1="412.2" x2="792.4" y2="454.4" stroke="#2fc24a" stroke-width="1.5" stroke-linecap="round"/><line x1="788.4" y1="412.2" x2="798" y2="451.2" stroke="#2fc24a" stroke-width="1.5" stroke-linecap="round"/><line x1="788.4" y1="412.2" x2="783.2" y2="428.3" stroke="#2fc24a" stroke-width="1.5" stroke-linecap="round"/><line x1="788.4" y1="412.2" x2="793.5" y2="423.4" stroke="#2fc24a" stroke-width="1.5" stroke-linecap="round"/><line x1="788.8" y1="396.2" x2="788.8" y2="212.2" stroke="#000" stroke-width="2.9" /><ellipse cx="789.1" cy="207.6" rx="3.400" ry="3.600" fill="#0a0a0a"/><rect x="786.2" y="209.2" width="5.200" height="7" rx="1.200" fill="#0a0a0a"/><rect x="787.8" y="212.8" width="2" height="1.400" fill="#ddd"/><g transform="translate(787.6 402.2) rotate(23)"><path d="M-11.500 -7.600H12A4.500 7.600 0 0 1 12 7.600H-11.500A7.600 7.600 0 0 1 -11.500 -7.600Z" fill="#f5a31c" stroke="#000" stroke-width="1.2"/><ellipse cx="12" cy="0" rx="4.500" ry="7.600" fill="#f8b53a" stroke="#000" stroke-width="1"/><ellipse cx="-1" cy="-7.800" rx="2.200" ry="1.300" fill="#111"/></g><line x1="788.4" y1="406.2" x2="788.4" y2="412.2" stroke="#111" stroke-width="2.5" /><line x1="600.3" y1="663.6" x2="614.6" y2="641.1" stroke="#000" stroke-width="3.5" stroke-linecap="round"/><line x1="600.3" y1="663.6" x2="614.6" y2="641.1" stroke="#d2d2d2" stroke-width="1.5" stroke-linecap="round"/><line x1="612.7" y1="670.8" x2="614.6" y2="655.4" stroke="#000" stroke-width="3.5" stroke-linecap="round"/><line x1="612.7" y1="670.8" x2="614.6" y2="655.4" stroke="#d2d2d2" stroke-width="1.5" stroke-linecap="round"/><line x1="614.6" y1="641.1" x2="628.8" y2="647.1" stroke="#000" stroke-width="3.5" stroke-linecap="round"/><line x1="614.6" y1="641.1" x2="628.8" y2="647.1" stroke="#d2d2d2" stroke-width="1.5" stroke-linecap="round"/><line x1="614.6" y1="655.4" x2="641.3" y2="654.3" stroke="#000" stroke-width="3.5" stroke-linecap="round"/><line x1="614.6" y1="655.4" x2="641.3" y2="654.3" stroke="#d2d2d2" stroke-width="1.5" stroke-linecap="round"/><line x1="628.8" y1="647.1" x2="643.1" y2="624.6" stroke="#000" stroke-width="3.5" stroke-linecap="round"/><line x1="628.8" y1="647.1" x2="643.1" y2="624.6" stroke="#d2d2d2" stroke-width="1.5" stroke-linecap="round"/><line x1="641.3" y1="654.3" x2="643.1" y2="638.9" stroke="#000" stroke-width="3.5" stroke-linecap="round"/><line x1="641.3" y1="654.3" x2="643.1" y2="638.9" stroke="#d2d2d2" stroke-width="1.5" stroke-linecap="round"/><line x1="643.1" y1="624.6" x2="657.4" y2="630.7" stroke="#000" stroke-width="3.5" stroke-linecap="round"/><line x1="643.1" y1="624.6" x2="657.4" y2="630.7" stroke="#d2d2d2" stroke-width="1.5" stroke-linecap="round"/><line x1="643.1" y1="638.9" x2="669.8" y2="637.8" stroke="#000" stroke-width="3.5" stroke-linecap="round"/><line x1="643.1" y1="638.9" x2="669.8" y2="637.8" stroke="#d2d2d2" stroke-width="1.5" stroke-linecap="round"/><line x1="657.4" y1="630.7" x2="671.6" y2="608.1" stroke="#000" stroke-width="3.5" stroke-linecap="round"/><line x1="657.4" y1="630.7" x2="671.6" y2="608.1" stroke="#d2d2d2" stroke-width="1.5" stroke-linecap="round"/><line x1="669.8" y1="637.8" x2="671.6" y2="622.4" stroke="#000" stroke-width="3.5" stroke-linecap="round"/><line x1="669.8" y1="637.8" x2="671.6" y2="622.4" stroke="#d2d2d2" stroke-width="1.5" stroke-linecap="round"/><line x1="671.6" y1="608.1" x2="685.9" y2="614.2" stroke="#000" stroke-width="3.5" stroke-linecap="round"/><line x1="671.6" y1="608.1" x2="685.9" y2="614.2" stroke="#d2d2d2" stroke-width="1.5" stroke-linecap="round"/><line x1="671.6" y1="622.4" x2="698.3" y2="621.4" stroke="#000" stroke-width="3.5" stroke-linecap="round"/><line x1="671.6" y1="622.4" x2="698.3" y2="621.4" stroke="#d2d2d2" stroke-width="1.5" stroke-linecap="round"/><line x1="685.9" y1="614.2" x2="700.2" y2="591.7" stroke="#000" stroke-width="3.5" stroke-linecap="round"/><line x1="685.9" y1="614.2" x2="700.2" y2="591.7" stroke="#d2d2d2" stroke-width="1.5" stroke-linecap="round"/><line x1="698.3" y1="621.4" x2="700.2" y2="606" stroke="#000" stroke-width="3.5" stroke-linecap="round"/><line x1="698.3" y1="621.4" x2="700.2" y2="606" stroke="#d2d2d2" stroke-width="1.5" stroke-linecap="round"/><line x1="700.2" y1="591.7" x2="714.4" y2="597.7" stroke="#000" stroke-width="3.5" stroke-linecap="round"/><line x1="700.2" y1="591.7" x2="714.4" y2="597.7" stroke="#d2d2d2" stroke-width="1.5" stroke-linecap="round"/><line x1="700.2" y1="606" x2="726.8" y2="604.9" stroke="#000" stroke-width="3.5" stroke-linecap="round"/><line x1="700.2" y1="606" x2="726.8" y2="604.9" stroke="#d2d2d2" stroke-width="1.5" stroke-linecap="round"/><line x1="714.4" y1="597.7" x2="728.7" y2="575.2" stroke="#000" stroke-width="3.5" stroke-linecap="round"/><line x1="714.4" y1="597.7" x2="728.7" y2="575.2" stroke="#d2d2d2" stroke-width="1.5" stroke-linecap="round"/><line x1="726.8" y1="604.9" x2="728.7" y2="589.5" stroke="#000" stroke-width="3.5" stroke-linecap="round"/><line x1="726.8" y1="604.9" x2="728.7" y2="589.5" stroke="#d2d2d2" stroke-width="1.5" stroke-linecap="round"/><line x1="728.7" y1="575.2" x2="742.9" y2="581.3" stroke="#000" stroke-width="3.5" stroke-linecap="round"/><line x1="728.7" y1="575.2" x2="742.9" y2="581.3" stroke="#d2d2d2" stroke-width="1.5" stroke-linecap="round"/><line x1="728.7" y1="589.5" x2="755.3" y2="588.4" stroke="#000" stroke-width="3.5" stroke-linecap="round"/><line x1="728.7" y1="589.5" x2="755.3" y2="588.4" stroke="#d2d2d2" stroke-width="1.5" stroke-linecap="round"/><line x1="742.9" y1="581.3" x2="757.2" y2="558.7" stroke="#000" stroke-width="3.5" stroke-linecap="round"/><line x1="742.9" y1="581.3" x2="757.2" y2="558.7" stroke="#d2d2d2" stroke-width="1.5" stroke-linecap="round"/><line x1="755.3" y1="588.4" x2="757.2" y2="573" stroke="#000" stroke-width="3.5" stroke-linecap="round"/><line x1="755.3" y1="588.4" x2="757.2" y2="573" stroke="#d2d2d2" stroke-width="1.5" stroke-linecap="round"/><line x1="757.2" y1="558.7" x2="771.5" y2="564.8" stroke="#000" stroke-width="3.5" stroke-linecap="round"/><line x1="757.2" y1="558.7" x2="771.5" y2="564.8" stroke="#d2d2d2" stroke-width="1.5" stroke-linecap="round"/><line x1="757.2" y1="573" x2="783.9" y2="572" stroke="#000" stroke-width="3.5" stroke-linecap="round"/><line x1="757.2" y1="573" x2="783.9" y2="572" stroke="#d2d2d2" stroke-width="1.5" stroke-linecap="round"/><line x1="771.5" y1="564.8" x2="785.7" y2="542.3" stroke="#000" stroke-width="3.5" stroke-linecap="round"/><line x1="771.5" y1="564.8" x2="785.7" y2="542.3" stroke="#d2d2d2" stroke-width="1.5" stroke-linecap="round"/><line x1="783.9" y1="572" x2="785.7" y2="556.6" stroke="#000" stroke-width="3.5" stroke-linecap="round"/><line x1="783.9" y1="572" x2="785.7" y2="556.6" stroke="#d2d2d2" stroke-width="1.5" stroke-linecap="round"/><line x1="785.7" y1="542.3" x2="800" y2="548.3" stroke="#000" stroke-width="3.5" stroke-linecap="round"/><line x1="785.7" y1="542.3" x2="800" y2="548.3" stroke="#d2d2d2" stroke-width="1.5" stroke-linecap="round"/><line x1="785.7" y1="556.6" x2="812.4" y2="555.5" stroke="#000" stroke-width="3.5" stroke-linecap="round"/><line x1="785.7" y1="556.6" x2="812.4" y2="555.5" stroke="#d2d2d2" stroke-width="1.5" stroke-linecap="round"/><line x1="800" y1="548.3" x2="814.2" y2="525.8" stroke="#000" stroke-width="3.5" stroke-linecap="round"/><line x1="800" y1="548.3" x2="814.2" y2="525.8" stroke="#d2d2d2" stroke-width="1.5" stroke-linecap="round"/><line x1="812.4" y1="555.5" x2="814.2" y2="540.1" stroke="#000" stroke-width="3.5" stroke-linecap="round"/><line x1="812.4" y1="555.5" x2="814.2" y2="540.1" stroke="#d2d2d2" stroke-width="1.5" stroke-linecap="round"/><line x1="814.2" y1="525.8" x2="828.5" y2="531.9" stroke="#000" stroke-width="3.5" stroke-linecap="round"/><line x1="814.2" y1="525.8" x2="828.5" y2="531.9" stroke="#d2d2d2" stroke-width="1.5" stroke-linecap="round"/><line x1="814.2" y1="540.1" x2="840.9" y2="539" stroke="#000" stroke-width="3.5" stroke-linecap="round"/><line x1="814.2" y1="540.1" x2="840.9" y2="539" stroke="#d2d2d2" stroke-width="1.5" stroke-linecap="round"/><line x1="828.5" y1="531.9" x2="842.8" y2="509.3" stroke="#000" stroke-width="3.5" stroke-linecap="round"/><line x1="828.5" y1="531.9" x2="842.8" y2="509.3" stroke="#d2d2d2" stroke-width="1.5" stroke-linecap="round"/><line x1="840.9" y1="539" x2="842.8" y2="523.6" stroke="#000" stroke-width="3.5" stroke-linecap="round"/><line x1="840.9" y1="539" x2="842.8" y2="523.6" stroke="#d2d2d2" stroke-width="1.5" stroke-linecap="round"/><line x1="842.8" y1="509.3" x2="857" y2="515.4" stroke="#000" stroke-width="3.5" stroke-linecap="round"/><line x1="842.8" y1="509.3" x2="857" y2="515.4" stroke="#d2d2d2" stroke-width="1.5" stroke-linecap="round"/><line x1="842.8" y1="523.6" x2="869.4" y2="522.6" stroke="#000" stroke-width="3.5" stroke-linecap="round"/><line x1="842.8" y1="523.6" x2="869.4" y2="522.6" stroke="#d2d2d2" stroke-width="1.5" stroke-linecap="round"/><line x1="857" y1="515.4" x2="871.3" y2="492.9" stroke="#000" stroke-width="3.5" stroke-linecap="round"/><line x1="857" y1="515.4" x2="871.3" y2="492.9" stroke="#d2d2d2" stroke-width="1.5" stroke-linecap="round"/><line x1="869.4" y1="522.6" x2="871.3" y2="507.2" stroke="#000" stroke-width="3.5" stroke-linecap="round"/><line x1="869.4" y1="522.6" x2="871.3" y2="507.2" stroke="#d2d2d2" stroke-width="1.5" stroke-linecap="round"/><line x1="871.3" y1="492.9" x2="885.5" y2="498.9" stroke="#000" stroke-width="3.5" stroke-linecap="round"/><line x1="871.3" y1="492.9" x2="885.5" y2="498.9" stroke="#d2d2d2" stroke-width="1.5" stroke-linecap="round"/><line x1="871.3" y1="507.2" x2="897.9" y2="506.1" stroke="#000" stroke-width="3.5" stroke-linecap="round"/><line x1="871.3" y1="507.2" x2="897.9" y2="506.1" stroke="#d2d2d2" stroke-width="1.5" stroke-linecap="round"/><line x1="885.5" y1="498.9" x2="899.8" y2="476.4" stroke="#000" stroke-width="3.5" stroke-linecap="round"/><line x1="885.5" y1="498.9" x2="899.8" y2="476.4" stroke="#d2d2d2" stroke-width="1.5" stroke-linecap="round"/><line x1="897.9" y1="506.1" x2="899.8" y2="490.7" stroke="#000" stroke-width="3.5" stroke-linecap="round"/><line x1="897.9" y1="506.1" x2="899.8" y2="490.7" stroke="#d2d2d2" stroke-width="1.5" stroke-linecap="round"/><line x1="899.8" y1="476.4" x2="914.1" y2="482.5" stroke="#000" stroke-width="3.5" stroke-linecap="round"/><line x1="899.8" y1="476.4" x2="914.1" y2="482.5" stroke="#d2d2d2" stroke-width="1.5" stroke-linecap="round"/><line x1="899.8" y1="490.7" x2="926.5" y2="489.6" stroke="#000" stroke-width="3.5" stroke-linecap="round"/><line x1="899.8" y1="490.7" x2="926.5" y2="489.6" stroke="#d2d2d2" stroke-width="1.5" stroke-linecap="round"/><line x1="914.1" y1="482.5" x2="928.3" y2="459.9" stroke="#000" stroke-width="3.5" stroke-linecap="round"/><line x1="914.1" y1="482.5" x2="928.3" y2="459.9" stroke="#d2d2d2" stroke-width="1.5" stroke-linecap="round"/><line x1="926.5" y1="489.6" x2="928.3" y2="474.2" stroke="#000" stroke-width="3.5" stroke-linecap="round"/><line x1="926.5" y1="489.6" x2="928.3" y2="474.2" stroke="#d2d2d2" stroke-width="1.5" stroke-linecap="round"/><line x1="928.3" y1="459.9" x2="942.6" y2="466" stroke="#000" stroke-width="3.5" stroke-linecap="round"/><line x1="928.3" y1="459.9" x2="942.6" y2="466" stroke="#d2d2d2" stroke-width="1.5" stroke-linecap="round"/><line x1="928.3" y1="474.2" x2="955" y2="473.2" stroke="#000" stroke-width="3.5" stroke-linecap="round"/><line x1="928.3" y1="474.2" x2="955" y2="473.2" stroke="#d2d2d2" stroke-width="1.5" stroke-linecap="round"/><line x1="600.3" y1="663.6" x2="942.6" y2="466" stroke="#000" stroke-width="5.4" stroke-linecap="round"/><line x1="600.3" y1="663.6" x2="942.6" y2="466" stroke="#dadada" stroke-width="2.8" stroke-linecap="round"/><line x1="612.7" y1="670.8" x2="955" y2="473.2" stroke="#000" stroke-width="5.4" stroke-linecap="round"/><line x1="612.7" y1="670.8" x2="955" y2="473.2" stroke="#dadada" stroke-width="2.8" stroke-linecap="round"/><line x1="600.3" y1="649.3" x2="942.6" y2="451.7" stroke="#000" stroke-width="5.4" stroke-linecap="round"/><line x1="600.3" y1="649.3" x2="942.6" y2="451.7" stroke="#dadada" stroke-width="2.8" stroke-linecap="round"/><line x1="612.7" y1="656.4" x2="614.6" y2="641.1" stroke="#000" stroke-width="3.5" stroke-linecap="round"/><line x1="612.7" y1="656.4" x2="614.6" y2="641.1" stroke="#d2d2d2" stroke-width="1.5" stroke-linecap="round"/><line x1="612.7" y1="670.8" x2="627" y2="648.2" stroke="#000" stroke-width="3.5" stroke-linecap="round"/><line x1="612.7" y1="670.8" x2="627" y2="648.2" stroke="#d2d2d2" stroke-width="1.5" stroke-linecap="round"/><line x1="614.6" y1="641.1" x2="641.3" y2="640" stroke="#000" stroke-width="3.5" stroke-linecap="round"/><line x1="614.6" y1="641.1" x2="641.3" y2="640" stroke="#d2d2d2" stroke-width="1.5" stroke-linecap="round"/><line x1="627" y1="648.2" x2="641.3" y2="654.3" stroke="#000" stroke-width="3.5" stroke-linecap="round"/><line x1="627" y1="648.2" x2="641.3" y2="654.3" stroke="#d2d2d2" stroke-width="1.5" stroke-linecap="round"/><line x1="641.3" y1="640" x2="643.1" y2="624.6" stroke="#000" stroke-width="3.5" stroke-linecap="round"/><line x1="641.3" y1="640" x2="643.1" y2="624.6" stroke="#d2d2d2" stroke-width="1.5" stroke-linecap="round"/><line x1="641.3" y1="654.3" x2="655.5" y2="631.7" stroke="#000" stroke-width="3.5" stroke-linecap="round"/><line x1="641.3" y1="654.3" x2="655.5" y2="631.7" stroke="#d2d2d2" stroke-width="1.5" stroke-linecap="round"/><line x1="643.1" y1="624.6" x2="669.8" y2="623.5" stroke="#000" stroke-width="3.5" stroke-linecap="round"/><line x1="643.1" y1="624.6" x2="669.8" y2="623.5" stroke="#d2d2d2" stroke-width="1.5" stroke-linecap="round"/><line x1="655.5" y1="631.7" x2="669.8" y2="637.8" stroke="#000" stroke-width="3.5" stroke-linecap="round"/><line x1="655.5" y1="631.7" x2="669.8" y2="637.8" stroke="#d2d2d2" stroke-width="1.5" stroke-linecap="round"/><line x1="669.8" y1="623.5" x2="671.6" y2="608.1" stroke="#000" stroke-width="3.5" stroke-linecap="round"/><line x1="669.8" y1="623.5" x2="671.6" y2="608.1" stroke="#d2d2d2" stroke-width="1.5" stroke-linecap="round"/><line x1="669.8" y1="637.8" x2="684" y2="615.3" stroke="#000" stroke-width="3.5" stroke-linecap="round"/><line x1="669.8" y1="637.8" x2="684" y2="615.3" stroke="#d2d2d2" stroke-width="1.5" stroke-linecap="round"/><line x1="671.6" y1="608.1" x2="698.3" y2="607" stroke="#000" stroke-width="3.5" stroke-linecap="round"/><line x1="671.6" y1="608.1" x2="698.3" y2="607" stroke="#d2d2d2" stroke-width="1.5" stroke-linecap="round"/><line x1="684" y1="615.3" x2="698.3" y2="621.4" stroke="#000" stroke-width="3.5" stroke-linecap="round"/><line x1="684" y1="615.3" x2="698.3" y2="621.4" stroke="#d2d2d2" stroke-width="1.5" stroke-linecap="round"/><line x1="698.3" y1="607" x2="700.2" y2="591.7" stroke="#000" stroke-width="3.5" stroke-linecap="round"/><line x1="698.3" y1="607" x2="700.2" y2="591.7" stroke="#d2d2d2" stroke-width="1.5" stroke-linecap="round"/><line x1="698.3" y1="621.4" x2="712.6" y2="598.8" stroke="#000" stroke-width="3.5" stroke-linecap="round"/><line x1="698.3" y1="621.4" x2="712.6" y2="598.8" stroke="#d2d2d2" stroke-width="1.5" stroke-linecap="round"/><line x1="700.2" y1="591.7" x2="726.8" y2="590.6" stroke="#000" stroke-width="3.5" stroke-linecap="round"/><line x1="700.2" y1="591.7" x2="726.8" y2="590.6" stroke="#d2d2d2" stroke-width="1.5" stroke-linecap="round"/><line x1="712.6" y1="598.8" x2="726.8" y2="604.9" stroke="#000" stroke-width="3.5" stroke-linecap="round"/><line x1="712.6" y1="598.8" x2="726.8" y2="604.9" stroke="#d2d2d2" stroke-width="1.5" stroke-linecap="round"/><line x1="726.8" y1="590.6" x2="728.7" y2="575.2" stroke="#000" stroke-width="3.5" stroke-linecap="round"/><line x1="726.8" y1="590.6" x2="728.7" y2="575.2" stroke="#d2d2d2" stroke-width="1.5" stroke-linecap="round"/><line x1="726.8" y1="604.9" x2="741.1" y2="582.3" stroke="#000" stroke-width="3.5" stroke-linecap="round"/><line x1="726.8" y1="604.9" x2="741.1" y2="582.3" stroke="#d2d2d2" stroke-width="1.5" stroke-linecap="round"/><line x1="728.7" y1="575.2" x2="755.3" y2="574.1" stroke="#000" stroke-width="3.5" stroke-linecap="round"/><line x1="728.7" y1="575.2" x2="755.3" y2="574.1" stroke="#d2d2d2" stroke-width="1.5" stroke-linecap="round"/><line x1="741.1" y1="582.3" x2="755.3" y2="588.4" stroke="#000" stroke-width="3.5" stroke-linecap="round"/><line x1="741.1" y1="582.3" x2="755.3" y2="588.4" stroke="#d2d2d2" stroke-width="1.5" stroke-linecap="round"/><line x1="755.3" y1="574.1" x2="757.2" y2="558.7" stroke="#000" stroke-width="3.5" stroke-linecap="round"/><line x1="755.3" y1="574.1" x2="757.2" y2="558.7" stroke="#d2d2d2" stroke-width="1.5" stroke-linecap="round"/><line x1="755.3" y1="588.4" x2="769.6" y2="565.9" stroke="#000" stroke-width="3.5" stroke-linecap="round"/><line x1="755.3" y1="588.4" x2="769.6" y2="565.9" stroke="#d2d2d2" stroke-width="1.5" stroke-linecap="round"/><line x1="757.2" y1="558.7" x2="783.9" y2="557.6" stroke="#000" stroke-width="3.5" stroke-linecap="round"/><line x1="757.2" y1="558.7" x2="783.9" y2="557.6" stroke="#d2d2d2" stroke-width="1.5" stroke-linecap="round"/><line x1="769.6" y1="565.9" x2="783.9" y2="572" stroke="#000" stroke-width="3.5" stroke-linecap="round"/><line x1="769.6" y1="565.9" x2="783.9" y2="572" stroke="#d2d2d2" stroke-width="1.5" stroke-linecap="round"/><line x1="783.9" y1="557.6" x2="785.7" y2="542.3" stroke="#000" stroke-width="3.5" stroke-linecap="round"/><line x1="783.9" y1="557.6" x2="785.7" y2="542.3" stroke="#d2d2d2" stroke-width="1.5" stroke-linecap="round"/><line x1="783.9" y1="572" x2="798.1" y2="549.4" stroke="#000" stroke-width="3.5" stroke-linecap="round"/><line x1="783.9" y1="572" x2="798.1" y2="549.4" stroke="#d2d2d2" stroke-width="1.5" stroke-linecap="round"/><line x1="785.7" y1="542.3" x2="812.4" y2="541.2" stroke="#000" stroke-width="3.5" stroke-linecap="round"/><line x1="785.7" y1="542.3" x2="812.4" y2="541.2" stroke="#d2d2d2" stroke-width="1.5" stroke-linecap="round"/><line x1="798.1" y1="549.4" x2="812.4" y2="555.5" stroke="#000" stroke-width="3.5" stroke-linecap="round"/><line x1="798.1" y1="549.4" x2="812.4" y2="555.5" stroke="#d2d2d2" stroke-width="1.5" stroke-linecap="round"/><line x1="812.4" y1="541.2" x2="814.2" y2="525.8" stroke="#000" stroke-width="3.5" stroke-linecap="round"/><line x1="812.4" y1="541.2" x2="814.2" y2="525.8" stroke="#d2d2d2" stroke-width="1.5" stroke-linecap="round"/><line x1="812.4" y1="555.5" x2="826.6" y2="532.9" stroke="#000" stroke-width="3.5" stroke-linecap="round"/><line x1="812.4" y1="555.5" x2="826.6" y2="532.9" stroke="#d2d2d2" stroke-width="1.5" stroke-linecap="round"/><line x1="814.2" y1="525.8" x2="840.9" y2="524.7" stroke="#000" stroke-width="3.5" stroke-linecap="round"/><line x1="814.2" y1="525.8" x2="840.9" y2="524.7" stroke="#d2d2d2" stroke-width="1.5" stroke-linecap="round"/><line x1="826.6" y1="532.9" x2="840.9" y2="539" stroke="#000" stroke-width="3.5" stroke-linecap="round"/><line x1="826.6" y1="532.9" x2="840.9" y2="539" stroke="#d2d2d2" stroke-width="1.5" stroke-linecap="round"/><line x1="840.9" y1="524.7" x2="842.8" y2="509.3" stroke="#000" stroke-width="3.5" stroke-linecap="round"/><line x1="840.9" y1="524.7" x2="842.8" y2="509.3" stroke="#d2d2d2" stroke-width="1.5" stroke-linecap="round"/><line x1="840.9" y1="539" x2="855.2" y2="516.5" stroke="#000" stroke-width="3.5" stroke-linecap="round"/><line x1="840.9" y1="539" x2="855.2" y2="516.5" stroke="#d2d2d2" stroke-width="1.5" stroke-linecap="round"/><line x1="842.8" y1="509.3" x2="869.4" y2="508.2" stroke="#000" stroke-width="3.5" stroke-linecap="round"/><line x1="842.8" y1="509.3" x2="869.4" y2="508.2" stroke="#d2d2d2" stroke-width="1.5" stroke-linecap="round"/><line x1="855.2" y1="516.5" x2="869.4" y2="522.6" stroke="#000" stroke-width="3.5" stroke-linecap="round"/><line x1="855.2" y1="516.5" x2="869.4" y2="522.6" stroke="#d2d2d2" stroke-width="1.5" stroke-linecap="round"/><line x1="869.4" y1="508.2" x2="871.3" y2="492.9" stroke="#000" stroke-width="3.5" stroke-linecap="round"/><line x1="869.4" y1="508.2" x2="871.3" y2="492.9" stroke="#d2d2d2" stroke-width="1.5" stroke-linecap="round"/><line x1="869.4" y1="522.6" x2="883.7" y2="500" stroke="#000" stroke-width="3.5" stroke-linecap="round"/><line x1="869.4" y1="522.6" x2="883.7" y2="500" stroke="#d2d2d2" stroke-width="1.5" stroke-linecap="round"/><line x1="871.3" y1="492.9" x2="897.9" y2="491.8" stroke="#000" stroke-width="3.5" stroke-linecap="round"/><line x1="871.3" y1="492.9" x2="897.9" y2="491.8" stroke="#d2d2d2" stroke-width="1.5" stroke-linecap="round"/><line x1="883.7" y1="500" x2="897.9" y2="506.1" stroke="#000" stroke-width="3.5" stroke-linecap="round"/><line x1="883.7" y1="500" x2="897.9" y2="506.1" stroke="#d2d2d2" stroke-width="1.5" stroke-linecap="round"/><line x1="897.9" y1="491.8" x2="899.8" y2="476.4" stroke="#000" stroke-width="3.5" stroke-linecap="round"/><line x1="897.9" y1="491.8" x2="899.8" y2="476.4" stroke="#d2d2d2" stroke-width="1.5" stroke-linecap="round"/><line x1="897.9" y1="506.1" x2="912.2" y2="483.5" stroke="#000" stroke-width="3.5" stroke-linecap="round"/><line x1="897.9" y1="506.1" x2="912.2" y2="483.5" stroke="#d2d2d2" stroke-width="1.5" stroke-linecap="round"/><line x1="899.8" y1="476.4" x2="926.5" y2="475.3" stroke="#000" stroke-width="3.5" stroke-linecap="round"/><line x1="899.8" y1="476.4" x2="926.5" y2="475.3" stroke="#d2d2d2" stroke-width="1.5" stroke-linecap="round"/><line x1="912.2" y1="483.5" x2="926.5" y2="489.6" stroke="#000" stroke-width="3.5" stroke-linecap="round"/><line x1="912.2" y1="483.5" x2="926.5" y2="489.6" stroke="#d2d2d2" stroke-width="1.5" stroke-linecap="round"/><line x1="926.5" y1="475.3" x2="928.3" y2="459.9" stroke="#000" stroke-width="3.5" stroke-linecap="round"/><line x1="926.5" y1="475.3" x2="928.3" y2="459.9" stroke="#d2d2d2" stroke-width="1.5" stroke-linecap="round"/><line x1="926.5" y1="489.6" x2="940.7" y2="467.1" stroke="#000" stroke-width="3.5" stroke-linecap="round"/><line x1="926.5" y1="489.6" x2="940.7" y2="467.1" stroke="#d2d2d2" stroke-width="1.5" stroke-linecap="round"/><line x1="928.3" y1="459.9" x2="955" y2="458.8" stroke="#000" stroke-width="3.5" stroke-linecap="round"/><line x1="928.3" y1="459.9" x2="955" y2="458.8" stroke="#d2d2d2" stroke-width="1.5" stroke-linecap="round"/><line x1="940.7" y1="467.1" x2="955" y2="473.2" stroke="#000" stroke-width="3.5" stroke-linecap="round"/><line x1="940.7" y1="467.1" x2="955" y2="473.2" stroke="#d2d2d2" stroke-width="1.5" stroke-linecap="round"/><line x1="600.3" y1="649.3" x2="612.7" y2="656.4" stroke="#000" stroke-width="3.5" stroke-linecap="round"/><line x1="600.3" y1="649.3" x2="612.7" y2="656.4" stroke="#d2d2d2" stroke-width="1.5" stroke-linecap="round"/><line x1="612.7" y1="656.4" x2="612.7" y2="670.8" stroke="#000" stroke-width="3.5" stroke-linecap="round"/><line x1="612.7" y1="656.4" x2="612.7" y2="670.8" stroke="#d2d2d2" stroke-width="1.5" stroke-linecap="round"/><line x1="600.3" y1="649.3" x2="600.3" y2="663.6" stroke="#000" stroke-width="3.5" stroke-linecap="round"/><line x1="600.3" y1="649.3" x2="600.3" y2="663.6" stroke="#d2d2d2" stroke-width="1.5" stroke-linecap="round"/><line x1="600.3" y1="663.6" x2="612.7" y2="670.8" stroke="#000" stroke-width="3.5" stroke-linecap="round"/><line x1="600.3" y1="663.6" x2="612.7" y2="670.8" stroke="#d2d2d2" stroke-width="1.5" stroke-linecap="round"/><line x1="685.9" y1="599.9" x2="698.3" y2="607" stroke="#000" stroke-width="3.5" stroke-linecap="round"/><line x1="685.9" y1="599.9" x2="698.3" y2="607" stroke="#d2d2d2" stroke-width="1.5" stroke-linecap="round"/><line x1="698.3" y1="607" x2="698.3" y2="621.4" stroke="#000" stroke-width="3.5" stroke-linecap="round"/><line x1="698.3" y1="607" x2="698.3" y2="621.4" stroke="#d2d2d2" stroke-width="1.5" stroke-linecap="round"/><line x1="685.9" y1="599.9" x2="685.9" y2="614.2" stroke="#000" stroke-width="3.5" stroke-linecap="round"/><line x1="685.9" y1="599.9" x2="685.9" y2="614.2" stroke="#d2d2d2" stroke-width="1.5" stroke-linecap="round"/><line x1="685.9" y1="614.2" x2="698.3" y2="621.4" stroke="#000" stroke-width="3.5" stroke-linecap="round"/><line x1="685.9" y1="614.2" x2="698.3" y2="621.4" stroke="#d2d2d2" stroke-width="1.5" stroke-linecap="round"/><line x1="771.5" y1="550.5" x2="783.9" y2="557.6" stroke="#000" stroke-width="3.5" stroke-linecap="round"/><line x1="771.5" y1="550.5" x2="783.9" y2="557.6" stroke="#d2d2d2" stroke-width="1.5" stroke-linecap="round"/><line x1="783.9" y1="557.6" x2="783.9" y2="572" stroke="#000" stroke-width="3.5" stroke-linecap="round"/><line x1="783.9" y1="557.6" x2="783.9" y2="572" stroke="#d2d2d2" stroke-width="1.5" stroke-linecap="round"/><line x1="771.5" y1="550.5" x2="771.5" y2="564.8" stroke="#000" stroke-width="3.5" stroke-linecap="round"/><line x1="771.5" y1="550.5" x2="771.5" y2="564.8" stroke="#d2d2d2" stroke-width="1.5" stroke-linecap="round"/><line x1="771.5" y1="564.8" x2="783.9" y2="572" stroke="#000" stroke-width="3.5" stroke-linecap="round"/><line x1="771.5" y1="564.8" x2="783.9" y2="572" stroke="#d2d2d2" stroke-width="1.5" stroke-linecap="round"/><line x1="857" y1="501.1" x2="869.4" y2="508.2" stroke="#000" stroke-width="3.5" stroke-linecap="round"/><line x1="857" y1="501.1" x2="869.4" y2="508.2" stroke="#d2d2d2" stroke-width="1.5" stroke-linecap="round"/><line x1="869.4" y1="508.2" x2="869.4" y2="522.6" stroke="#000" stroke-width="3.5" stroke-linecap="round"/><line x1="869.4" y1="508.2" x2="869.4" y2="522.6" stroke="#d2d2d2" stroke-width="1.5" stroke-linecap="round"/><line x1="857" y1="501.1" x2="857" y2="515.4" stroke="#000" stroke-width="3.5" stroke-linecap="round"/><line x1="857" y1="501.1" x2="857" y2="515.4" stroke="#d2d2d2" stroke-width="1.5" stroke-linecap="round"/><line x1="857" y1="515.4" x2="869.4" y2="522.6" stroke="#000" stroke-width="3.5" stroke-linecap="round"/><line x1="857" y1="515.4" x2="869.4" y2="522.6" stroke="#d2d2d2" stroke-width="1.5" stroke-linecap="round"/><line x1="942.6" y1="451.7" x2="955" y2="458.8" stroke="#000" stroke-width="3.5" stroke-linecap="round"/><line x1="942.6" y1="451.7" x2="955" y2="458.8" stroke="#d2d2d2" stroke-width="1.5" stroke-linecap="round"/><line x1="955" y1="458.8" x2="955" y2="473.2" stroke="#000" stroke-width="3.5" stroke-linecap="round"/><line x1="955" y1="458.8" x2="955" y2="473.2" stroke="#d2d2d2" stroke-width="1.5" stroke-linecap="round"/><line x1="942.6" y1="451.7" x2="942.6" y2="466" stroke="#000" stroke-width="3.5" stroke-linecap="round"/><line x1="942.6" y1="451.7" x2="942.6" y2="466" stroke="#d2d2d2" stroke-width="1.5" stroke-linecap="round"/><line x1="942.6" y1="466" x2="955" y2="473.2" stroke="#000" stroke-width="3.5" stroke-linecap="round"/><line x1="942.6" y1="466" x2="955" y2="473.2" stroke="#d2d2d2" stroke-width="1.5" stroke-linecap="round"/><line x1="612.7" y1="656.4" x2="955" y2="458.8" stroke="#000" stroke-width="5.4" stroke-linecap="round"/><line x1="612.7" y1="656.4" x2="955" y2="458.8" stroke="#dadada" stroke-width="2.8" stroke-linecap="round"/><polygon points="936.2,475.1 942.2,478.6 942.2,489 936.2,485.5" fill="#080808" stroke="#000" stroke-width="0.9" stroke-linejoin="round" /><polygon points="942.2,478.6 971.7,461.6 971.7,471.9 942.2,489" fill="#111" stroke="#000" stroke-width="0.9" stroke-linejoin="round" /><polygon points="942.2,478.6 971.7,461.6 965.7,458.1 936.2,475.1" fill="#1a1a1a" stroke="#000" stroke-width="0.9" stroke-linejoin="round" /><polygon points="944.3,485.3 970,470.5 970,468.5 944.3,483.3" fill="#e9e9e9" stroke="none" stroke-width="0" stroke-linejoin="round" /><polygon points="944.3,481.6 970,466.8 970,464.8 944.3,479.6" fill="#e9e9e9" stroke="none" stroke-width="0" stroke-linejoin="round" /><polygon points="931.5,484.8 943.9,491.9 943.9,500.3 931.5,493.2" fill="#0c0c0c" stroke="#000" stroke-width="0.9" stroke-linejoin="round" /><polygon points="943.9,491.9 961,482.1 961,490.5 943.9,500.3" fill="#151515" stroke="#000" stroke-width="0.9" stroke-linejoin="round" /><polygon points="943.9,491.9 961,482.1 948.6,474.9 931.5,484.8" fill="#202020" stroke="#000" stroke-width="0.9" stroke-linejoin="round" /><path d="M936.1 490.2V512.4A9.1 5.2 0 0 0 954.2 512.4V490.2A9.1 5.2 0 0 0 936.1 490.2Z" fill="url(#cg)" stroke="#000" stroke-width="1.1" /><polygon points="912.2,493.4 922.5,499.4 922.5,506.3 912.2,500.3" fill="#0c0c0c" stroke="#000" stroke-width="0.9" stroke-linejoin="round" /><polygon points="922.5,499.4 935.3,491.9 935.3,498.9 922.5,506.3" fill="#151515" stroke="#000" stroke-width="0.9" stroke-linejoin="round" /><polygon points="922.5,499.4 935.3,491.9 925,486 912.2,493.4" fill="#202020" stroke="#000" stroke-width="0.9" stroke-linejoin="round" /><path d="M916.8 498.6V517.4A7 4 0 0 0 930.7 517.4V498.6A7 4 0 0 0 916.8 498.6Z" fill="url(#cg)" stroke="#000" stroke-width="1.1" /><polygon points="893.4,499.8 899.4,503.3 899.4,513.7 893.4,510.2" fill="#080808" stroke="#000" stroke-width="0.9" stroke-linejoin="round" /><polygon points="899.4,503.3 928.9,486.3 928.9,496.6 899.4,513.7" fill="#111" stroke="#000" stroke-width="0.9" stroke-linejoin="round" /><polygon points="899.4,503.3 928.9,486.3 922.9,482.8 893.4,499.8" fill="#1a1a1a" stroke="#000" stroke-width="0.9" stroke-linejoin="round" /><polygon points="901.5,510 927.2,495.2 927.2,493.2 901.5,508" fill="#e9e9e9" stroke="none" stroke-width="0" stroke-linejoin="round" /><polygon points="901.5,506.3 927.2,491.5 927.2,489.5 901.5,504.3" fill="#e9e9e9" stroke="none" stroke-width="0" stroke-linejoin="round" /><polygon points="888.7,509.5 901.1,516.6 901.1,525 888.7,517.9" fill="#0c0c0c" stroke="#000" stroke-width="0.9" stroke-linejoin="round" /><polygon points="901.1,516.6 918.2,506.8 918.2,515.2 901.1,525" fill="#151515" stroke="#000" stroke-width="0.9" stroke-linejoin="round" /><polygon points="901.1,516.6 918.2,506.8 905.8,499.6 888.7,509.5" fill="#202020" stroke="#000" stroke-width="0.9" stroke-linejoin="round" /><path d="M893.3 514.9V537.1A9.1 5.2 0 0 0 911.4 537.1V514.9A9.1 5.2 0 0 0 893.3 514.9Z" fill="url(#cg)" stroke="#000" stroke-width="1.1" /><polygon points="869.4,518.1 879.7,524.1 879.7,531 869.4,525" fill="#0c0c0c" stroke="#000" stroke-width="0.9" stroke-linejoin="round" /><polygon points="879.7,524.1 892.5,516.6 892.5,523.6 879.7,531" fill="#151515" stroke="#000" stroke-width="0.9" stroke-linejoin="round" /><polygon points="879.7,524.1 892.5,516.6 882.3,510.7 869.4,518.1" fill="#202020" stroke="#000" stroke-width="0.9" stroke-linejoin="round" /><path d="M874 523.3V542.1A7 4 0 0 0 887.9 542.1V523.3A7 4 0 0 0 874 523.3Z" fill="url(#cg)" stroke="#000" stroke-width="1.1" /><polygon points="850.6,524.5 856.6,528 856.6,538.4 850.6,534.9" fill="#080808" stroke="#000" stroke-width="0.9" stroke-linejoin="round" /><polygon points="856.6,528 886.1,511 886.1,521.3 856.6,538.4" fill="#111" stroke="#000" stroke-width="0.9" stroke-linejoin="round" /><polygon points="856.6,528 886.1,511 880.1,507.5 850.6,524.5" fill="#1a1a1a" stroke="#000" stroke-width="0.9" stroke-linejoin="round" /><polygon points="858.7,534.7 884.4,519.9 884.4,517.9 858.7,532.7" fill="#e9e9e9" stroke="none" stroke-width="0" stroke-linejoin="round" /><polygon points="858.7,531 884.4,516.2 884.4,514.2 858.7,529" fill="#e9e9e9" stroke="none" stroke-width="0" stroke-linejoin="round" /><polygon points="845.9,534.2 858.3,541.3 858.3,549.7 845.9,542.6" fill="#0c0c0c" stroke="#000" stroke-width="0.9" stroke-linejoin="round" /><polygon points="858.3,541.3 875.4,531.5 875.4,539.9 858.3,549.7" fill="#151515" stroke="#000" stroke-width="0.9" stroke-linejoin="round" /><polygon points="858.3,541.3 875.4,531.5 863,524.3 845.9,534.2" fill="#202020" stroke="#000" stroke-width="0.9" stroke-linejoin="round" /><path d="M850.5 539.6V561.8A9.1 5.2 0 0 0 868.7 561.8V539.6A9.1 5.2 0 0 0 850.5 539.6Z" fill="url(#cg)" stroke="#000" stroke-width="1.1" /><polygon points="826.6,542.8 836.9,548.8 836.9,555.7 826.6,549.7" fill="#0c0c0c" stroke="#000" stroke-width="0.9" stroke-linejoin="round" /><polygon points="836.9,548.8 849.7,541.3 849.7,548.3 836.9,555.7" fill="#151515" stroke="#000" stroke-width="0.9" stroke-linejoin="round" /><polygon points="836.9,548.8 849.7,541.3 839.5,535.4 826.6,542.8" fill="#202020" stroke="#000" stroke-width="0.9" stroke-linejoin="round" /><path d="M831.2 548V566.8A7 4 0 0 0 845.2 566.8V548A7 4 0 0 0 831.2 548Z" fill="url(#cg)" stroke="#000" stroke-width="1.1" /><polygon points="807.8,549.2 813.8,552.7 813.8,563.1 807.8,559.6" fill="#080808" stroke="#000" stroke-width="0.9" stroke-linejoin="round" /><polygon points="813.8,552.7 843.3,535.7 843.3,546 813.8,563.1" fill="#111" stroke="#000" stroke-width="0.9" stroke-linejoin="round" /><polygon points="813.8,552.7 843.3,535.7 837.3,532.2 807.8,549.2" fill="#1a1a1a" stroke="#000" stroke-width="0.9" stroke-linejoin="round" /><polygon points="815.9,559.4 841.6,544.6 841.6,542.6 815.9,557.4" fill="#e9e9e9" stroke="none" stroke-width="0" stroke-linejoin="round" /><polygon points="815.9,555.7 841.6,540.9 841.6,538.9 815.9,553.7" fill="#e9e9e9" stroke="none" stroke-width="0" stroke-linejoin="round" /><polygon points="803.1,558.9 815.5,566 815.5,574.4 803.1,567.3" fill="#0c0c0c" stroke="#000" stroke-width="0.9" stroke-linejoin="round" /><polygon points="815.5,566 832.6,556.2 832.6,564.6 815.5,574.4" fill="#151515" stroke="#000" stroke-width="0.9" stroke-linejoin="round" /><polygon points="815.5,566 832.6,556.2 820.2,549 803.1,558.9" fill="#202020" stroke="#000" stroke-width="0.9" stroke-linejoin="round" /><path d="M807.7 564.3V586.5A9.1 5.2 0 0 0 825.9 586.5V564.3A9.1 5.2 0 0 0 807.7 564.3Z" fill="url(#cg)" stroke="#000" stroke-width="1.1" /><polygon points="783.9,567.5 794.1,573.5 794.1,580.4 783.9,574.4" fill="#0c0c0c" stroke="#000" stroke-width="0.9" stroke-linejoin="round" /><polygon points="794.1,573.5 807,566 807,573 794.1,580.4" fill="#151515" stroke="#000" stroke-width="0.9" stroke-linejoin="round" /><polygon points="794.1,573.5 807,566 796.7,560.1 783.9,567.5" fill="#202020" stroke="#000" stroke-width="0.9" stroke-linejoin="round" /><path d="M788.5 572.7V591.5A7 4 0 0 0 802.4 591.5V572.7A7 4 0 0 0 788.5 572.7Z" fill="url(#cg)" stroke="#000" stroke-width="1.1" /><polygon points="762.5,579.9 772.7,585.8 772.7,592.7 762.5,586.8" fill="#0c0c0c" stroke="#000" stroke-width="0.9" stroke-linejoin="round" /><polygon points="772.7,585.8 785.6,578.4 785.6,585.3 772.7,592.7" fill="#151515" stroke="#000" stroke-width="0.9" stroke-linejoin="round" /><polygon points="772.7,585.8 785.6,578.4 775.3,572.5 762.5,579.9" fill="#202020" stroke="#000" stroke-width="0.9" stroke-linejoin="round" /><path d="M767.1 585.1V603.8A7 4 0 0 0 781 603.8V585.1A7 4 0 0 0 767.1 585.1Z" fill="url(#cg)" stroke="#000" stroke-width="1.1" /><polygon points="743.6,586.3 749.6,589.8 749.6,600.1 743.6,596.7" fill="#080808" stroke="#000" stroke-width="0.9" stroke-linejoin="round" /><polygon points="749.6,589.8 779.2,572.7 779.2,583.1 749.6,600.1" fill="#111" stroke="#000" stroke-width="0.9" stroke-linejoin="round" /><polygon points="749.6,589.8 779.2,572.7 773.2,569.3 743.6,586.3" fill="#1a1a1a" stroke="#000" stroke-width="0.9" stroke-linejoin="round" /><polygon points="751.8,596.4 777.4,581.6 777.4,579.6 751.8,594.4" fill="#e9e9e9" stroke="none" stroke-width="0" stroke-linejoin="round" /><polygon points="751.8,592.7 777.4,577.9 777.4,575.9 751.8,590.7" fill="#e9e9e9" stroke="none" stroke-width="0" stroke-linejoin="round" /><polygon points="738.9,595.9 751.3,603.1 751.3,611.5 738.9,604.3" fill="#0c0c0c" stroke="#000" stroke-width="0.9" stroke-linejoin="round" /><polygon points="751.3,603.1 768.5,593.2 768.5,601.6 751.3,611.5" fill="#151515" stroke="#000" stroke-width="0.9" stroke-linejoin="round" /><polygon points="751.3,603.1 768.5,593.2 756.1,586.1 738.9,595.9" fill="#202020" stroke="#000" stroke-width="0.9" stroke-linejoin="round" /><path d="M743.6 601.4V623.6A9.1 5.2 0 0 0 761.7 623.6V601.4A9.1 5.2 0 0 0 743.6 601.4Z" fill="url(#cg)" stroke="#000" stroke-width="1.1" /><polygon points="719.7,604.6 730,610.5 730,617.4 719.7,611.5" fill="#0c0c0c" stroke="#000" stroke-width="0.9" stroke-linejoin="round" /><polygon points="730,610.5 742.8,603.1 742.8,610 730,617.4" fill="#151515" stroke="#000" stroke-width="0.9" stroke-linejoin="round" /><polygon points="730,610.5 742.8,603.1 732.5,597.2 719.7,604.6" fill="#202020" stroke="#000" stroke-width="0.9" stroke-linejoin="round" /><path d="M724.3 609.8V628.5A7 4 0 0 0 738.2 628.5V609.8A7 4 0 0 0 724.3 609.8Z" fill="url(#cg)" stroke="#000" stroke-width="1.1" /><polygon points="700.9,611 706.9,614.5 706.9,624.8 700.9,621.4" fill="#080808" stroke="#000" stroke-width="0.9" stroke-linejoin="round" /><polygon points="706.9,614.5 736.4,597.4 736.4,607.8 706.9,624.8" fill="#111" stroke="#000" stroke-width="0.9" stroke-linejoin="round" /><polygon points="706.9,614.5 736.4,597.4 730.4,594 700.9,611" fill="#1a1a1a" stroke="#000" stroke-width="0.9" stroke-linejoin="round" /><polygon points="709,621.1 734.7,606.3 734.7,604.3 709,619.1" fill="#e9e9e9" stroke="none" stroke-width="0" stroke-linejoin="round" /><polygon points="709,617.4 734.7,602.6 734.7,600.6 709,615.4" fill="#e9e9e9" stroke="none" stroke-width="0" stroke-linejoin="round" /><polygon points="696.2,620.6 708.6,627.8 708.6,636.2 696.2,629" fill="#0c0c0c" stroke="#000" stroke-width="0.9" stroke-linejoin="round" /><polygon points="708.6,627.8 725.7,617.9 725.7,626.3 708.6,636.2" fill="#151515" stroke="#000" stroke-width="0.9" stroke-linejoin="round" /><polygon points="708.6,627.8 725.7,617.9 713.3,610.8 696.2,620.6" fill="#202020" stroke="#000" stroke-width="0.9" stroke-linejoin="round" /><path d="M700.8 626.1V648.3A9.1 5.2 0 0 0 718.9 648.3V626.1A9.1 5.2 0 0 0 700.8 626.1Z" fill="url(#cg)" stroke="#000" stroke-width="1.1" /><polygon points="676.9,629.3 687.2,635.2 687.2,642.1 676.9,636.2" fill="#0c0c0c" stroke="#000" stroke-width="0.9" stroke-linejoin="round" /><polygon points="687.2,635.2 700,627.8 700,634.7 687.2,642.1" fill="#151515" stroke="#000" stroke-width="0.9" stroke-linejoin="round" /><polygon points="687.2,635.2 700,627.8 689.7,621.9 676.9,629.3" fill="#202020" stroke="#000" stroke-width="0.9" stroke-linejoin="round" /><path d="M681.5 634.5V653.2A7 4 0 0 0 695.4 653.2V634.5A7 4 0 0 0 681.5 634.5Z" fill="url(#cg)" stroke="#000" stroke-width="1.1" /><polygon points="658.1,635.7 664.1,639.2 664.1,649.5 658.1,646.1" fill="#080808" stroke="#000" stroke-width="0.9" stroke-linejoin="round" /><polygon points="664.1,639.2 693.6,622.1 693.6,632.5 664.1,649.5" fill="#111" stroke="#000" stroke-width="0.9" stroke-linejoin="round" /><polygon points="664.1,639.2 693.6,622.1 687.6,618.7 658.1,635.7" fill="#1a1a1a" stroke="#000" stroke-width="0.9" stroke-linejoin="round" /><polygon points="666.2,645.8 691.9,631 691.9,629 666.2,643.9" fill="#e9e9e9" stroke="none" stroke-width="0" stroke-linejoin="round" /><polygon points="666.2,642.1 691.9,627.3 691.9,625.3 666.2,640.1" fill="#e9e9e9" stroke="none" stroke-width="0" stroke-linejoin="round" /><polygon points="653.4,645.3 665.8,652.5 665.8,660.9 653.4,653.7" fill="#0c0c0c" stroke="#000" stroke-width="0.9" stroke-linejoin="round" /><polygon points="665.8,652.5 682.9,642.6 682.9,651 665.8,660.9" fill="#151515" stroke="#000" stroke-width="0.9" stroke-linejoin="round" /><polygon points="665.8,652.5 682.9,642.6 670.5,635.5 653.4,645.3" fill="#202020" stroke="#000" stroke-width="0.9" stroke-linejoin="round" /><path d="M658 650.8V673A9.1 5.2 0 0 0 676.1 673V650.8A9.1 5.2 0 0 0 658 650.8Z" fill="url(#cg)" stroke="#000" stroke-width="1.1" /><polygon points="634.1,654 644.4,659.9 644.4,666.8 634.1,660.9" fill="#0c0c0c" stroke="#000" stroke-width="0.9" stroke-linejoin="round" /><polygon points="644.4,659.9 657.2,652.5 657.2,659.4 644.4,666.8" fill="#151515" stroke="#000" stroke-width="0.9" stroke-linejoin="round" /><polygon points="644.4,659.9 657.2,652.5 647,646.6 634.1,654" fill="#202020" stroke="#000" stroke-width="0.9" stroke-linejoin="round" /><path d="M638.7 659.2V677.9A7 4 0 0 0 652.6 677.9V659.2A7 4 0 0 0 638.7 659.2Z" fill="url(#cg)" stroke="#000" stroke-width="1.1" /><polygon points="615.3,660.4 621.3,663.9 621.3,674.2 615.3,670.8" fill="#080808" stroke="#000" stroke-width="0.9" stroke-linejoin="round" /><polygon points="621.3,663.9 650.8,646.8 650.8,657.2 621.3,674.2" fill="#111" stroke="#000" stroke-width="0.9" stroke-linejoin="round" /><polygon points="621.3,663.9 650.8,646.8 644.8,643.4 615.3,660.4" fill="#1a1a1a" stroke="#000" stroke-width="0.9" stroke-linejoin="round" /><polygon points="623.4,670.5 649.1,655.7 649.1,653.7 623.4,668.5" fill="#e9e9e9" stroke="none" stroke-width="0" stroke-linejoin="round" /><polygon points="623.4,666.8 649.1,652 649.1,650 623.4,664.8" fill="#e9e9e9" stroke="none" stroke-width="0" stroke-linejoin="round" /><polygon points="610.6,670 623,677.2 623,685.6 610.6,678.4" fill="#0c0c0c" stroke="#000" stroke-width="0.9" stroke-linejoin="round" /><polygon points="623,677.2 640.1,667.3 640.1,675.7 623,685.6" fill="#151515" stroke="#000" stroke-width="0.9" stroke-linejoin="round" /><polygon points="623,677.2 640.1,667.3 627.7,660.2 610.6,670" fill="#202020" stroke="#000" stroke-width="0.9" stroke-linejoin="round" /><path d="M615.2 675.5V700.2A9.1 5.2 0 0 0 633.4 700.2V675.5A9.1 5.2 0 0 0 615.2 675.5Z" fill="url(#cg)" stroke="#000" stroke-width="1.1" /><line x1="659.6" y1="599.2" x2="652.1" y2="619.4" stroke="#0c5a1e" stroke-width="3.2" stroke-linecap="round"/><line x1="659.6" y1="599.2" x2="668.2" y2="624.4" stroke="#0c5a1e" stroke-width="3.2" stroke-linecap="round"/><line x1="659.6" y1="599.2" x2="663.6" y2="641.4" stroke="#0c5a1e" stroke-width="3.2" stroke-linecap="round"/><line x1="659.6" y1="599.2" x2="669.2" y2="638.2" stroke="#0c5a1e" stroke-width="3.2" stroke-linecap="round"/><line x1="659.6" y1="599.2" x2="654.4" y2="615.3" stroke="#0c5a1e" stroke-width="3.2" stroke-linecap="round"/><line x1="659.6" y1="599.2" x2="664.7" y2="610.4" stroke="#0c5a1e" stroke-width="3.2" stroke-linecap="round"/><line x1="659.6" y1="599.2" x2="652.1" y2="619.4" stroke="#2fc24a" stroke-width="1.5" stroke-linecap="round"/><line x1="659.6" y1="599.2" x2="668.2" y2="624.4" stroke="#2fc24a" stroke-width="1.5" stroke-linecap="round"/><line x1="659.6" y1="599.2" x2="663.6" y2="641.4" stroke="#2fc24a" stroke-width="1.5" stroke-linecap="round"/><line x1="659.6" y1="599.2" x2="669.2" y2="638.2" stroke="#2fc24a" stroke-width="1.5" stroke-linecap="round"/><line x1="659.6" y1="599.2" x2="654.4" y2="615.3" stroke="#2fc24a" stroke-width="1.5" stroke-linecap="round"/><line x1="659.6" y1="599.2" x2="664.7" y2="610.4" stroke="#2fc24a" stroke-width="1.5" stroke-linecap="round"/><line x1="660" y1="583.1" x2="660" y2="410.6" stroke="#000" stroke-width="2.9" /><ellipse cx="660.3" cy="406" rx="3.400" ry="3.600" fill="#0a0a0a"/><rect x="657.4" y="407.6" width="5.200" height="7" rx="1.200" fill="#0a0a0a"/><rect x="659" y="411.2" width="2" height="1.400" fill="#ddd"/><g transform="translate(658.8 589.1) rotate(23)"><path d="M-11.500 -7.600H12A4.500 7.600 0 0 1 12 7.600H-11.500A7.600 7.600 0 0 1 -11.500 -7.600Z" fill="#f5a31c" stroke="#000" stroke-width="1.2"/><ellipse cx="12" cy="0" rx="4.500" ry="7.600" fill="#f8b53a" stroke="#000" stroke-width="1"/><ellipse cx="-1" cy="-7.800" rx="2.200" ry="1.300" fill="#111"/></g><line x1="659.6" y1="593.2" x2="659.6" y2="599.2" stroke="#111" stroke-width="2.5" /><line x1="895.7" y1="462.8" x2="888.2" y2="483.1" stroke="#0c5a1e" stroke-width="3.2" stroke-linecap="round"/><line x1="895.7" y1="462.8" x2="904.3" y2="488.1" stroke="#0c5a1e" stroke-width="3.2" stroke-linecap="round"/><line x1="895.7" y1="462.8" x2="899.8" y2="505" stroke="#0c5a1e" stroke-width="3.2" stroke-linecap="round"/><line x1="895.7" y1="462.8" x2="905.4" y2="501.8" stroke="#0c5a1e" stroke-width="3.2" stroke-linecap="round"/><line x1="895.7" y1="462.8" x2="890.6" y2="479" stroke="#0c5a1e" stroke-width="3.2" stroke-linecap="round"/><line x1="895.7" y1="462.8" x2="900.9" y2="474" stroke="#0c5a1e" stroke-width="3.2" stroke-linecap="round"/><line x1="895.7" y1="462.8" x2="888.2" y2="483.1" stroke="#2fc24a" stroke-width="1.5" stroke-linecap="round"/><line x1="895.7" y1="462.8" x2="904.3" y2="488.1" stroke="#2fc24a" stroke-width="1.5" stroke-linecap="round"/><line x1="895.7" y1="462.8" x2="899.8" y2="505" stroke="#2fc24a" stroke-width="1.5" stroke-linecap="round"/><line x1="895.7" y1="462.8" x2="905.4" y2="501.8" stroke="#2fc24a" stroke-width="1.5" stroke-linecap="round"/><line x1="895.7" y1="462.8" x2="890.6" y2="479" stroke="#2fc24a" stroke-width="1.5" stroke-linecap="round"/><line x1="895.7" y1="462.8" x2="900.9" y2="474" stroke="#2fc24a" stroke-width="1.5" stroke-linecap="round"/><line x1="896.1" y1="446.8" x2="896.1" y2="274.3" stroke="#000" stroke-width="2.9" /><ellipse cx="896.4" cy="269.7" rx="3.400" ry="3.600" fill="#0a0a0a"/><rect x="893.5" y="271.3" width="5.200" height="7" rx="1.200" fill="#0a0a0a"/><rect x="895.1" y="274.9" width="2" height="1.400" fill="#ddd"/><g transform="translate(894.9 452.8) rotate(23)"><path d="M-11.500 -7.600H12A4.500 7.600 0 0 1 12 7.600H-11.500A7.600 7.600 0 0 1 -11.500 -7.600Z" fill="#f5a31c" stroke="#000" stroke-width="1.2"/><ellipse cx="12" cy="0" rx="4.500" ry="7.600" fill="#f8b53a" stroke="#000" stroke-width="1"/><ellipse cx="-1" cy="-7.800" rx="2.200" ry="1.300" fill="#111"/></g><line x1="895.7" y1="456.8" x2="895.7" y2="462.8" stroke="#111" stroke-width="2.5" /><line x1="689.1" y1="698.8" x2="703.4" y2="676.2" stroke="#000" stroke-width="3.5" stroke-linecap="round"/><line x1="689.1" y1="698.8" x2="703.4" y2="676.2" stroke="#d2d2d2" stroke-width="1.5" stroke-linecap="round"/><line x1="701.5" y1="706" x2="703.4" y2="690.6" stroke="#000" stroke-width="3.5" stroke-linecap="round"/><line x1="701.5" y1="706" x2="703.4" y2="690.6" stroke="#d2d2d2" stroke-width="1.5" stroke-linecap="round"/><line x1="703.4" y1="676.2" x2="717.6" y2="682.3" stroke="#000" stroke-width="3.5" stroke-linecap="round"/><line x1="703.4" y1="676.2" x2="717.6" y2="682.3" stroke="#d2d2d2" stroke-width="1.5" stroke-linecap="round"/><line x1="703.4" y1="690.6" x2="730" y2="689.5" stroke="#000" stroke-width="3.5" stroke-linecap="round"/><line x1="703.4" y1="690.6" x2="730" y2="689.5" stroke="#d2d2d2" stroke-width="1.5" stroke-linecap="round"/><line x1="717.6" y1="682.3" x2="731.9" y2="659.8" stroke="#000" stroke-width="3.5" stroke-linecap="round"/><line x1="717.6" y1="682.3" x2="731.9" y2="659.8" stroke="#d2d2d2" stroke-width="1.5" stroke-linecap="round"/><line x1="730" y1="689.5" x2="731.9" y2="674.1" stroke="#000" stroke-width="3.5" stroke-linecap="round"/><line x1="730" y1="689.5" x2="731.9" y2="674.1" stroke="#d2d2d2" stroke-width="1.5" stroke-linecap="round"/><line x1="731.9" y1="659.8" x2="746.1" y2="665.9" stroke="#000" stroke-width="3.5" stroke-linecap="round"/><line x1="731.9" y1="659.8" x2="746.1" y2="665.9" stroke="#d2d2d2" stroke-width="1.5" stroke-linecap="round"/><line x1="731.9" y1="674.1" x2="758.5" y2="673" stroke="#000" stroke-width="3.5" stroke-linecap="round"/><line x1="731.9" y1="674.1" x2="758.5" y2="673" stroke="#d2d2d2" stroke-width="1.5" stroke-linecap="round"/><line x1="746.1" y1="665.9" x2="760.4" y2="643.3" stroke="#000" stroke-width="3.5" stroke-linecap="round"/><line x1="746.1" y1="665.9" x2="760.4" y2="643.3" stroke="#d2d2d2" stroke-width="1.5" stroke-linecap="round"/><line x1="758.5" y1="673" x2="760.4" y2="657.6" stroke="#000" stroke-width="3.5" stroke-linecap="round"/><line x1="758.5" y1="673" x2="760.4" y2="657.6" stroke="#d2d2d2" stroke-width="1.5" stroke-linecap="round"/><line x1="760.4" y1="643.3" x2="774.7" y2="649.4" stroke="#000" stroke-width="3.5" stroke-linecap="round"/><line x1="760.4" y1="643.3" x2="774.7" y2="649.4" stroke="#d2d2d2" stroke-width="1.5" stroke-linecap="round"/><line x1="760.4" y1="657.6" x2="787.1" y2="656.6" stroke="#000" stroke-width="3.5" stroke-linecap="round"/><line x1="760.4" y1="657.6" x2="787.1" y2="656.6" stroke="#d2d2d2" stroke-width="1.5" stroke-linecap="round"/><line x1="774.7" y1="649.4" x2="788.9" y2="626.8" stroke="#000" stroke-width="3.5" stroke-linecap="round"/><line x1="774.7" y1="649.4" x2="788.9" y2="626.8" stroke="#d2d2d2" stroke-width="1.5" stroke-linecap="round"/><line x1="787.1" y1="656.6" x2="788.9" y2="641.2" stroke="#000" stroke-width="3.5" stroke-linecap="round"/><line x1="787.1" y1="656.6" x2="788.9" y2="641.2" stroke="#d2d2d2" stroke-width="1.5" stroke-linecap="round"/><line x1="788.9" y1="626.8" x2="803.2" y2="632.9" stroke="#000" stroke-width="3.5" stroke-linecap="round"/><line x1="788.9" y1="626.8" x2="803.2" y2="632.9" stroke="#d2d2d2" stroke-width="1.5" stroke-linecap="round"/><line x1="788.9" y1="641.2" x2="815.6" y2="640.1" stroke="#000" stroke-width="3.5" stroke-linecap="round"/><line x1="788.9" y1="641.2" x2="815.6" y2="640.1" stroke="#d2d2d2" stroke-width="1.5" stroke-linecap="round"/><line x1="803.2" y1="632.9" x2="817.4" y2="610.4" stroke="#000" stroke-width="3.5" stroke-linecap="round"/><line x1="803.2" y1="632.9" x2="817.4" y2="610.4" stroke="#d2d2d2" stroke-width="1.5" stroke-linecap="round"/><line x1="815.6" y1="640.1" x2="817.4" y2="624.7" stroke="#000" stroke-width="3.5" stroke-linecap="round"/><line x1="815.6" y1="640.1" x2="817.4" y2="624.7" stroke="#d2d2d2" stroke-width="1.5" stroke-linecap="round"/><line x1="817.4" y1="610.4" x2="831.7" y2="616.5" stroke="#000" stroke-width="3.5" stroke-linecap="round"/><line x1="817.4" y1="610.4" x2="831.7" y2="616.5" stroke="#d2d2d2" stroke-width="1.5" stroke-linecap="round"/><line x1="817.4" y1="624.7" x2="844.1" y2="623.6" stroke="#000" stroke-width="3.5" stroke-linecap="round"/><line x1="817.4" y1="624.7" x2="844.1" y2="623.6" stroke="#d2d2d2" stroke-width="1.5" stroke-linecap="round"/><line x1="831.7" y1="616.5" x2="846" y2="593.9" stroke="#000" stroke-width="3.5" stroke-linecap="round"/><line x1="831.7" y1="616.5" x2="846" y2="593.9" stroke="#d2d2d2" stroke-width="1.5" stroke-linecap="round"/><line x1="844.1" y1="623.6" x2="846" y2="608.2" stroke="#000" stroke-width="3.5" stroke-linecap="round"/><line x1="844.1" y1="623.6" x2="846" y2="608.2" stroke="#d2d2d2" stroke-width="1.5" stroke-linecap="round"/><line x1="846" y1="593.9" x2="860.2" y2="600" stroke="#000" stroke-width="3.5" stroke-linecap="round"/><line x1="846" y1="593.9" x2="860.2" y2="600" stroke="#d2d2d2" stroke-width="1.5" stroke-linecap="round"/><line x1="846" y1="608.2" x2="872.6" y2="607.2" stroke="#000" stroke-width="3.5" stroke-linecap="round"/><line x1="846" y1="608.2" x2="872.6" y2="607.2" stroke="#d2d2d2" stroke-width="1.5" stroke-linecap="round"/><line x1="860.2" y1="600" x2="874.5" y2="577.4" stroke="#000" stroke-width="3.5" stroke-linecap="round"/><line x1="860.2" y1="600" x2="874.5" y2="577.4" stroke="#d2d2d2" stroke-width="1.5" stroke-linecap="round"/><line x1="872.6" y1="607.2" x2="874.5" y2="591.8" stroke="#000" stroke-width="3.5" stroke-linecap="round"/><line x1="872.6" y1="607.2" x2="874.5" y2="591.8" stroke="#d2d2d2" stroke-width="1.5" stroke-linecap="round"/><line x1="874.5" y1="577.4" x2="888.7" y2="583.5" stroke="#000" stroke-width="3.5" stroke-linecap="round"/><line x1="874.5" y1="577.4" x2="888.7" y2="583.5" stroke="#d2d2d2" stroke-width="1.5" stroke-linecap="round"/><line x1="874.5" y1="591.8" x2="901.2" y2="590.7" stroke="#000" stroke-width="3.5" stroke-linecap="round"/><line x1="874.5" y1="591.8" x2="901.2" y2="590.7" stroke="#d2d2d2" stroke-width="1.5" stroke-linecap="round"/><line x1="888.7" y1="583.5" x2="903" y2="561" stroke="#000" stroke-width="3.5" stroke-linecap="round"/><line x1="888.7" y1="583.5" x2="903" y2="561" stroke="#d2d2d2" stroke-width="1.5" stroke-linecap="round"/><line x1="901.2" y1="590.7" x2="903" y2="575.3" stroke="#000" stroke-width="3.5" stroke-linecap="round"/><line x1="901.2" y1="590.7" x2="903" y2="575.3" stroke="#d2d2d2" stroke-width="1.5" stroke-linecap="round"/><line x1="903" y1="561" x2="917.3" y2="567.1" stroke="#000" stroke-width="3.5" stroke-linecap="round"/><line x1="903" y1="561" x2="917.3" y2="567.1" stroke="#d2d2d2" stroke-width="1.5" stroke-linecap="round"/><line x1="903" y1="575.3" x2="929.7" y2="574.2" stroke="#000" stroke-width="3.5" stroke-linecap="round"/><line x1="903" y1="575.3" x2="929.7" y2="574.2" stroke="#d2d2d2" stroke-width="1.5" stroke-linecap="round"/><line x1="917.3" y1="567.1" x2="931.5" y2="544.5" stroke="#000" stroke-width="3.5" stroke-linecap="round"/><line x1="917.3" y1="567.1" x2="931.5" y2="544.5" stroke="#d2d2d2" stroke-width="1.5" stroke-linecap="round"/><line x1="929.7" y1="574.2" x2="931.5" y2="558.8" stroke="#000" stroke-width="3.5" stroke-linecap="round"/><line x1="929.7" y1="574.2" x2="931.5" y2="558.8" stroke="#d2d2d2" stroke-width="1.5" stroke-linecap="round"/><line x1="931.5" y1="544.5" x2="945.8" y2="550.6" stroke="#000" stroke-width="3.5" stroke-linecap="round"/><line x1="931.5" y1="544.5" x2="945.8" y2="550.6" stroke="#d2d2d2" stroke-width="1.5" stroke-linecap="round"/><line x1="931.5" y1="558.8" x2="958.2" y2="557.8" stroke="#000" stroke-width="3.5" stroke-linecap="round"/><line x1="931.5" y1="558.8" x2="958.2" y2="557.8" stroke="#d2d2d2" stroke-width="1.5" stroke-linecap="round"/><line x1="945.8" y1="550.6" x2="960.1" y2="528" stroke="#000" stroke-width="3.5" stroke-linecap="round"/><line x1="945.8" y1="550.6" x2="960.1" y2="528" stroke="#d2d2d2" stroke-width="1.5" stroke-linecap="round"/><line x1="958.2" y1="557.8" x2="960.1" y2="542.4" stroke="#000" stroke-width="3.5" stroke-linecap="round"/><line x1="958.2" y1="557.8" x2="960.1" y2="542.4" stroke="#d2d2d2" stroke-width="1.5" stroke-linecap="round"/><line x1="960.1" y1="528" x2="974.3" y2="534.1" stroke="#000" stroke-width="3.5" stroke-linecap="round"/><line x1="960.1" y1="528" x2="974.3" y2="534.1" stroke="#d2d2d2" stroke-width="1.5" stroke-linecap="round"/><line x1="960.1" y1="542.4" x2="986.7" y2="541.3" stroke="#000" stroke-width="3.5" stroke-linecap="round"/><line x1="960.1" y1="542.4" x2="986.7" y2="541.3" stroke="#d2d2d2" stroke-width="1.5" stroke-linecap="round"/><line x1="974.3" y1="534.1" x2="988.6" y2="511.6" stroke="#000" stroke-width="3.5" stroke-linecap="round"/><line x1="974.3" y1="534.1" x2="988.6" y2="511.6" stroke="#d2d2d2" stroke-width="1.5" stroke-linecap="round"/><line x1="986.7" y1="541.3" x2="988.6" y2="525.9" stroke="#000" stroke-width="3.5" stroke-linecap="round"/><line x1="986.7" y1="541.3" x2="988.6" y2="525.9" stroke="#d2d2d2" stroke-width="1.5" stroke-linecap="round"/><line x1="988.6" y1="511.6" x2="1002.8" y2="517.7" stroke="#000" stroke-width="3.5" stroke-linecap="round"/><line x1="988.6" y1="511.6" x2="1002.8" y2="517.7" stroke="#d2d2d2" stroke-width="1.5" stroke-linecap="round"/><line x1="988.6" y1="525.9" x2="1015.2" y2="524.8" stroke="#000" stroke-width="3.5" stroke-linecap="round"/><line x1="988.6" y1="525.9" x2="1015.2" y2="524.8" stroke="#d2d2d2" stroke-width="1.5" stroke-linecap="round"/><line x1="1002.8" y1="517.7" x2="1017.1" y2="495.1" stroke="#000" stroke-width="3.5" stroke-linecap="round"/><line x1="1002.8" y1="517.7" x2="1017.1" y2="495.1" stroke="#d2d2d2" stroke-width="1.5" stroke-linecap="round"/><line x1="1015.2" y1="524.8" x2="1017.1" y2="509.4" stroke="#000" stroke-width="3.5" stroke-linecap="round"/><line x1="1015.2" y1="524.8" x2="1017.1" y2="509.4" stroke="#d2d2d2" stroke-width="1.5" stroke-linecap="round"/><line x1="1017.1" y1="495.1" x2="1031.4" y2="501.2" stroke="#000" stroke-width="3.5" stroke-linecap="round"/><line x1="1017.1" y1="495.1" x2="1031.4" y2="501.2" stroke="#d2d2d2" stroke-width="1.5" stroke-linecap="round"/><line x1="1017.1" y1="509.4" x2="1043.8" y2="508.4" stroke="#000" stroke-width="3.5" stroke-linecap="round"/><line x1="1017.1" y1="509.4" x2="1043.8" y2="508.4" stroke="#d2d2d2" stroke-width="1.5" stroke-linecap="round"/><line x1="689.1" y1="698.8" x2="1031.4" y2="501.2" stroke="#000" stroke-width="5.4" stroke-linecap="round"/><line x1="689.1" y1="698.8" x2="1031.4" y2="501.2" stroke="#dadada" stroke-width="2.8" stroke-linecap="round"/><line x1="701.5" y1="706" x2="1043.8" y2="508.4" stroke="#000" stroke-width="5.4" stroke-linecap="round"/><line x1="701.5" y1="706" x2="1043.8" y2="508.4" stroke="#dadada" stroke-width="2.8" stroke-linecap="round"/><line x1="689.1" y1="684.5" x2="1031.4" y2="486.9" stroke="#000" stroke-width="5.4" stroke-linecap="round"/><line x1="689.1" y1="684.5" x2="1031.4" y2="486.9" stroke="#dadada" stroke-width="2.8" stroke-linecap="round"/><line x1="701.5" y1="691.6" x2="703.4" y2="676.2" stroke="#000" stroke-width="3.5" stroke-linecap="round"/><line x1="701.5" y1="691.6" x2="703.4" y2="676.2" stroke="#d2d2d2" stroke-width="1.5" stroke-linecap="round"/><line x1="701.5" y1="706" x2="715.8" y2="683.4" stroke="#000" stroke-width="3.5" stroke-linecap="round"/><line x1="701.5" y1="706" x2="715.8" y2="683.4" stroke="#d2d2d2" stroke-width="1.5" stroke-linecap="round"/><line x1="703.4" y1="676.2" x2="730" y2="675.2" stroke="#000" stroke-width="3.5" stroke-linecap="round"/><line x1="703.4" y1="676.2" x2="730" y2="675.2" stroke="#d2d2d2" stroke-width="1.5" stroke-linecap="round"/><line x1="715.8" y1="683.4" x2="730" y2="689.5" stroke="#000" stroke-width="3.5" stroke-linecap="round"/><line x1="715.8" y1="683.4" x2="730" y2="689.5" stroke="#d2d2d2" stroke-width="1.5" stroke-linecap="round"/><line x1="730" y1="675.2" x2="731.9" y2="659.8" stroke="#000" stroke-width="3.5" stroke-linecap="round"/><line x1="730" y1="675.2" x2="731.9" y2="659.8" stroke="#d2d2d2" stroke-width="1.5" stroke-linecap="round"/><line x1="730" y1="689.5" x2="744.3" y2="666.9" stroke="#000" stroke-width="3.5" stroke-linecap="round"/><line x1="730" y1="689.5" x2="744.3" y2="666.9" stroke="#d2d2d2" stroke-width="1.5" stroke-linecap="round"/><line x1="731.9" y1="659.8" x2="758.5" y2="658.7" stroke="#000" stroke-width="3.5" stroke-linecap="round"/><line x1="731.9" y1="659.8" x2="758.5" y2="658.7" stroke="#d2d2d2" stroke-width="1.5" stroke-linecap="round"/><line x1="744.3" y1="666.9" x2="758.5" y2="673" stroke="#000" stroke-width="3.5" stroke-linecap="round"/><line x1="744.3" y1="666.9" x2="758.5" y2="673" stroke="#d2d2d2" stroke-width="1.5" stroke-linecap="round"/><line x1="758.5" y1="658.7" x2="760.4" y2="643.3" stroke="#000" stroke-width="3.5" stroke-linecap="round"/><line x1="758.5" y1="658.7" x2="760.4" y2="643.3" stroke="#d2d2d2" stroke-width="1.5" stroke-linecap="round"/><line x1="758.5" y1="673" x2="772.8" y2="650.5" stroke="#000" stroke-width="3.5" stroke-linecap="round"/><line x1="758.5" y1="673" x2="772.8" y2="650.5" stroke="#d2d2d2" stroke-width="1.5" stroke-linecap="round"/><line x1="760.4" y1="643.3" x2="787.1" y2="642.2" stroke="#000" stroke-width="3.5" stroke-linecap="round"/><line x1="760.4" y1="643.3" x2="787.1" y2="642.2" stroke="#d2d2d2" stroke-width="1.5" stroke-linecap="round"/><line x1="772.8" y1="650.5" x2="787.1" y2="656.6" stroke="#000" stroke-width="3.5" stroke-linecap="round"/><line x1="772.8" y1="650.5" x2="787.1" y2="656.6" stroke="#d2d2d2" stroke-width="1.5" stroke-linecap="round"/><line x1="787.1" y1="642.2" x2="788.9" y2="626.8" stroke="#000" stroke-width="3.5" stroke-linecap="round"/><line x1="787.1" y1="642.2" x2="788.9" y2="626.8" stroke="#d2d2d2" stroke-width="1.5" stroke-linecap="round"/><line x1="787.1" y1="656.6" x2="801.3" y2="634" stroke="#000" stroke-width="3.5" stroke-linecap="round"/><line x1="787.1" y1="656.6" x2="801.3" y2="634" stroke="#d2d2d2" stroke-width="1.5" stroke-linecap="round"/><line x1="788.9" y1="626.8" x2="815.6" y2="625.8" stroke="#000" stroke-width="3.5" stroke-linecap="round"/><line x1="788.9" y1="626.8" x2="815.6" y2="625.8" stroke="#d2d2d2" stroke-width="1.5" stroke-linecap="round"/><line x1="801.3" y1="634" x2="815.6" y2="640.1" stroke="#000" stroke-width="3.5" stroke-linecap="round"/><line x1="801.3" y1="634" x2="815.6" y2="640.1" stroke="#d2d2d2" stroke-width="1.5" stroke-linecap="round"/><line x1="815.6" y1="625.8" x2="817.4" y2="610.4" stroke="#000" stroke-width="3.5" stroke-linecap="round"/><line x1="815.6" y1="625.8" x2="817.4" y2="610.4" stroke="#d2d2d2" stroke-width="1.5" stroke-linecap="round"/><line x1="815.6" y1="640.1" x2="829.9" y2="617.5" stroke="#000" stroke-width="3.5" stroke-linecap="round"/><line x1="815.6" y1="640.1" x2="829.9" y2="617.5" stroke="#d2d2d2" stroke-width="1.5" stroke-linecap="round"/><line x1="817.4" y1="610.4" x2="844.1" y2="609.3" stroke="#000" stroke-width="3.5" stroke-linecap="round"/><line x1="817.4" y1="610.4" x2="844.1" y2="609.3" stroke="#d2d2d2" stroke-width="1.5" stroke-linecap="round"/><line x1="829.9" y1="617.5" x2="844.1" y2="623.6" stroke="#000" stroke-width="3.5" stroke-linecap="round"/><line x1="829.9" y1="617.5" x2="844.1" y2="623.6" stroke="#d2d2d2" stroke-width="1.5" stroke-linecap="round"/><line x1="844.1" y1="609.3" x2="846" y2="593.9" stroke="#000" stroke-width="3.5" stroke-linecap="round"/><line x1="844.1" y1="609.3" x2="846" y2="593.9" stroke="#d2d2d2" stroke-width="1.5" stroke-linecap="round"/><line x1="844.1" y1="623.6" x2="858.4" y2="601.1" stroke="#000" stroke-width="3.5" stroke-linecap="round"/><line x1="844.1" y1="623.6" x2="858.4" y2="601.1" stroke="#d2d2d2" stroke-width="1.5" stroke-linecap="round"/><line x1="846" y1="593.9" x2="872.6" y2="592.8" stroke="#000" stroke-width="3.5" stroke-linecap="round"/><line x1="846" y1="593.9" x2="872.6" y2="592.8" stroke="#d2d2d2" stroke-width="1.5" stroke-linecap="round"/><line x1="858.4" y1="601.1" x2="872.6" y2="607.2" stroke="#000" stroke-width="3.5" stroke-linecap="round"/><line x1="858.4" y1="601.1" x2="872.6" y2="607.2" stroke="#d2d2d2" stroke-width="1.5" stroke-linecap="round"/><line x1="872.6" y1="592.8" x2="874.5" y2="577.4" stroke="#000" stroke-width="3.5" stroke-linecap="round"/><line x1="872.6" y1="592.8" x2="874.5" y2="577.4" stroke="#d2d2d2" stroke-width="1.5" stroke-linecap="round"/><line x1="872.6" y1="607.2" x2="886.9" y2="584.6" stroke="#000" stroke-width="3.5" stroke-linecap="round"/><line x1="872.6" y1="607.2" x2="886.9" y2="584.6" stroke="#d2d2d2" stroke-width="1.5" stroke-linecap="round"/><line x1="874.5" y1="577.4" x2="901.2" y2="576.4" stroke="#000" stroke-width="3.5" stroke-linecap="round"/><line x1="874.5" y1="577.4" x2="901.2" y2="576.4" stroke="#d2d2d2" stroke-width="1.5" stroke-linecap="round"/><line x1="886.9" y1="584.6" x2="901.2" y2="590.7" stroke="#000" stroke-width="3.5" stroke-linecap="round"/><line x1="886.9" y1="584.6" x2="901.2" y2="590.7" stroke="#d2d2d2" stroke-width="1.5" stroke-linecap="round"/><line x1="901.2" y1="576.4" x2="903" y2="561" stroke="#000" stroke-width="3.5" stroke-linecap="round"/><line x1="901.2" y1="576.4" x2="903" y2="561" stroke="#d2d2d2" stroke-width="1.5" stroke-linecap="round"/><line x1="901.2" y1="590.7" x2="915.4" y2="568.1" stroke="#000" stroke-width="3.5" stroke-linecap="round"/><line x1="901.2" y1="590.7" x2="915.4" y2="568.1" stroke="#d2d2d2" stroke-width="1.5" stroke-linecap="round"/><line x1="903" y1="561" x2="929.7" y2="559.9" stroke="#000" stroke-width="3.5" stroke-linecap="round"/><line x1="903" y1="561" x2="929.7" y2="559.9" stroke="#d2d2d2" stroke-width="1.5" stroke-linecap="round"/><line x1="915.4" y1="568.1" x2="929.7" y2="574.2" stroke="#000" stroke-width="3.5" stroke-linecap="round"/><line x1="915.4" y1="568.1" x2="929.7" y2="574.2" stroke="#d2d2d2" stroke-width="1.5" stroke-linecap="round"/><line x1="929.7" y1="559.9" x2="931.5" y2="544.5" stroke="#000" stroke-width="3.5" stroke-linecap="round"/><line x1="929.7" y1="559.9" x2="931.5" y2="544.5" stroke="#d2d2d2" stroke-width="1.5" stroke-linecap="round"/><line x1="929.7" y1="574.2" x2="943.9" y2="551.7" stroke="#000" stroke-width="3.5" stroke-linecap="round"/><line x1="929.7" y1="574.2" x2="943.9" y2="551.7" stroke="#d2d2d2" stroke-width="1.5" stroke-linecap="round"/><line x1="931.5" y1="544.5" x2="958.2" y2="543.4" stroke="#000" stroke-width="3.5" stroke-linecap="round"/><line x1="931.5" y1="544.5" x2="958.2" y2="543.4" stroke="#d2d2d2" stroke-width="1.5" stroke-linecap="round"/><line x1="943.9" y1="551.7" x2="958.2" y2="557.8" stroke="#000" stroke-width="3.5" stroke-linecap="round"/><line x1="943.9" y1="551.7" x2="958.2" y2="557.8" stroke="#d2d2d2" stroke-width="1.5" stroke-linecap="round"/><line x1="958.2" y1="543.4" x2="960.1" y2="528" stroke="#000" stroke-width="3.5" stroke-linecap="round"/><line x1="958.2" y1="543.4" x2="960.1" y2="528" stroke="#d2d2d2" stroke-width="1.5" stroke-linecap="round"/><line x1="958.2" y1="557.8" x2="972.5" y2="535.2" stroke="#000" stroke-width="3.5" stroke-linecap="round"/><line x1="958.2" y1="557.8" x2="972.5" y2="535.2" stroke="#d2d2d2" stroke-width="1.5" stroke-linecap="round"/><line x1="960.1" y1="528" x2="986.7" y2="527" stroke="#000" stroke-width="3.5" stroke-linecap="round"/><line x1="960.1" y1="528" x2="986.7" y2="527" stroke="#d2d2d2" stroke-width="1.5" stroke-linecap="round"/><line x1="972.5" y1="535.2" x2="986.7" y2="541.3" stroke="#000" stroke-width="3.5" stroke-linecap="round"/><line x1="972.5" y1="535.2" x2="986.7" y2="541.3" stroke="#d2d2d2" stroke-width="1.5" stroke-linecap="round"/><line x1="986.7" y1="527" x2="988.6" y2="511.6" stroke="#000" stroke-width="3.5" stroke-linecap="round"/><line x1="986.7" y1="527" x2="988.6" y2="511.6" stroke="#d2d2d2" stroke-width="1.5" stroke-linecap="round"/><line x1="986.7" y1="541.3" x2="1001" y2="518.7" stroke="#000" stroke-width="3.5" stroke-linecap="round"/><line x1="986.7" y1="541.3" x2="1001" y2="518.7" stroke="#d2d2d2" stroke-width="1.5" stroke-linecap="round"/><line x1="988.6" y1="511.6" x2="1015.2" y2="510.5" stroke="#000" stroke-width="3.5" stroke-linecap="round"/><line x1="988.6" y1="511.6" x2="1015.2" y2="510.5" stroke="#d2d2d2" stroke-width="1.5" stroke-linecap="round"/><line x1="1001" y1="518.7" x2="1015.2" y2="524.8" stroke="#000" stroke-width="3.5" stroke-linecap="round"/><line x1="1001" y1="518.7" x2="1015.2" y2="524.8" stroke="#d2d2d2" stroke-width="1.5" stroke-linecap="round"/><line x1="1015.2" y1="510.5" x2="1017.1" y2="495.1" stroke="#000" stroke-width="3.5" stroke-linecap="round"/><line x1="1015.2" y1="510.5" x2="1017.1" y2="495.1" stroke="#d2d2d2" stroke-width="1.5" stroke-linecap="round"/><line x1="1015.2" y1="524.8" x2="1029.5" y2="502.3" stroke="#000" stroke-width="3.5" stroke-linecap="round"/><line x1="1015.2" y1="524.8" x2="1029.5" y2="502.3" stroke="#d2d2d2" stroke-width="1.5" stroke-linecap="round"/><line x1="1017.1" y1="495.1" x2="1043.8" y2="494" stroke="#000" stroke-width="3.5" stroke-linecap="round"/><line x1="1017.1" y1="495.1" x2="1043.8" y2="494" stroke="#d2d2d2" stroke-width="1.5" stroke-linecap="round"/><line x1="1029.5" y1="502.3" x2="1043.8" y2="508.4" stroke="#000" stroke-width="3.5" stroke-linecap="round"/><line x1="1029.5" y1="502.3" x2="1043.8" y2="508.4" stroke="#d2d2d2" stroke-width="1.5" stroke-linecap="round"/><line x1="689.1" y1="684.5" x2="701.5" y2="691.6" stroke="#000" stroke-width="3.5" stroke-linecap="round"/><line x1="689.1" y1="684.5" x2="701.5" y2="691.6" stroke="#d2d2d2" stroke-width="1.5" stroke-linecap="round"/><line x1="701.5" y1="691.6" x2="701.5" y2="706" stroke="#000" stroke-width="3.5" stroke-linecap="round"/><line x1="701.5" y1="691.6" x2="701.5" y2="706" stroke="#d2d2d2" stroke-width="1.5" stroke-linecap="round"/><line x1="689.1" y1="684.5" x2="689.1" y2="698.8" stroke="#000" stroke-width="3.5" stroke-linecap="round"/><line x1="689.1" y1="684.5" x2="689.1" y2="698.8" stroke="#d2d2d2" stroke-width="1.5" stroke-linecap="round"/><line x1="689.1" y1="698.8" x2="701.5" y2="706" stroke="#000" stroke-width="3.5" stroke-linecap="round"/><line x1="689.1" y1="698.8" x2="701.5" y2="706" stroke="#d2d2d2" stroke-width="1.5" stroke-linecap="round"/><line x1="774.7" y1="635.1" x2="787.1" y2="642.2" stroke="#000" stroke-width="3.5" stroke-linecap="round"/><line x1="774.7" y1="635.1" x2="787.1" y2="642.2" stroke="#d2d2d2" stroke-width="1.5" stroke-linecap="round"/><line x1="787.1" y1="642.2" x2="787.1" y2="656.6" stroke="#000" stroke-width="3.5" stroke-linecap="round"/><line x1="787.1" y1="642.2" x2="787.1" y2="656.6" stroke="#d2d2d2" stroke-width="1.5" stroke-linecap="round"/><line x1="774.7" y1="635.1" x2="774.7" y2="649.4" stroke="#000" stroke-width="3.5" stroke-linecap="round"/><line x1="774.7" y1="635.1" x2="774.7" y2="649.4" stroke="#d2d2d2" stroke-width="1.5" stroke-linecap="round"/><line x1="774.7" y1="649.4" x2="787.1" y2="656.6" stroke="#000" stroke-width="3.5" stroke-linecap="round"/><line x1="774.7" y1="649.4" x2="787.1" y2="656.6" stroke="#d2d2d2" stroke-width="1.5" stroke-linecap="round"/><line x1="860.2" y1="585.7" x2="872.6" y2="592.8" stroke="#000" stroke-width="3.5" stroke-linecap="round"/><line x1="860.2" y1="585.7" x2="872.6" y2="592.8" stroke="#d2d2d2" stroke-width="1.5" stroke-linecap="round"/><line x1="872.6" y1="592.8" x2="872.6" y2="607.2" stroke="#000" stroke-width="3.5" stroke-linecap="round"/><line x1="872.6" y1="592.8" x2="872.6" y2="607.2" stroke="#d2d2d2" stroke-width="1.5" stroke-linecap="round"/><line x1="860.2" y1="585.7" x2="860.2" y2="600" stroke="#000" stroke-width="3.5" stroke-linecap="round"/><line x1="860.2" y1="585.7" x2="860.2" y2="600" stroke="#d2d2d2" stroke-width="1.5" stroke-linecap="round"/><line x1="860.2" y1="600" x2="872.6" y2="607.2" stroke="#000" stroke-width="3.5" stroke-linecap="round"/><line x1="860.2" y1="600" x2="872.6" y2="607.2" stroke="#d2d2d2" stroke-width="1.5" stroke-linecap="round"/><line x1="945.8" y1="536.3" x2="958.2" y2="543.4" stroke="#000" stroke-width="3.5" stroke-linecap="round"/><line x1="945.8" y1="536.3" x2="958.2" y2="543.4" stroke="#d2d2d2" stroke-width="1.5" stroke-linecap="round"/><line x1="958.2" y1="543.4" x2="958.2" y2="557.8" stroke="#000" stroke-width="3.5" stroke-linecap="round"/><line x1="958.2" y1="543.4" x2="958.2" y2="557.8" stroke="#d2d2d2" stroke-width="1.5" stroke-linecap="round"/><line x1="945.8" y1="536.3" x2="945.8" y2="550.6" stroke="#000" stroke-width="3.5" stroke-linecap="round"/><line x1="945.8" y1="536.3" x2="945.8" y2="550.6" stroke="#d2d2d2" stroke-width="1.5" stroke-linecap="round"/><line x1="945.8" y1="550.6" x2="958.2" y2="557.8" stroke="#000" stroke-width="3.5" stroke-linecap="round"/><line x1="945.8" y1="550.6" x2="958.2" y2="557.8" stroke="#d2d2d2" stroke-width="1.5" stroke-linecap="round"/><line x1="1031.4" y1="486.9" x2="1043.8" y2="494" stroke="#000" stroke-width="3.5" stroke-linecap="round"/><line x1="1031.4" y1="486.9" x2="1043.8" y2="494" stroke="#d2d2d2" stroke-width="1.5" stroke-linecap="round"/><line x1="1043.8" y1="494" x2="1043.8" y2="508.4" stroke="#000" stroke-width="3.5" stroke-linecap="round"/><line x1="1043.8" y1="494" x2="1043.8" y2="508.4" stroke="#d2d2d2" stroke-width="1.5" stroke-linecap="round"/><line x1="1031.4" y1="486.9" x2="1031.4" y2="501.2" stroke="#000" stroke-width="3.5" stroke-linecap="round"/><line x1="1031.4" y1="486.9" x2="1031.4" y2="501.2" stroke="#d2d2d2" stroke-width="1.5" stroke-linecap="round"/><line x1="1031.4" y1="501.2" x2="1043.8" y2="508.4" stroke="#000" stroke-width="3.5" stroke-linecap="round"/><line x1="1031.4" y1="501.2" x2="1043.8" y2="508.4" stroke="#d2d2d2" stroke-width="1.5" stroke-linecap="round"/><line x1="701.5" y1="691.6" x2="1043.8" y2="494" stroke="#000" stroke-width="5.4" stroke-linecap="round"/><line x1="701.5" y1="691.6" x2="1043.8" y2="494" stroke="#dadada" stroke-width="2.8" stroke-linecap="round"/><polygon points="1024.9,510.3 1030.9,513.8 1030.9,524.2 1024.9,520.7" fill="#080808" stroke="#000" stroke-width="0.9" stroke-linejoin="round" /><polygon points="1030.9,513.8 1060.4,496.8 1060.4,507.1 1030.9,524.2" fill="#111" stroke="#000" stroke-width="0.9" stroke-linejoin="round" /><polygon points="1030.9,513.8 1060.4,496.8 1054.5,493.3 1024.9,510.3" fill="#1a1a1a" stroke="#000" stroke-width="0.9" stroke-linejoin="round" /><polygon points="1033.1,520.5 1058.7,505.7 1058.7,503.7 1033.1,518.5" fill="#e9e9e9" stroke="none" stroke-width="0" stroke-linejoin="round" /><polygon points="1033.1,516.8 1058.7,501.9 1058.7,500 1033.1,514.8" fill="#e9e9e9" stroke="none" stroke-width="0" stroke-linejoin="round" /><polygon points="1020.2,520 1032.6,527.1 1032.6,535.5 1020.2,528.4" fill="#0c0c0c" stroke="#000" stroke-width="0.9" stroke-linejoin="round" /><polygon points="1032.6,527.1 1049.7,517.3 1049.7,525.7 1032.6,535.5" fill="#151515" stroke="#000" stroke-width="0.9" stroke-linejoin="round" /><polygon points="1032.6,527.1 1049.7,517.3 1037.3,510.1 1020.2,520" fill="#202020" stroke="#000" stroke-width="0.9" stroke-linejoin="round" /><path d="M1024.8 525.4V547.6A9.1 5.2 0 0 0 1043 547.6V525.4A9.1 5.2 0 0 0 1024.8 525.4Z" fill="url(#cg)" stroke="#000" stroke-width="1.1" /><polygon points="1001,528.6 1011.2,534.6 1011.2,541.5 1001,535.5" fill="#0c0c0c" stroke="#000" stroke-width="0.9" stroke-linejoin="round" /><polygon points="1011.2,534.6 1024.1,527.1 1024.1,534.1 1011.2,541.5" fill="#151515" stroke="#000" stroke-width="0.9" stroke-linejoin="round" /><polygon points="1011.2,534.6 1024.1,527.1 1013.8,521.2 1001,528.6" fill="#202020" stroke="#000" stroke-width="0.9" stroke-linejoin="round" /><path d="M1005.6 533.8V552.6A7 4 0 0 0 1019.5 552.6V533.8A7 4 0 0 0 1005.6 533.8Z" fill="url(#cg)" stroke="#000" stroke-width="1.1" /><polygon points="982.2,535 988.1,538.5 988.1,548.9 982.2,545.4" fill="#080808" stroke="#000" stroke-width="0.9" stroke-linejoin="round" /><polygon points="988.1,538.5 1017.7,521.5 1017.7,531.8 988.1,548.9" fill="#111" stroke="#000" stroke-width="0.9" stroke-linejoin="round" /><polygon points="988.1,538.5 1017.7,521.5 1011.7,518 982.2,535" fill="#1a1a1a" stroke="#000" stroke-width="0.9" stroke-linejoin="round" /><polygon points="990.3,545.2 1016,530.4 1016,528.4 990.3,543.2" fill="#e9e9e9" stroke="none" stroke-width="0" stroke-linejoin="round" /><polygon points="990.3,541.5 1016,526.6 1016,524.7 990.3,539.5" fill="#e9e9e9" stroke="none" stroke-width="0" stroke-linejoin="round" /><polygon points="977.4,544.7 989.9,551.8 989.9,560.2 977.4,553.1" fill="#0c0c0c" stroke="#000" stroke-width="0.9" stroke-linejoin="round" /><polygon points="989.9,551.8 1007,542 1007,550.4 989.9,560.2" fill="#151515" stroke="#000" stroke-width="0.9" stroke-linejoin="round" /><polygon points="989.9,551.8 1007,542 994.6,534.8 977.4,544.7" fill="#202020" stroke="#000" stroke-width="0.9" stroke-linejoin="round" /><path d="M982.1 550.1V572.3A9.1 5.2 0 0 0 1000.2 572.3V550.1A9.1 5.2 0 0 0 982.1 550.1Z" fill="url(#cg)" stroke="#000" stroke-width="1.1" /><polygon points="958.2,553.3 968.5,559.3 968.5,566.2 958.2,560.2" fill="#0c0c0c" stroke="#000" stroke-width="0.9" stroke-linejoin="round" /><polygon points="968.5,559.3 981.3,551.8 981.3,558.8 968.5,566.2" fill="#151515" stroke="#000" stroke-width="0.9" stroke-linejoin="round" /><polygon points="968.5,559.3 981.3,551.8 971,545.9 958.2,553.3" fill="#202020" stroke="#000" stroke-width="0.9" stroke-linejoin="round" /><path d="M962.8 558.5V577.3A7 4 0 0 0 976.7 577.3V558.5A7 4 0 0 0 962.8 558.5Z" fill="url(#cg)" stroke="#000" stroke-width="1.1" /><polygon points="939.4,559.7 945.4,563.2 945.4,573.6 939.4,570.1" fill="#080808" stroke="#000" stroke-width="0.9" stroke-linejoin="round" /><polygon points="945.4,563.2 974.9,546.2 974.9,556.5 945.4,573.6" fill="#111" stroke="#000" stroke-width="0.9" stroke-linejoin="round" /><polygon points="945.4,563.2 974.9,546.2 968.9,542.7 939.4,559.7" fill="#1a1a1a" stroke="#000" stroke-width="0.9" stroke-linejoin="round" /><polygon points="947.5,569.9 973.2,555.1 973.2,553.1 947.5,567.9" fill="#e9e9e9" stroke="none" stroke-width="0" stroke-linejoin="round" /><polygon points="947.5,566.2 973.2,551.3 973.2,549.4 947.5,564.2" fill="#e9e9e9" stroke="none" stroke-width="0" stroke-linejoin="round" /><polygon points="934.7,569.4 947.1,576.5 947.1,584.9 934.7,577.8" fill="#0c0c0c" stroke="#000" stroke-width="0.9" stroke-linejoin="round" /><polygon points="947.1,576.5 964.2,566.7 964.2,575.1 947.1,584.9" fill="#151515" stroke="#000" stroke-width="0.9" stroke-linejoin="round" /><polygon points="947.1,576.5 964.2,566.7 951.8,559.5 934.7,569.4" fill="#202020" stroke="#000" stroke-width="0.9" stroke-linejoin="round" /><path d="M939.3 574.8V597A9.1 5.2 0 0 0 957.4 597V574.8A9.1 5.2 0 0 0 939.3 574.8Z" fill="url(#cg)" stroke="#000" stroke-width="1.1" /><polygon points="915.4,578 925.7,584 925.7,590.9 915.4,584.9" fill="#0c0c0c" stroke="#000" stroke-width="0.9" stroke-linejoin="round" /><polygon points="925.7,584 938.5,576.5 938.5,583.5 925.7,590.9" fill="#151515" stroke="#000" stroke-width="0.9" stroke-linejoin="round" /><polygon points="925.7,584 938.5,576.5 928.2,570.6 915.4,578" fill="#202020" stroke="#000" stroke-width="0.9" stroke-linejoin="round" /><path d="M920 583.2V602A7 4 0 0 0 933.9 602V583.2A7 4 0 0 0 920 583.2Z" fill="url(#cg)" stroke="#000" stroke-width="1.1" /><polygon points="896.6,584.4 902.6,587.9 902.6,598.3 896.6,594.8" fill="#080808" stroke="#000" stroke-width="0.9" stroke-linejoin="round" /><polygon points="902.6,587.9 932.1,570.9 932.1,581.2 902.6,598.3" fill="#111" stroke="#000" stroke-width="0.9" stroke-linejoin="round" /><polygon points="902.6,587.9 932.1,570.9 926.1,567.4 896.6,584.4" fill="#1a1a1a" stroke="#000" stroke-width="0.9" stroke-linejoin="round" /><polygon points="904.7,594.6 930.4,579.8 930.4,577.8 904.7,592.6" fill="#e9e9e9" stroke="none" stroke-width="0" stroke-linejoin="round" /><polygon points="904.7,590.9 930.4,576 930.4,574.1 904.7,588.9" fill="#e9e9e9" stroke="none" stroke-width="0" stroke-linejoin="round" /><polygon points="891.9,594.1 904.3,601.2 904.3,609.6 891.9,602.5" fill="#0c0c0c" stroke="#000" stroke-width="0.9" stroke-linejoin="round" /><polygon points="904.3,601.2 921.4,591.4 921.4,599.8 904.3,609.6" fill="#151515" stroke="#000" stroke-width="0.9" stroke-linejoin="round" /><polygon points="904.3,601.2 921.4,591.4 909,584.2 891.9,594.1" fill="#202020" stroke="#000" stroke-width="0.9" stroke-linejoin="round" /><path d="M896.5 599.5V621.7A9.1 5.2 0 0 0 914.7 621.7V599.5A9.1 5.2 0 0 0 896.5 599.5Z" fill="url(#cg)" stroke="#000" stroke-width="1.1" /><polygon points="872.6,602.7 882.9,608.7 882.9,615.6 872.6,609.6" fill="#0c0c0c" stroke="#000" stroke-width="0.9" stroke-linejoin="round" /><polygon points="882.9,608.7 895.7,601.2 895.7,608.2 882.9,615.6" fill="#151515" stroke="#000" stroke-width="0.9" stroke-linejoin="round" /><polygon points="882.9,608.7 895.7,601.2 885.5,595.3 872.6,602.7" fill="#202020" stroke="#000" stroke-width="0.9" stroke-linejoin="round" /><path d="M877.2 607.9V626.7A7 4 0 0 0 891.1 626.7V607.9A7 4 0 0 0 877.2 607.9Z" fill="url(#cg)" stroke="#000" stroke-width="1.1" /><polygon points="851.2,615.1 861.5,621 861.5,627.9 851.2,622" fill="#0c0c0c" stroke="#000" stroke-width="0.9" stroke-linejoin="round" /><polygon points="861.5,621 874.3,613.6 874.3,620.5 861.5,627.9" fill="#151515" stroke="#000" stroke-width="0.9" stroke-linejoin="round" /><polygon points="861.5,621 874.3,613.6 864.1,607.7 851.2,615.1" fill="#202020" stroke="#000" stroke-width="0.9" stroke-linejoin="round" /><path d="M855.8 620.3V639A7 4 0 0 0 869.8 639V620.3A7 4 0 0 0 855.8 620.3Z" fill="url(#cg)" stroke="#000" stroke-width="1.1" /><polygon points="832.4,621.5 838.4,625 838.4,635.3 832.4,631.9" fill="#080808" stroke="#000" stroke-width="0.9" stroke-linejoin="round" /><polygon points="838.4,625 867.9,607.9 867.9,618.3 838.4,635.3" fill="#111" stroke="#000" stroke-width="0.9" stroke-linejoin="round" /><polygon points="838.4,625 867.9,607.9 861.9,604.5 832.4,621.5" fill="#1a1a1a" stroke="#000" stroke-width="0.9" stroke-linejoin="round" /><polygon points="840.5,631.6 866.2,616.8 866.2,614.8 840.5,629.6" fill="#e9e9e9" stroke="none" stroke-width="0" stroke-linejoin="round" /><polygon points="840.5,627.9 866.2,613.1 866.2,611.1 840.5,625.9" fill="#e9e9e9" stroke="none" stroke-width="0" stroke-linejoin="round" /><polygon points="827.7,631.1 840.1,638.3 840.1,646.7 827.7,639.5" fill="#0c0c0c" stroke="#000" stroke-width="0.9" stroke-linejoin="round" /><polygon points="840.1,638.3 857.2,628.4 857.2,636.8 840.1,646.7" fill="#151515" stroke="#000" stroke-width="0.9" stroke-linejoin="round" /><polygon points="840.1,638.3 857.2,628.4 844.8,621.2 827.7,631.1" fill="#202020" stroke="#000" stroke-width="0.9" stroke-linejoin="round" /><path d="M832.3 636.6V658.8A9.1 5.2 0 0 0 850.5 658.8V636.6A9.1 5.2 0 0 0 832.3 636.6Z" fill="url(#cg)" stroke="#000" stroke-width="1.1" /><polygon points="808.5,639.8 818.7,645.7 818.7,652.6 808.5,646.7" fill="#0c0c0c" stroke="#000" stroke-width="0.9" stroke-linejoin="round" /><polygon points="818.7,645.7 831.6,638.3 831.6,645.2 818.7,652.6" fill="#151515" stroke="#000" stroke-width="0.9" stroke-linejoin="round" /><polygon points="818.7,645.7 831.6,638.3 821.3,632.4 808.5,639.8" fill="#202020" stroke="#000" stroke-width="0.9" stroke-linejoin="round" /><path d="M813.1 645V663.7A7 4 0 0 0 827 663.7V645A7 4 0 0 0 813.1 645Z" fill="url(#cg)" stroke="#000" stroke-width="1.1" /><polygon points="789.6,646.2 795.6,649.7 795.6,660 789.6,656.6" fill="#080808" stroke="#000" stroke-width="0.9" stroke-linejoin="round" /><polygon points="795.6,649.7 825.1,632.6 825.1,643 795.6,660" fill="#111" stroke="#000" stroke-width="0.9" stroke-linejoin="round" /><polygon points="795.6,649.7 825.1,632.6 819.2,629.2 789.6,646.2" fill="#1a1a1a" stroke="#000" stroke-width="0.9" stroke-linejoin="round" /><polygon points="797.8,656.3 823.4,641.5 823.4,639.5 797.8,654.3" fill="#e9e9e9" stroke="none" stroke-width="0" stroke-linejoin="round" /><polygon points="797.8,652.6 823.4,637.8 823.4,635.8 797.8,650.6" fill="#e9e9e9" stroke="none" stroke-width="0" stroke-linejoin="round" /><polygon points="784.9,655.8 797.3,663 797.3,671.4 784.9,664.2" fill="#0c0c0c" stroke="#000" stroke-width="0.9" stroke-linejoin="round" /><polygon points="797.3,663 814.4,653.1 814.4,661.5 797.3,671.4" fill="#151515" stroke="#000" stroke-width="0.9" stroke-linejoin="round" /><polygon points="797.3,663 814.4,653.1 802,645.9 784.9,655.8" fill="#202020" stroke="#000" stroke-width="0.9" stroke-linejoin="round" /><path d="M789.5 661.3V683.5A9.1 5.2 0 0 0 807.7 683.5V661.3A9.1 5.2 0 0 0 789.5 661.3Z" fill="url(#cg)" stroke="#000" stroke-width="1.1" /><polygon points="765.7,664.5 775.9,670.4 775.9,677.3 765.7,671.4" fill="#0c0c0c" stroke="#000" stroke-width="0.9" stroke-linejoin="round" /><polygon points="775.9,670.4 788.8,663 788.8,669.9 775.9,677.3" fill="#151515" stroke="#000" stroke-width="0.9" stroke-linejoin="round" /><polygon points="775.9,670.4 788.8,663 778.5,657.1 765.7,664.5" fill="#202020" stroke="#000" stroke-width="0.9" stroke-linejoin="round" /><path d="M770.3 669.7V688.4A7 4 0 0 0 784.2 688.4V669.7A7 4 0 0 0 770.3 669.7Z" fill="url(#cg)" stroke="#000" stroke-width="1.1" /><polygon points="746.9,670.9 752.8,674.4 752.8,684.7 746.9,681.3" fill="#080808" stroke="#000" stroke-width="0.9" stroke-linejoin="round" /><polygon points="752.8,674.4 782.4,657.3 782.4,667.7 752.8,684.7" fill="#111" stroke="#000" stroke-width="0.9" stroke-linejoin="round" /><polygon points="752.8,674.4 782.4,657.3 776.4,653.9 746.9,670.9" fill="#1a1a1a" stroke="#000" stroke-width="0.9" stroke-linejoin="round" /><polygon points="755,681 780.7,666.2 780.7,664.2 755,679" fill="#e9e9e9" stroke="none" stroke-width="0" stroke-linejoin="round" /><polygon points="755,677.3 780.7,662.5 780.7,660.5 755,675.3" fill="#e9e9e9" stroke="none" stroke-width="0" stroke-linejoin="round" /><polygon points="742.1,680.5 754.6,687.7 754.6,696.1 742.1,688.9" fill="#0c0c0c" stroke="#000" stroke-width="0.9" stroke-linejoin="round" /><polygon points="754.6,687.7 771.7,677.8 771.7,686.2 754.6,696.1" fill="#151515" stroke="#000" stroke-width="0.9" stroke-linejoin="round" /><polygon points="754.6,687.7 771.7,677.8 759.3,670.6 742.1,680.5" fill="#202020" stroke="#000" stroke-width="0.9" stroke-linejoin="round" /><path d="M746.8 686V708.2A9.1 5.2 0 0 0 764.9 708.2V686A9.1 5.2 0 0 0 746.8 686Z" fill="url(#cg)" stroke="#000" stroke-width="1.1" /><polygon points="722.9,689.2 733.2,695.1 733.2,702 722.9,696.1" fill="#0c0c0c" stroke="#000" stroke-width="0.9" stroke-linejoin="round" /><polygon points="733.2,695.1 746,687.7 746,694.6 733.2,702" fill="#151515" stroke="#000" stroke-width="0.9" stroke-linejoin="round" /><polygon points="733.2,695.1 746,687.7 735.7,681.8 722.9,689.2" fill="#202020" stroke="#000" stroke-width="0.9" stroke-linejoin="round" /><path d="M727.5 694.4V713.1A7 4 0 0 0 741.4 713.1V694.4A7 4 0 0 0 727.5 694.4Z" fill="url(#cg)" stroke="#000" stroke-width="1.1" /><polygon points="704.1,695.6 710.1,699.1 710.1,709.4 704.1,706" fill="#080808" stroke="#000" stroke-width="0.9" stroke-linejoin="round" /><polygon points="710.1,699.1 739.6,682 739.6,692.4 710.1,709.4" fill="#111" stroke="#000" stroke-width="0.9" stroke-linejoin="round" /><polygon points="710.1,699.1 739.6,682 733.6,678.6 704.1,695.6" fill="#1a1a1a" stroke="#000" stroke-width="0.9" stroke-linejoin="round" /><polygon points="712.2,705.7 737.9,690.9 737.9,688.9 712.2,703.7" fill="#e9e9e9" stroke="none" stroke-width="0" stroke-linejoin="round" /><polygon points="712.2,702 737.9,687.2 737.9,685.2 712.2,700" fill="#e9e9e9" stroke="none" stroke-width="0" stroke-linejoin="round" /><polygon points="699.4,705.2 711.8,712.4 711.8,720.8 699.4,713.6" fill="#0c0c0c" stroke="#000" stroke-width="0.9" stroke-linejoin="round" /><polygon points="711.8,712.4 728.9,702.5 728.9,710.9 711.8,720.8" fill="#151515" stroke="#000" stroke-width="0.9" stroke-linejoin="round" /><polygon points="711.8,712.4 728.9,702.5 716.5,695.3 699.4,705.2" fill="#202020" stroke="#000" stroke-width="0.9" stroke-linejoin="round" /><path d="M704 710.7V735.4A9.1 5.2 0 0 0 722.1 735.4V710.7A9.1 5.2 0 0 0 704 710.7Z" fill="url(#cg)" stroke="#000" stroke-width="1.1" /><line x1="748.4" y1="634.4" x2="740.9" y2="654.6" stroke="#0c5a1e" stroke-width="3.2" stroke-linecap="round"/><line x1="748.4" y1="634.4" x2="757" y2="659.6" stroke="#0c5a1e" stroke-width="3.2" stroke-linecap="round"/><line x1="748.4" y1="634.4" x2="752.4" y2="676.6" stroke="#0c5a1e" stroke-width="3.2" stroke-linecap="round"/><line x1="748.4" y1="634.4" x2="758" y2="673.4" stroke="#0c5a1e" stroke-width="3.2" stroke-linecap="round"/><line x1="748.4" y1="634.4" x2="743.2" y2="650.5" stroke="#0c5a1e" stroke-width="3.2" stroke-linecap="round"/><line x1="748.4" y1="634.4" x2="753.5" y2="645.6" stroke="#0c5a1e" stroke-width="3.2" stroke-linecap="round"/><line x1="748.4" y1="634.4" x2="740.9" y2="654.6" stroke="#2fc24a" stroke-width="1.5" stroke-linecap="round"/><line x1="748.4" y1="634.4" x2="757" y2="659.6" stroke="#2fc24a" stroke-width="1.5" stroke-linecap="round"/><line x1="748.4" y1="634.4" x2="752.4" y2="676.6" stroke="#2fc24a" stroke-width="1.5" stroke-linecap="round"/><line x1="748.4" y1="634.4" x2="758" y2="673.4" stroke="#2fc24a" stroke-width="1.5" stroke-linecap="round"/><line x1="748.4" y1="634.4" x2="743.2" y2="650.5" stroke="#2fc24a" stroke-width="1.5" stroke-linecap="round"/><line x1="748.4" y1="634.4" x2="753.5" y2="645.6" stroke="#2fc24a" stroke-width="1.5" stroke-linecap="round"/><line x1="748.8" y1="618.3" x2="748.8" y2="459.8" stroke="#000" stroke-width="2.9" /><ellipse cx="749.1" cy="455.2" rx="3.400" ry="3.600" fill="#0a0a0a"/><rect x="746.2" y="456.8" width="5.200" height="7" rx="1.200" fill="#0a0a0a"/><rect x="747.8" y="460.4" width="2" height="1.400" fill="#ddd"/><g transform="translate(747.6 624.3) rotate(23)"><path d="M-11.500 -7.600H12A4.500 7.600 0 0 1 12 7.600H-11.500A7.600 7.600 0 0 1 -11.500 -7.600Z" fill="#f5a31c" stroke="#000" stroke-width="1.2"/><ellipse cx="12" cy="0" rx="4.500" ry="7.600" fill="#f8b53a" stroke="#000" stroke-width="1"/><ellipse cx="-1" cy="-7.800" rx="2.200" ry="1.300" fill="#111"/></g><line x1="748.4" y1="628.4" x2="748.4" y2="634.4" stroke="#111" stroke-width="2.5" /><line x1="984.5" y1="498" x2="977" y2="518.3" stroke="#0c5a1e" stroke-width="3.2" stroke-linecap="round"/><line x1="984.5" y1="498" x2="993.1" y2="523.3" stroke="#0c5a1e" stroke-width="3.2" stroke-linecap="round"/><line x1="984.5" y1="498" x2="988.6" y2="540.2" stroke="#0c5a1e" stroke-width="3.2" stroke-linecap="round"/><line x1="984.5" y1="498" x2="994.1" y2="537" stroke="#0c5a1e" stroke-width="3.2" stroke-linecap="round"/><line x1="984.5" y1="498" x2="979.4" y2="514.2" stroke="#0c5a1e" stroke-width="3.2" stroke-linecap="round"/><line x1="984.5" y1="498" x2="989.6" y2="509.2" stroke="#0c5a1e" stroke-width="3.2" stroke-linecap="round"/><line x1="984.5" y1="498" x2="977" y2="518.3" stroke="#2fc24a" stroke-width="1.5" stroke-linecap="round"/><line x1="984.5" y1="498" x2="993.1" y2="523.3" stroke="#2fc24a" stroke-width="1.5" stroke-linecap="round"/><line x1="984.5" y1="498" x2="988.6" y2="540.2" stroke="#2fc24a" stroke-width="1.5" stroke-linecap="round"/><line x1="984.5" y1="498" x2="994.1" y2="537" stroke="#2fc24a" stroke-width="1.5" stroke-linecap="round"/><line x1="984.5" y1="498" x2="979.4" y2="514.2" stroke="#2fc24a" stroke-width="1.5" stroke-linecap="round"/><line x1="984.5" y1="498" x2="989.6" y2="509.2" stroke="#2fc24a" stroke-width="1.5" stroke-linecap="round"/><line x1="984.9" y1="482" x2="984.9" y2="323.5" stroke="#000" stroke-width="2.9" /><ellipse cx="985.2" cy="318.9" rx="3.400" ry="3.600" fill="#0a0a0a"/><rect x="982.3" y="320.5" width="5.200" height="7" rx="1.200" fill="#0a0a0a"/><rect x="983.9" y="324.1" width="2" height="1.400" fill="#ddd"/><g transform="translate(983.7 488) rotate(23)"><path d="M-11.500 -7.600H12A4.500 7.600 0 0 1 12 7.600H-11.500A7.600 7.600 0 0 1 -11.500 -7.600Z" fill="#f5a31c" stroke="#000" stroke-width="1.2"/><ellipse cx="12" cy="0" rx="4.500" ry="7.600" fill="#f8b53a" stroke="#000" stroke-width="1"/><ellipse cx="-1" cy="-7.800" rx="2.200" ry="1.300" fill="#111"/></g><line x1="984.5" y1="492" x2="984.5" y2="498" stroke="#111" stroke-width="2.5" /><line x1="907.5" y1="853.8" x2="907.5" y2="100" stroke="#0c0c96" stroke-width="1.25" /></svg></div>
<div class="b" style="left:1494px;top:153px;width:425px;height:819px;background:#f1f1f6;border:1px solid #c4c4cb;border-radius:4px 4px 0 0"></div>
<div class="t " style="left:1499.70px;top:158.60px;font-size:13px;letter-spacing:-0.295px;color:#3a3d44;font-weight:bold;">Bandeja padrão</div>
<svg class="i" style="left:1886px;top:162px" width="32" height="14" viewBox="1886 162 32 14" fill="none" stroke="#555" stroke-width="1"><rect x="1887.5" y="163.500" width="10.5" height="10.5" rx="1.5"/><path d="M1890.5 166h4.500M1891.300 166v2.500h3V166M1890.200 168.800h5.200M1892.800 168.800V172" stroke-width="1.1"/><rect x="1905.500" y="163.500" width="10.5" height="10.5" rx="1.5"/><path d="M1908 166L1913.500 171.500M1913.500 166L1908 171.500" stroke-width="0.9"/></svg>
<div class="b" style="left:1494px;top:183px;width:425px;height:1.2px;background:#a9a9b0"></div>
<div class="b" style="left:1495px;top:184px;width:409.5px;height:788px;background:#f3f6fd"></div>
<div class="b" style="left:1904px;top:184px;width:1.5px;height:788px;background:#b3b3ba"></div>
<div class="b" style="left:1905.5px;top:184px;width:12px;height:788px;background:#f0f0f4"></div>
<div class="b" style="left:1905.5px;top:184px;width:12px;height:619px;background:#fdfdfe"></div>
<div class="b" style="left:1905.5px;top:184px;width:12px;height:15.5px;background:#fdfdfe;border-bottom:1px solid #d8d8de"></div>
<div class="b" style="left:1905.5px;top:956px;width:12px;height:15.5px;background:#fdfdfe;border-top:1px solid #d8d8de"></div>
<svg class="i" style="left:1907.500px;top:189px" width="8" height="4" viewBox="0 0 8 4"><path d="M0 4H8L4 0Z" fill="#8a8a8a"/></svg>
<svg class="i" style="left:1907.500px;top:962px" width="8" height="4" viewBox="0 0 8 4"><path d="M0 0H8L4 4Z" fill="#8a8a8a"/></svg>
<div class="b" style="left:1917.5px;top:184px;width:1.2px;height:788px;background:#b3b3ba"></div>
<div class="b" style="left:1495px;top:185px;width:409px;height:25.5px;background:#dfe0e7"></div>
<div class="t " style="left:1520.50px;top:189.14px;font-size:12px;letter-spacing:0.235px;color:#4a4d55;">Informações da entidade</div>
<svg class="i" style="left:1502px;top:193.2px" width="12" height="8" viewBox="0 0 12 8"><path d="M0.8 1L6 6.500L11.200 1" fill="none" stroke="#666" stroke-width="1.2"/></svg>
<div class="b" style="left:1881.7px;top:188px;width:19.6px;height:19.2px;background:#fff;border:1px solid #e4e4ea;border-radius:2.500px;box-shadow:0 0.5px 1px rgba(0,0,0,.18)"></div>
<svg class="i" style="left:1887.500px;top:193.6px" width="8" height="8" viewBox="0 0 8 8"><path d="M0.500 0.500L7.500 7.500M7.500 0.500L0.500 7.500" stroke="#444" stroke-width="0.9"/></svg>
<div class="t " style="left:1504.40px;top:218.57px;font-size:12.5px;letter-spacing:0.020px;color:#3a3d44;font-weight:bold;">Nenhuma seleção</div>
<div class="b" style="left:1504.5px;top:243px;width:1391px;height:0px;"></div>
<div class="b" style="left:1504.5px;top:243.2px;width:391px;height:1.2px;background:#dde1ea"></div>
<div class="b" style="left:1495px;top:442px;width:409px;height:26px;background:#dfe0e7"></div>
<div class="t " style="left:1520.50px;top:446.14px;font-size:12px;letter-spacing:0.313px;color:#4a4d55;">Materiais</div>
<svg class="i" style="left:1503px;top:448.5px" width="8" height="12" viewBox="0 0 8 12"><path d="M1 0.8L6.500 6L1 11.200" fill="none" stroke="#666" stroke-width="1.2"/></svg>
<div class="b" style="left:1881.7px;top:445px;width:19.6px;height:19.2px;background:#fff;border:1px solid #e4e4ea;border-radius:2.500px;box-shadow:0 0.5px 1px rgba(0,0,0,.18)"></div>
<svg class="i" style="left:1887.500px;top:450.6px" width="8" height="8" viewBox="0 0 8 8"><path d="M0.500 0.500L7.500 7.500M7.500 0.500L0.500 7.500" stroke="#444" stroke-width="0.9"/></svg>
<div class="b" style="left:1495px;top:469px;width:409px;height:26px;background:#dfe0e7"></div>
<div class="t " style="left:1520.50px;top:473.14px;font-size:12px;letter-spacing:0.190px;color:#4a4d55;">Componentes</div>
<svg class="i" style="left:1503px;top:475.5px" width="8" height="12" viewBox="0 0 8 12"><path d="M1 0.8L6.500 6L1 11.200" fill="none" stroke="#666" stroke-width="1.2"/></svg>
<div class="b" style="left:1881.7px;top:472px;width:19.6px;height:19.2px;background:#fff;border:1px solid #e4e4ea;border-radius:2.500px;box-shadow:0 0.5px 1px rgba(0,0,0,.18)"></div>
<svg class="i" style="left:1887.500px;top:477.6px" width="8" height="8" viewBox="0 0 8 8"><path d="M0.500 0.500L7.500 7.500M7.500 0.500L0.500 7.500" stroke="#444" stroke-width="0.9"/></svg>
<div class="b" style="left:1495px;top:496px;width:409px;height:26px;background:#dfe0e7"></div>
<div class="t " style="left:1520.50px;top:500.14px;font-size:12px;letter-spacing:-0.063px;color:#4a4d55;">Estilos</div>
<svg class="i" style="left:1503px;top:502.5px" width="8" height="12" viewBox="0 0 8 12"><path d="M1 0.8L6.500 6L1 11.200" fill="none" stroke="#666" stroke-width="1.2"/></svg>
<div class="b" style="left:1881.7px;top:499px;width:19.6px;height:19.2px;background:#fff;border:1px solid #e4e4ea;border-radius:2.500px;box-shadow:0 0.5px 1px rgba(0,0,0,.18)"></div>
<svg class="i" style="left:1887.500px;top:504.6px" width="8" height="8" viewBox="0 0 8 8"><path d="M0.500 0.500L7.500 7.500M7.500 0.500L0.500 7.500" stroke="#444" stroke-width="0.9"/></svg>
<div class="b" style="left:1495px;top:523px;width:409px;height:26px;background:#dfe0e7"></div>
<div class="t " style="left:1520.50px;top:527.14px;font-size:12px;letter-spacing:0.063px;color:#4a4d55;">Etiquetas</div>
<svg class="i" style="left:1503px;top:529.5px" width="8" height="12" viewBox="0 0 8 12"><path d="M1 0.8L6.500 6L1 11.200" fill="none" stroke="#666" stroke-width="1.2"/></svg>
<div class="b" style="left:1881.7px;top:526px;width:19.6px;height:19.2px;background:#fff;border:1px solid #e4e4ea;border-radius:2.500px;box-shadow:0 0.5px 1px rgba(0,0,0,.18)"></div>
<svg class="i" style="left:1887.500px;top:531.6px" width="8" height="8" viewBox="0 0 8 8"><path d="M0.500 0.500L7.500 7.500M7.500 0.500L0.500 7.500" stroke="#444" stroke-width="0.9"/></svg>
<div class="b" style="left:1495px;top:550px;width:409px;height:25.5px;background:#dfe0e7"></div>
<div class="t " style="left:1520.50px;top:554.14px;font-size:12px;letter-spacing:-0.197px;color:#4a4d55;">Cenas</div>
<svg class="i" style="left:1502px;top:558.2px" width="12" height="8" viewBox="0 0 12 8"><path d="M0.8 1L6 6.500L11.200 1" fill="none" stroke="#666" stroke-width="1.2"/></svg>
<div class="b" style="left:1881.7px;top:553px;width:19.6px;height:19.2px;background:#fff;border:1px solid #e4e4ea;border-radius:2.500px;box-shadow:0 0.5px 1px rgba(0,0,0,.18)"></div>
<svg class="i" style="left:1887.500px;top:558.6px" width="8" height="8" viewBox="0 0 8 8"><path d="M0.500 0.500L7.500 7.500M7.500 0.500L0.500 7.500" stroke="#444" stroke-width="0.9"/></svg>
<div class="b" style="left:1495px;top:468px;width:409px;height:1px;background:#eef0f6"></div>
<div class="b" style="left:1495px;top:495px;width:409px;height:1px;background:#eef0f6"></div>
<div class="b" style="left:1495px;top:522px;width:409px;height:1px;background:#eef0f6"></div>
<div class="b" style="left:1495px;top:549px;width:409px;height:1px;background:#eef0f6"></div>
<div class="b" style="left:1495px;top:575.5px;width:409px;height:26px;background:linear-gradient(#eef2fb,#f6f8fd)"></div>
<svg class="i" style="left:1499.00px;top:580.00px" width="16" height="16" viewBox="0 0 24 24"><path d="M3.500 11A8.600 8.600 0 0 1 19.500 7.500" fill="none" stroke="#111" stroke-width="2.8" stroke-linecap="round" stroke-linejoin="round" /><path d="M21.500 2.500V9.500H14.500Z" fill="#111"/><path d="M20.500 13A8.600 8.600 0 0 1 4.500 16.500" fill="none" stroke="#111" stroke-width="2.8" stroke-linecap="round" stroke-linejoin="round" /><path d="M2.500 21.500V14.500H9.500Z" fill="#111"/></svg>
<svg class="i" style="left:1524.50px;top:580.00px" width="16" height="16" viewBox="0 0 24 24"><circle cx="12" cy="12" r="10" fill="none" stroke="#111" stroke-width="2.200"/><path d="M12 6V18M6 12H18" stroke="#111" stroke-width="2.800"/></svg>
<svg class="i" style="left:1549.00px;top:580.00px" width="16" height="16" viewBox="0 0 24 24"><circle cx="12" cy="12" r="10" fill="none" stroke="#111" stroke-width="2.200"/><path d="M6 12H18" stroke="#111" stroke-width="2.800"/></svg>
<svg class="i" style="left:1776.50px;top:580.00px" width="16" height="16" viewBox="0 0 24 24"><path d="M15.500 3.500C11.500 3.500 11 6 11 9V17" fill="none" stroke="#111" stroke-width="3.4" stroke-linecap="round" stroke-linejoin="round" /><path d="M5.500 15.500H16.500L11 22.500Z" fill="#111"/></svg>
<svg class="i" style="left:1800.80px;top:580.00px" width="16" height="16" viewBox="0 0 24 24"><path d="M8.500 20.500C12.500 20.500 13 18 13 15V7" fill="none" stroke="#111" stroke-width="3.4" stroke-linecap="round" stroke-linejoin="round" /><path d="M7.500 8.500H18.500L13 1.500Z" fill="#111"/></svg>
<svg class="i" style="left:1824.00px;top:578.00px" width="20" height="20" viewBox="0 0 24 24"><rect x="2" y="4.500" width="5.500" height="5.500" fill="none" stroke="#111" stroke-width="1.700"/><rect x="2" y="14" width="5.500" height="5.500" fill="none" stroke="#111" stroke-width="1.700"/><path d="M10 5H16.500M10 7.500H15M10 10H13.500M10 14.500H16.500M10 17H15M10 19.500H13.500" stroke="#333" stroke-width="1.300"/><path d="M17.500 11H22L19.800 13.500Z" fill="#111"/></svg>
<svg class="i" style="left:1851.00px;top:580.00px" width="16" height="16" viewBox="0 0 24 24"><rect x="3.500" y="1.500" width="15" height="10" fill="#111"/><rect x="7" y="5" width="8" height="2.400" fill="#fff"/><rect x="3.500" y="12.500" width="15" height="10" fill="#f4f4f4" stroke="#ccc" stroke-width="0.800"/><path d="M5.500 20.500H16.500L11 14.500Z" fill="#111"/></svg>
<svg class="i" style="left:1876.30px;top:580.00px" width="16" height="16" viewBox="0 0 24 24"><path d="M10 1.500L22.500 12 10 22.500V17.500H3.500V6.500H10Z" fill="#111"/><rect x="4.800" y="7" width="8" height="10.500" fill="#3f7fe0"/><rect x="5.800" y="10" width="6" height="6.500" fill="#f2f2f2"/><path d="M6.500 12H11M6.500 14.300H11" stroke="#555" stroke-width="0.900"/></svg>
<div class="b" style="left:1495px;top:601px;width:409.5px;height:191.5px;background:#fff;border:1px solid #a9a9b0"></div>
<div class="b" style="left:1889px;top:602px;width:14.5px;height:189.5px;background:#f0f0f2;border-left:1px solid #dcdce0"></div>
<div class="b" style="left:1890px;top:602px;width:13.5px;height:14px;background:#fff;border-bottom:1px solid #dcdce0"></div>
<div class="b" style="left:1890px;top:777.5px;width:13.5px;height:14px;background:#fff;border-top:1px solid #dcdce0"></div>
<div class="b" style="left:1890px;top:616px;width:13.5px;height:64px;background:#fff;border-bottom:1px solid #cfcfd4"></div>
<svg class="i" style="left:1892.700px;top:606.500px" width="8" height="4" viewBox="0 0 8 4"><path d="M0 4H8L4 0Z" fill="#999"/></svg>
<svg class="i" style="left:1892.700px;top:783px" width="8" height="4" viewBox="0 0 8 4"><path d="M0 0H8L4 4Z" fill="#777"/></svg>
<div class="b" style="left:1496px;top:602px;width:393px;height:189.500px;overflow:hidden"><div class="b" style="left:-1496px;top:-602px;width:1920px;height:1032px">
<div class="b" style="left:1500px;top:612px;width:64.500px;height:64.500px;border:1px solid #d9d9de;border-top-color:#eee;border-left-color:#eee;background:#fff;overflow:hidden"><div class="b" style="left:0;top:0;width:63px;height:63px;background:linear-gradient(#a7a7a9 0,#a7a7a9 17%,#c6c6cb 19%,#cbcbcf 50%,#c3c3c8 80%,#a6a6a8 82%,#9d9d9f 100%)"></div><div class="b" style="left:6px;top:14.9px;width:52px;height:2.200px;background:repeating-linear-gradient(90deg,#9a5f80 0 2px,#b79aa8 2px 3px)"></div><div class="b" style="left:13px;top:14.3px;width:3.400px;height:3.400px;border-radius:2px;background:#c8a428"></div><div class="b" style="left:47.500px;top:14.3px;width:3.400px;height:3.400px;border-radius:2px;background:#c8a428"></div><div class="b" style="left:6px;top:30.9px;width:52px;height:2.200px;background:repeating-linear-gradient(90deg,#9a5f80 0 2px,#b79aa8 2px 3px)"></div><div class="b" style="left:13px;top:30.3px;width:3.400px;height:3.400px;border-radius:2px;background:#c8a428"></div><div class="b" style="left:47.500px;top:30.3px;width:3.400px;height:3.400px;border-radius:2px;background:#c8a428"></div><div class="b" style="left:6px;top:43.6px;width:52px;height:2.200px;background:repeating-linear-gradient(90deg,#9a5f80 0 2px,#b79aa8 2px 3px)"></div><div class="b" style="left:13px;top:43.0px;width:3.400px;height:3.400px;border-radius:2px;background:#c8a428"></div><div class="b" style="left:47.500px;top:43.0px;width:3.400px;height:3.400px;border-radius:2px;background:#c8a428"></div></div>
<div class="t " style="left:1568.50px;top:610.26px;font-size:10.5px;letter-spacing:-0.039px;color:#111;font-weight:bold;">Topo 1</div>
<div class="t " style="left:1568.50px;top:623.26px;font-size:10.5px;letter-spacing:-0.106px;color:#111;">Foto:</div>
<div class="t " style="left:1594.40px;top:623.26px;font-size:10.5px;letter-spacing:-0.415px;color:#808080;font-style:italic;">Nenhum</div>
<div class="t " style="left:1568.50px;top:636.16px;font-size:10.5px;letter-spacing:-0.488px;color:#808080;font-style:italic;">Sem descrição</div>
<div class="b" style="left:1500px;top:686.2px;width:64.500px;height:64.500px;border:1px solid #d9d9de;border-top-color:#eee;border-left-color:#eee;background:#fff;overflow:hidden"><div class="b" style="left:0;top:0;width:63px;height:63px;background:linear-gradient(#a7a7a9 0,#a7a7a9 17%,#c6c6cb 19%,#cbcbcf 50%,#c3c3c8 80%,#a6a6a8 82%,#9d9d9f 100%)"></div><div class="b" style="left:5.500px;top:14.8px;width:53px;height:2.400px;background:repeating-linear-gradient(100deg,#3f3a40 0 2.200px,#a07f8e 2.200px 3.400px)"></div><div class="b" style="left:5.500px;top:30.8px;width:53px;height:2.400px;background:repeating-linear-gradient(100deg,#3f3a40 0 2.200px,#a07f8e 2.200px 3.400px)"></div><div class="b" style="left:5.500px;top:43.5px;width:53px;height:2.400px;background:repeating-linear-gradient(100deg,#3f3a40 0 2.200px,#a07f8e 2.200px 3.400px)"></div></div>
<div class="t " style="left:1568.50px;top:684.46px;font-size:10.5px;letter-spacing:0.061px;color:#111;font-weight:bold;">Topo 2</div>
<div class="t " style="left:1568.50px;top:697.46px;font-size:10.5px;letter-spacing:-0.106px;color:#111;">Foto:</div>
<div class="t " style="left:1594.40px;top:697.46px;font-size:10.5px;letter-spacing:-0.415px;color:#808080;font-style:italic;">Nenhum</div>
<div class="t " style="left:1568.50px;top:710.36px;font-size:10.5px;letter-spacing:-0.488px;color:#808080;font-style:italic;">Sem descrição</div>
<div class="b" style="left:1500px;top:760.2px;width:64.500px;height:64.500px;border:1px solid #d9d9de;border-top-color:#eee;border-left-color:#eee;background:#fff;overflow:hidden"><div class="b" style="left:0;top:0;width:63px;height:11.500px;background:#a8a8a9"></div><div class="b" style="left:0;top:11.500px;width:63px;height:53px;background:#18a1e2"></div><svg class="i" style="left:0;top:0" width="63" height="40" viewBox="0 0 63 40"><path d="M20.500 12.500L22.300 28M43 12.500L41.300 28M29.500 13V28M35 13V28" stroke="#15324a" stroke-width="0.700" fill="none"/><rect x="15" y="27.300" width="34" height="4.500" fill="#0b0b0b"/></svg></div>
<div class="t " style="left:1568.50px;top:758.46px;font-size:10.5px;letter-spacing:0.068px;color:#111;font-weight:bold;">Frente</div>
<div class="t " style="left:1568.50px;top:771.46px;font-size:10.5px;letter-spacing:-0.106px;color:#111;">Foto:</div>
<div class="t " style="left:1594.40px;top:771.46px;font-size:10.5px;letter-spacing:-0.415px;color:#808080;font-style:italic;">Nenhum</div>
<div class="t " style="left:1568.50px;top:784.36px;font-size:10.5px;letter-spacing:-0.488px;color:#808080;font-style:italic;">Sem descrição</div>
</div></div>
<div class="b" style="left:1585px;top:808px;width:13.5px;height:13px;background:#fff;border:1px solid #333;border-radius:1.5px"></div>
<svg class="i" style="left:1587px;top:810px" width="10" height="9" viewBox="0 0 10 9"><path d="M1 3.500L3.800 8L8.700 0.800" fill="none" stroke="#111" stroke-width="1.5"/></svg>
<div class="t " style="left:1604.50px;top:804.84px;font-size:12px;letter-spacing:0.234px;color:#4a4d55;">Incluir na animação</div>
<div class="t " style="left:1542.40px;top:829.54px;font-size:12px;letter-spacing:0.251px;color:#4a4d55;">Nome:</div>
<div class="b" style="left:1585px;top:832px;width:310px;height:24px;background:#fff;border:1px solid #b9b9c0;border-radius:2.500px"></div>
<div class="t " style="left:1588.50px;top:833.84px;font-size:12px;letter-spacing:-0.724px;color:#333;">ISO</div>
<div class="t " style="left:1520.00px;top:860.84px;font-size:12px;letter-spacing:0.232px;color:#4a4d55;">Descrição:</div>
<div class="b" style="left:1585px;top:862.5px;width:310px;height:24px;background:#fff;border:1px solid #b9b9c0;border-radius:2.500px"></div>
<div class="t " style="left:1504.50px;top:892.64px;font-size:12px;letter-spacing:0.260px;color:#4a4d55;">Propriedades</div>
<div class="t " style="left:1513.40px;top:908.84px;font-size:12px;letter-spacing:0.242px;color:#4a4d55;">para salvar:</div>
<div class="b" style="left:1585px;top:903.5px;width:13.5px;height:13px;background:#fff;border:1px solid #333;border-radius:1.5px"></div>
<svg class="i" style="left:1587px;top:905.5px" width="10" height="9" viewBox="0 0 10 9"><path d="M1 3.500L3.800 8L8.700 0.800" fill="none" stroke="#111" stroke-width="1.5"/></svg>
<div class="t " style="left:1604.50px;top:901.14px;font-size:12px;letter-spacing:0.171px;color:#4a4d55;">Localização da câmera</div>
<div class="b" style="left:1585px;top:937.5px;width:13.5px;height:13px;background:#fff;border:1px solid #333;border-radius:1.5px"></div>
<svg class="i" style="left:1587px;top:939.5px" width="10" height="9" viewBox="0 0 10 9"><path d="M1 3.500L3.800 8L8.700 0.800" fill="none" stroke="#111" stroke-width="1.5"/></svg>
<div class="t " style="left:1604.50px;top:934.64px;font-size:12px;letter-spacing:0.252px;color:#4a4d55;">Geometria oculta do nível superior</div>
<div class="b" style="left:1496px;top:960px;width:408px;height:11.500px;overflow:hidden"><div class="b" style="left:-1496px;top:-960px;width:1920px;height:1032px">
<div class="b" style="left:1585px;top:965.5px;width:13.5px;height:13px;background:#fff;border:1px solid #333;border-radius:1.5px"></div>
<svg class="i" style="left:1587px;top:967.5px" width="10" height="9" viewBox="0 0 10 9"><path d="M1 3.500L3.800 8L8.700 0.800" fill="none" stroke="#111" stroke-width="1.5"/></svg>
<div class="t " style="left:1604.50px;top:962.64px;font-size:12px;letter-spacing:0.086px;color:#4a4d55;">Objetos ocultos</div>
</div></div>
<div class="b" style="left:1494px;top:971.5px;width:425px;height:1px;background:#b3b3ba"></div>
<div class="b" style="left:0px;top:973px;width:298px;height:36px;background:#f2f2f7;border:1px solid #e2e2e8;border-left:none"></div>
<div class="grip" style="left:3px;top:982px;height:18px"></div>
<div class="t " style="left:11.00px;top:981.84px;font-size:12px;letter-spacing:0.378px;color:#333;">Medidas</div>
<div class="b" style="left:136px;top:980px;width:160px;height:21.5px;background:#f1f1f5;border:1px solid #a8a8b0;border-radius:2px"></div>
<div class="t " style="left:152.00px;top:1011.84px;font-size:12px;letter-spacing:0.475px;color:#333;">selecionar objetos. Shift = Adicionar/Subtrair. Ctrl = Adicionar. Shift + Ctrl = Subtrair.</div>
<div class="b" style="left:7.5px;top:1005px;width:145px;height:26px;background:#f6f6f9;border:1px solid #cfcfd5;border-radius:6px;box-shadow:0 1px 3px rgba(0,0,0,.22)"></div>
<svg class="i" style="left:16.00px;top:1011.00px" width="15" height="15" viewBox="0 0 24 24"><path d="M2.500 7.500L11.500 2.500 21 7.500V15.500L13.500 21" fill="none" stroke="#15689f" stroke-width="2.3" stroke-linecap="round" stroke-linejoin="round" /><path d="M7.500 9L12 6.300 16.800 9.300V14L13.500 16.500" fill="none" stroke="#2a9bd6" stroke-width="2.3" stroke-linecap="round" stroke-linejoin="round" /><path d="M2.500 8L11.500 12.500M2.500 12.500L10 16.500M2.500 17L10.500 21.500" fill="none" stroke="#15689f" stroke-width="2.3" stroke-linecap="round" stroke-linejoin="round" /><path d="M11.800 12.500V22.500" fill="none" stroke="#2a9bd6" stroke-width="2.2" stroke-linecap="round" stroke-linejoin="round" /></svg>
<svg class="i" style="left:30px;top:1010px" width="110" height="18" viewBox="30 1010 110 18" fill="none" stroke="#666" stroke-width="1"><rect x="33.5" y="1015.5" width="6" height="6" rx="1"/><path d="M35.5 1013.5h5a1.5 1.5 0 0 1 1.500 1.500v5"/><rect x="78.5" y="1013.5" width="9" height="9" rx="1"/><path d="M124.500 1013.500L133.500 1022.500M133.500 1013.500L124.500 1022.500"/></svg>
<svg class="i" style="left:0;top:1023px" width="9" height="9" viewBox="0 0 9 9"><path d="M0 0V9H9A9 9 0 0 1 0 0Z" fill="#fff"/></svg>
<svg class="i" style="left:1900px;top:1012px" width="20" height="20" viewBox="1900 1012 20 20"><rect x="1916.9" y="1019.9" width="1.2" height="1.2" fill="#a2a2a8"/><rect x="1915.8" y="1021.0" width="1.1" height="1.1" fill="#fff"/><rect x="1913.8" y="1022.9" width="1.2" height="1.2" fill="#a2a2a8"/><rect x="1912.7" y="1024.0" width="1.1" height="1.1" fill="#fff"/><rect x="1916.9" y="1022.9" width="1.2" height="1.2" fill="#a2a2a8"/><rect x="1915.8" y="1024.0" width="1.1" height="1.1" fill="#fff"/><rect x="1910.8" y="1026.0" width="1.2" height="1.2" fill="#a2a2a8"/><rect x="1909.7" y="1027.1" width="1.1" height="1.1" fill="#fff"/><rect x="1913.8" y="1026.0" width="1.2" height="1.2" fill="#a2a2a8"/><rect x="1912.7" y="1027.1" width="1.1" height="1.1" fill="#fff"/><rect x="1907.9" y="1028.9" width="1.2" height="1.2" fill="#a2a2a8"/><rect x="1906.8" y="1030.0" width="1.1" height="1.1" fill="#fff"/><rect x="1910.9" y="1028.9" width="1.2" height="1.2" fill="#a2a2a8"/><rect x="1909.8" y="1030.0" width="1.1" height="1.1" fill="#fff"/><path d="M1920 1020V1032H1908A12 12 0 0 0 1920 1020Z" fill="#fff"/></svg>
</div>
</body></html>
